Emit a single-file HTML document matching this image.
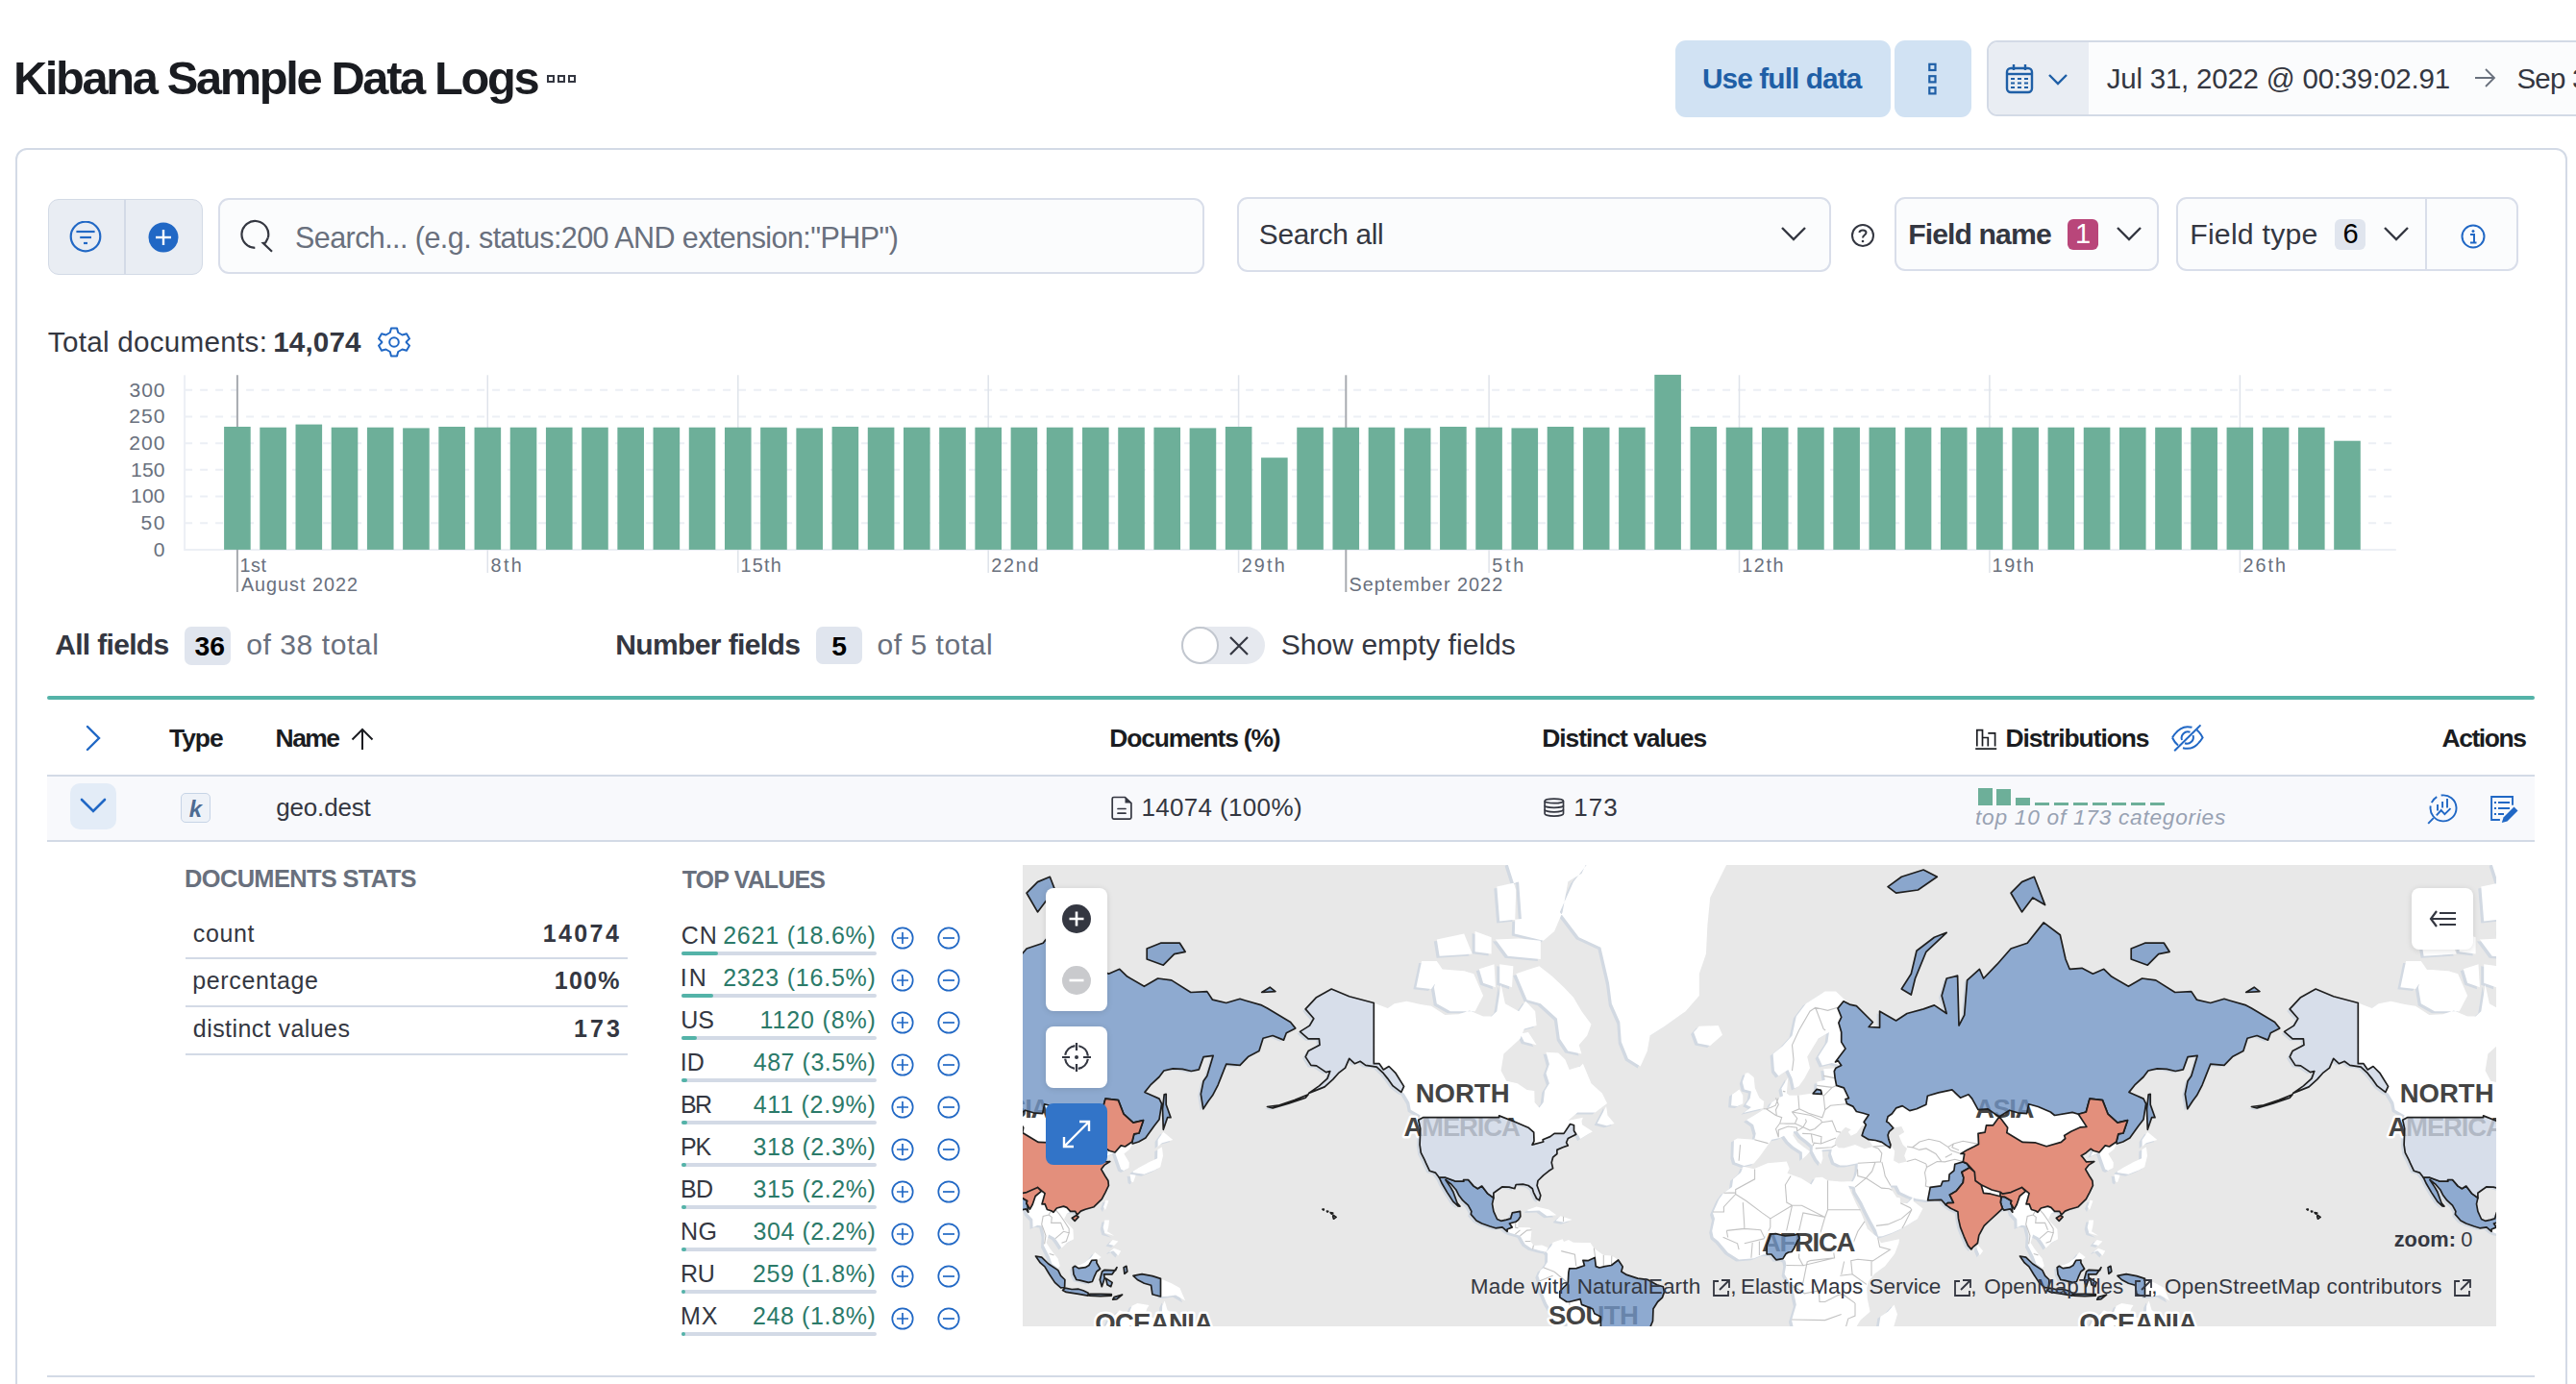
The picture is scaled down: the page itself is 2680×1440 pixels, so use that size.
<!DOCTYPE html>
<html><head><meta charset="utf-8"><title>Kibana</title>
<style>
html,body{margin:0;padding:0;background:#fff;width:2680px;height:1440px;overflow:hidden;position:relative;}
.a{position:absolute;}
.t{position:absolute;white-space:pre;line-height:1;font-family:"Liberation Sans",sans-serif;}
</style></head><body>
<svg class="a" style="left:566px;top:74px" width="40" height="16" viewBox="0 0 40 16"><g fill="none" stroke="#343741" stroke-width="2"><rect x="4" y="5" width="6" height="6"/><rect x="15" y="5" width="6" height="6"/><rect x="26" y="5" width="6" height="6"/></g></svg>
<div class="a" style="left:1743.00px;top:42.00px;width:224.00px;height:80.00px;background:#d1e2f3;border-radius:11px;"></div>
<div class="a" style="left:1971.00px;top:42.00px;width:80.00px;height:80.00px;background:#d1e2f3;border-radius:11px;"></div>
<svg class="a" style="left:2000px;top:60px" width="22" height="44" viewBox="0 0 22 44"><g fill="none" stroke="#1f5fa6" stroke-width="2.2"><rect x="7.3" y="6.8" width="6.2" height="6.2"/><rect x="7.3" y="19.2" width="6.2" height="6.2"/><rect x="7.3" y="31.2" width="6.2" height="6.2"/></g></svg>
<div class="a" style="left:2067.00px;top:42.00px;width:653.00px;height:79.00px;background:#fbfcfd;border:2px solid #d3dae6;border-radius:11px;box-sizing:border-box;"></div>
<div class="a" style="left:2069.00px;top:44.00px;width:104.00px;height:75.00px;background:#e9edf3;border-radius:9px 0 0 9px;"></div>
<svg class="a" style="left:2085px;top:65px" width="32" height="33" viewBox="0 0 32 33"><g fill="none" stroke="#1f5fa6" stroke-width="2.4"><rect x="3" y="6" width="26" height="25" rx="4"/><line x1="3" y1="12" x2="29" y2="12"/><line x1="10" y1="2" x2="10" y2="8"/><line x1="22" y1="2" x2="22" y2="8"/></g><g fill="#1f5fa6"><rect x="7" y="16" width="4" height="2"/><rect x="14" y="16" width="4" height="2"/><rect x="21" y="16" width="4" height="2"/><rect x="7" y="20.5" width="4" height="2"/><rect x="14" y="20.5" width="4" height="2"/><rect x="21" y="20.5" width="4" height="2"/><rect x="7" y="25" width="4" height="2"/><rect x="14" y="25" width="4" height="2"/><rect x="21" y="25" width="4" height="2"/></g></svg>
<svg class="a" style="left:2129px;top:74px" width="24" height="16" viewBox="0 0 24 16"><path d="M3 4 L12 13 L21 4" fill="none" stroke="#1f5fa6" stroke-width="2.4"/></svg>
<svg class="a" style="left:2572px;top:68px" width="26" height="26" viewBox="0 0 26 26"><path d="M3 13 H22 M14 4 L23 13 L14 22" fill="none" stroke="#69707d" stroke-width="1.8"/></svg>
<div class="a" style="left:15.50px;top:154.00px;width:2655.00px;height:1446.00px;border:2px solid #d3dae6;border-radius:12px;box-sizing:border-box;background:#fff;"></div>
<div class="a" style="left:49.50px;top:206.50px;width:161.00px;height:79.00px;background:#e9edf3;border:1.5px solid #d3dae6;border-radius:11px;box-sizing:border-box;"></div>
<div class="a" style="left:129.00px;top:207.00px;width:2.00px;height:78.00px;background:#d3dae6;"></div>
<svg class="a" style="left:72px;top:230px" width="34" height="34" viewBox="0 0 34 34"><g fill="none" stroke="#2168c5" stroke-width="2.2"><circle cx="17" cy="16" r="15.3"/><line x1="7.4" y1="11" x2="26.6" y2="11"/><line x1="11.2" y1="17" x2="23" y2="17"/><line x1="15" y1="23" x2="19" y2="23"/></g></svg>
<svg class="a" style="left:153px;top:230px" width="34" height="34" viewBox="0 0 34 34"><circle cx="17" cy="17" r="15.5" fill="#2168c5"/><g stroke="#fff" stroke-width="2.4"><line x1="17" y1="9" x2="17" y2="25"/><line x1="9" y1="17" x2="25" y2="17"/></g></svg>
<div class="a" style="left:227.20px;top:206.30px;width:1025.80px;height:79.00px;background:#fbfcfd;border:2px solid #d9deea;border-radius:11px;box-sizing:border-box;"></div>
<svg class="a" style="left:249px;top:228px" width="36" height="36" viewBox="0 0 36 36"><g fill="none" stroke="#343741" stroke-width="2.2"><path d="M16.3 29.8 A13.9 13.9 0 1 1 29.8 19.5"/><path d="M29.8 19.5 L27.2 24.6 L24.8 25 L34 33.7"/></g></svg>
<div class="a" style="left:1286.60px;top:204.90px;width:618.40px;height:78.60px;background:#fbfcfd;border:2px solid #d9deea;border-radius:11px;box-sizing:border-box;"></div>
<svg class="a" style="left:1850px;top:232px" width="32" height="24" viewBox="0 0 32 24"><path d="M4 5 L16 17 L28 5" fill="none" stroke="#343741" stroke-width="2.4"/></svg>
<svg class="a" style="left:1925px;top:232px" width="26" height="26" viewBox="0 0 26 26"><circle cx="13" cy="13" r="11" fill="none" stroke="#343741" stroke-width="2"/><path d="M9.5 10 C9.5 6.5 16.5 6.5 16.5 10 C16.5 12.5 13 12.5 13 15.5" fill="none" stroke="#343741" stroke-width="2"/><circle cx="13" cy="19" r="1.3" fill="#343741"/></svg>
<div class="a" style="left:1970.70px;top:204.60px;width:275.80px;height:77.90px;background:#fbfcfd;border:2px solid #d9deea;border-radius:11px;box-sizing:border-box;"></div>
<div class="a" style="left:2151.00px;top:228.00px;width:32.00px;height:32.00px;background:#b9467a;border-radius:6px;"></div>
<svg class="a" style="left:2199px;top:232px" width="32" height="24" viewBox="0 0 32 24"><path d="M4 5 L16 17 L28 5" fill="none" stroke="#343741" stroke-width="2.4"/></svg>
<div class="a" style="left:2263.50px;top:204.60px;width:356.50px;height:77.90px;background:#fbfcfd;border:2px solid #d9deea;border-radius:11px;box-sizing:border-box;"></div>
<div class="a" style="left:2523.00px;top:206.00px;width:2.00px;height:75.00px;background:#d9deea;"></div>
<div class="a" style="left:2429.00px;top:228.00px;width:32.00px;height:32.00px;background:#e0e5ee;border-radius:6px;"></div>
<svg class="a" style="left:2477px;top:232px" width="32" height="24" viewBox="0 0 32 24"><path d="M4 5 L16 17 L28 5" fill="none" stroke="#343741" stroke-width="2.4"/></svg>
<svg class="a" style="left:2559px;top:232px" width="28" height="28" viewBox="0 0 28 28"><circle cx="14" cy="14" r="11.5" fill="none" stroke="#2168c5" stroke-width="2"/><circle cx="14" cy="8.5" r="1.5" fill="#2168c5"/><path d="M11 12 H15 V20 M11 20.5 H17.5" fill="none" stroke="#2168c5" stroke-width="2"/></svg>
<svg class="a" style="left:393px;top:339px" width="34" height="34" viewBox="0 0 34 34"><path d="M14 2.5 H20 L21.2 7 L25.5 9.5 L30 8.2 L33 13.4 L29.7 16.7 V17.3 L33 20.6 L30 25.8 L25.5 24.5 L21.2 27 L20 31.5 H14 L12.8 27 L8.5 24.5 L4 25.8 L1 20.6 L4.3 17.3 V16.7 L1 13.4 L4 8.2 L8.5 9.5 L12.8 7 Z" fill="none" stroke="#2168c5" stroke-width="2" stroke-linejoin="round"/><circle cx="17" cy="17" r="4.8" fill="none" stroke="#2168c5" stroke-width="2"/></svg>
<svg class="a" style="left:0;top:0" width="2680" height="700"><line x1="192.1" y1="544.2" x2="2492.8" y2="544.2" stroke="#eceff5" stroke-width="2" stroke-dasharray="8 8"/><line x1="192.1" y1="516.5" x2="2492.8" y2="516.5" stroke="#eceff5" stroke-width="2" stroke-dasharray="8 8"/><line x1="192.1" y1="488.8" x2="2492.8" y2="488.8" stroke="#eceff5" stroke-width="2" stroke-dasharray="8 8"/><line x1="192.1" y1="461.2" x2="2492.8" y2="461.2" stroke="#eceff5" stroke-width="2" stroke-dasharray="8 8"/><line x1="192.1" y1="433.5" x2="2492.8" y2="433.5" stroke="#eceff5" stroke-width="2" stroke-dasharray="8 8"/><line x1="192.1" y1="405.8" x2="2492.8" y2="405.8" stroke="#eceff5" stroke-width="2" stroke-dasharray="8 8"/><line x1="192.1" y1="390.3" x2="192.1" y2="572.9" stroke="#eceff5" stroke-width="2"/><line x1="192.1" y1="571.9" x2="2492.8" y2="571.9" stroke="#eceff5" stroke-width="2"/><line x1="246.9" y1="390.3" x2="246.9" y2="596" stroke="#dfe3ea" stroke-width="1.5"/><line x1="507.3" y1="390.3" x2="507.3" y2="596" stroke="#dfe3ea" stroke-width="1.5"/><line x1="767.8" y1="390.3" x2="767.8" y2="596" stroke="#dfe3ea" stroke-width="1.5"/><line x1="1028.2" y1="390.3" x2="1028.2" y2="596" stroke="#dfe3ea" stroke-width="1.5"/><line x1="1288.6" y1="390.3" x2="1288.6" y2="596" stroke="#dfe3ea" stroke-width="1.5"/><line x1="1549.1" y1="390.3" x2="1549.1" y2="596" stroke="#dfe3ea" stroke-width="1.5"/><line x1="1809.5" y1="390.3" x2="1809.5" y2="596" stroke="#dfe3ea" stroke-width="1.5"/><line x1="2069.9" y1="390.3" x2="2069.9" y2="596" stroke="#dfe3ea" stroke-width="1.5"/><line x1="2330.4" y1="390.3" x2="2330.4" y2="596" stroke="#dfe3ea" stroke-width="1.5"/><line x1="246.9" y1="390.3" x2="246.9" y2="616" stroke="#a8abb0" stroke-width="2"/><line x1="1400.3" y1="390.3" x2="1400.3" y2="616" stroke="#a8abb0" stroke-width="2"/><rect x="233.10" y="444.0" width="27.6" height="127.9" fill="#6daf99"/><rect x="270.31" y="444.7" width="27.6" height="127.2" fill="#6daf99"/><rect x="307.51" y="441.6" width="27.6" height="130.3" fill="#6daf99"/><rect x="344.71" y="444.7" width="27.6" height="127.2" fill="#6daf99"/><rect x="381.92" y="444.7" width="27.6" height="127.2" fill="#6daf99"/><rect x="419.12" y="445.4" width="27.6" height="126.5" fill="#6daf99"/><rect x="456.33" y="444.0" width="27.6" height="127.9" fill="#6daf99"/><rect x="493.54" y="444.7" width="27.6" height="127.2" fill="#6daf99"/><rect x="530.74" y="444.7" width="27.6" height="127.2" fill="#6daf99"/><rect x="567.95" y="444.7" width="27.6" height="127.2" fill="#6daf99"/><rect x="605.15" y="444.7" width="27.6" height="127.2" fill="#6daf99"/><rect x="642.36" y="444.7" width="27.6" height="127.2" fill="#6daf99"/><rect x="679.56" y="444.7" width="27.6" height="127.2" fill="#6daf99"/><rect x="716.76" y="444.7" width="27.6" height="127.2" fill="#6daf99"/><rect x="753.97" y="444.7" width="27.6" height="127.2" fill="#6daf99"/><rect x="791.17" y="444.7" width="27.6" height="127.2" fill="#6daf99"/><rect x="828.38" y="445.4" width="27.6" height="126.5" fill="#6daf99"/><rect x="865.59" y="444.0" width="27.6" height="127.9" fill="#6daf99"/><rect x="902.79" y="444.7" width="27.6" height="127.2" fill="#6daf99"/><rect x="940.00" y="444.7" width="27.6" height="127.2" fill="#6daf99"/><rect x="977.20" y="444.7" width="27.6" height="127.2" fill="#6daf99"/><rect x="1014.40" y="444.7" width="27.6" height="127.2" fill="#6daf99"/><rect x="1051.61" y="444.7" width="27.6" height="127.2" fill="#6daf99"/><rect x="1088.82" y="444.7" width="27.6" height="127.2" fill="#6daf99"/><rect x="1126.02" y="444.7" width="27.6" height="127.2" fill="#6daf99"/><rect x="1163.23" y="444.7" width="27.6" height="127.2" fill="#6daf99"/><rect x="1200.43" y="444.7" width="27.6" height="127.2" fill="#6daf99"/><rect x="1237.63" y="445.4" width="27.6" height="126.5" fill="#6daf99"/><rect x="1274.84" y="444.0" width="27.6" height="127.9" fill="#6daf99"/><rect x="1312.05" y="476.2" width="27.6" height="95.7" fill="#6daf99"/><rect x="1349.25" y="444.7" width="27.6" height="127.2" fill="#6daf99"/><rect x="1386.46" y="444.7" width="27.6" height="127.2" fill="#6daf99"/><rect x="1423.66" y="444.7" width="27.6" height="127.2" fill="#6daf99"/><rect x="1460.87" y="445.4" width="27.6" height="126.5" fill="#6daf99"/><rect x="1498.07" y="444.0" width="27.6" height="127.9" fill="#6daf99"/><rect x="1535.28" y="444.7" width="27.6" height="127.2" fill="#6daf99"/><rect x="1572.48" y="445.4" width="27.6" height="126.5" fill="#6daf99"/><rect x="1609.69" y="444.0" width="27.6" height="127.9" fill="#6daf99"/><rect x="1646.89" y="444.7" width="27.6" height="127.2" fill="#6daf99"/><rect x="1684.10" y="444.7" width="27.6" height="127.2" fill="#6daf99"/><rect x="1721.30" y="389.9" width="27.6" height="182.0" fill="#6daf99"/><rect x="1758.51" y="444.0" width="27.6" height="127.9" fill="#6daf99"/><rect x="1795.71" y="444.7" width="27.6" height="127.2" fill="#6daf99"/><rect x="1832.91" y="444.7" width="27.6" height="127.2" fill="#6daf99"/><rect x="1870.12" y="444.7" width="27.6" height="127.2" fill="#6daf99"/><rect x="1907.33" y="444.7" width="27.6" height="127.2" fill="#6daf99"/><rect x="1944.53" y="444.7" width="27.6" height="127.2" fill="#6daf99"/><rect x="1981.74" y="444.7" width="27.6" height="127.2" fill="#6daf99"/><rect x="2018.94" y="444.7" width="27.6" height="127.2" fill="#6daf99"/><rect x="2056.14" y="444.7" width="27.6" height="127.2" fill="#6daf99"/><rect x="2093.35" y="444.7" width="27.6" height="127.2" fill="#6daf99"/><rect x="2130.55" y="444.7" width="27.6" height="127.2" fill="#6daf99"/><rect x="2167.76" y="444.7" width="27.6" height="127.2" fill="#6daf99"/><rect x="2204.96" y="444.7" width="27.6" height="127.2" fill="#6daf99"/><rect x="2242.17" y="444.7" width="27.6" height="127.2" fill="#6daf99"/><rect x="2279.37" y="444.7" width="27.6" height="127.2" fill="#6daf99"/><rect x="2316.58" y="444.7" width="27.6" height="127.2" fill="#6daf99"/><rect x="2353.78" y="444.7" width="27.6" height="127.2" fill="#6daf99"/><rect x="2390.99" y="444.7" width="27.6" height="127.2" fill="#6daf99"/><rect x="2428.19" y="458.7" width="27.6" height="113.2" fill="#6daf99"/></svg>
<div class="a" style="left:192.00px;top:652.40px;width:48.40px;height:39.30px;background:#e0e5ee;border-radius:7px;"></div>
<div class="a" style="left:849.00px;top:652.20px;width:47.50px;height:39.20px;background:#e0e5ee;border-radius:7px;"></div>
<div class="a" style="left:1228.60px;top:652.00px;width:87.40px;height:39.00px;background:#e6e9ef;border-radius:20px;"></div>
<div class="a" style="left:1228.6px;top:652px;width:39px;height:39px;border-radius:50%;background:#fff;border:2px solid #c2c7cf;box-sizing:border-box;"></div>
<svg class="a" style="left:1277px;top:660px" width="24" height="24" viewBox="0 0 24 24"><path d="M3 3 L21 21 M21 3 L3 21" stroke="#343741" stroke-width="2.2"/></svg>
<div class="a" style="left:49.30px;top:724.30px;width:2587.70px;height:3.60px;background:#54b3a8;border-radius:2px;"></div>
<svg class="a" style="left:84px;top:752px" width="26" height="32" viewBox="0 0 26 32"><path d="M7 4 L19 16 L7 28" fill="none" stroke="#2168c5" stroke-width="2.4" stroke-linecap="round"/></svg>
<svg class="a" style="left:363px;top:756px" width="28" height="26" viewBox="0 0 28 26"><path d="M14 24 V3 M3.5 13.5 L14 3 L24.5 13.5" fill="none" stroke="#1a1c21" stroke-width="2"/></svg>
<svg class="a" style="left:2054px;top:758px" width="25" height="24" viewBox="0 0 25 24"><g fill="none" stroke="#1a1c21" stroke-width="1.7"><path d="M1.2 21.1 H23.2"/><path d="M2.8 18.4 V1.7 H8.5 V18.4 M8.5 9.5 H14.3 V18.4 M14.3 4.8 H21.6 V18.4"/></g></svg>
<svg class="a" style="left:2258px;top:752px" width="36" height="32" viewBox="0 0 36 32"><g fill="none" stroke="#2168c5" stroke-width="2"><path d="M2 15.5 C6 9 11 4.2 17.8 4.2 C19.5 4.2 21 4.4 22.5 4.8"/><path d="M27.5 7.5 C30 9.5 32 12.2 33.6 15.5 C29.6 22 24.6 26.8 17.8 26.8 C16 26.8 14.5 26.6 13 26.2"/><path d="M8 23.5 C5.5 21.5 3.5 18.8 2 15.5"/><path d="M12 18 A6.5 6.5 0 0 1 20.5 9.8"/><path d="M23.5 13 A6.5 6.5 0 0 1 15 21.2"/><path d="M4.2 29.2 L31.5 2.4"/></g></svg>
<div class="a" style="left:49.30px;top:806.00px;width:2587.70px;height:2.00px;background:#d3dae6;"></div>
<div class="a" style="left:49.30px;top:808.00px;width:2587.70px;height:66.00px;background:#f8f9fc;"></div>
<div class="a" style="left:49.30px;top:873.50px;width:2587.70px;height:2.00px;background:#d3dae6;"></div>
<div class="a" style="left:73.00px;top:815.40px;width:47.70px;height:47.50px;background:#e3ecf7;border-radius:10px;"></div>
<svg class="a" style="left:82px;top:826px" width="30" height="24" viewBox="0 0 30 24"><path d="M3 6 L15 18 L27 6" fill="none" stroke="#2168c5" stroke-width="2.6" stroke-linecap="round"/></svg>
<div class="a" style="left:188.20px;top:825.40px;width:31.30px;height:31.00px;background:#eef2f8;border:1.5px solid #c6d4e6;border-radius:5px;box-sizing:border-box;"></div>
<svg class="a" style="left:1155px;top:828px" width="25" height="26" viewBox="0 0 25 26"><path d="M15.5 1.5 H3.7 Q2.2 1.5 2.2 3 V22.6 Q2.2 24.1 3.7 24.1 H20.4 Q21.9 24.1 21.9 22.6 V7.6 Z" fill="none" stroke="#343741" stroke-width="1.7" stroke-linejoin="round"/><path d="M15.5 1.5 V7.6 H21.9 Z" fill="#343741"/><path d="M8 13.5 H16 M8 18.2 H16" stroke="#343741" stroke-width="1.7" stroke-linecap="round"/></svg>
<svg class="a" style="left:1604px;top:828px" width="26" height="24" viewBox="0 0 26 24"><g fill="none" stroke="#343741" stroke-width="1.7"><ellipse cx="12.8" cy="5.4" rx="9.7" ry="2.3"/><path d="M3.1 5.4 V18.6 C3.1 20 7.5 21.2 12.8 21.2 C18.1 21.2 22.5 20 22.5 18.6 V5.4"/><path d="M3.1 9.9 C3.1 11.3 7.5 12.3 12.8 12.3 C18.1 12.3 22.5 11.3 22.5 9.9"/><path d="M3.1 14.3 C3.1 15.7 7.5 16.8 12.8 16.8 C18.1 16.8 22.5 15.7 22.5 14.3"/></g></svg>
<div class="a" style="left:2057.80px;top:819.50px;width:14.80px;height:18.90px;background:#6daf99;"></div>
<div class="a" style="left:2077.40px;top:821.30px;width:14.80px;height:17.10px;background:#6daf99;"></div>
<div class="a" style="left:2097.40px;top:830.30px;width:14.80px;height:8.10px;background:#6daf99;"></div>
<div class="a" style="left:2117.40px;top:835.40px;width:14.80px;height:3.00px;background:#6daf99;"></div>
<div class="a" style="left:2137.40px;top:835.40px;width:14.80px;height:3.00px;background:#6daf99;"></div>
<div class="a" style="left:2157.40px;top:835.40px;width:14.80px;height:3.00px;background:#6daf99;"></div>
<div class="a" style="left:2177.40px;top:835.40px;width:14.80px;height:3.00px;background:#6daf99;"></div>
<div class="a" style="left:2197.40px;top:835.40px;width:14.80px;height:3.00px;background:#6daf99;"></div>
<div class="a" style="left:2217.40px;top:835.40px;width:14.80px;height:3.00px;background:#6daf99;"></div>
<div class="a" style="left:2237.40px;top:835.40px;width:14.80px;height:3.00px;background:#6daf99;"></div>
<svg class="a" style="left:2522px;top:823px" width="38" height="38" viewBox="0 0 38 38"><g fill="none" stroke="#2168c5" stroke-width="1.9"><path d="M17.66 4.56 A13.5 13.5 0 1 1 6.71 15.51"/><path d="M7.76 12.14 A13.5 13.5 0 0 1 13.25 6.16"/><path d="M9.8 28.1 L4.2 33.9"/><path d="M14 14.1 V20.4 M19.1 11.1 V17.4 M24 8.1 V17.6"/><path d="M12.8 25.3 L17.7 20 L21.4 24.1 L27.5 18.1"/></g></svg>
<svg class="a" style="left:2588px;top:826px" width="34" height="32" viewBox="0 0 34 32"><g fill="none" stroke="#2168c5" stroke-width="1.9"><path d="M26 11.8 V3 H4.1 V27 H12.9"/><path d="M11 9 H23 M11 15 H23 M11 21 H17"/></g><g fill="#2168c5"><rect x="7" y="8" width="2" height="2"/><rect x="7" y="14" width="2" height="2"/><rect x="7" y="20" width="2" height="2"/><path d="M14.8 30 L16.5 24.5 L27.5 13.5 L31.5 17.5 L20.5 28.5 Z"/></g></svg>
<div class="a" style="left:193.20px;top:995.80px;width:459.40px;height:2.00px;background:#d3dae6;"></div>
<div class="a" style="left:193.20px;top:1045.75px;width:459.40px;height:2.00px;background:#d3dae6;"></div>
<div class="a" style="left:193.20px;top:1095.70px;width:459.40px;height:2.00px;background:#d3dae6;"></div>
<div class="a" style="left:709.30px;top:990.10px;width:202.40px;height:3.70px;background:#d3dae6;border-radius:2px;"></div>
<div class="a" style="left:709.30px;top:990.10px;width:37.50px;height:3.70px;background:#54b3a8;border-radius:2px;"></div>
<svg class="a" style="left:926px;top:962.5px" width="26" height="26" viewBox="0 0 26 26"><g fill="none" stroke="#2168c5" stroke-width="1.7"><circle cx="13" cy="13" r="10.7"/><path d="M13 7 V19 M7 13 H19"/></g></svg>
<svg class="a" style="left:974px;top:962.5px" width="26" height="26" viewBox="0 0 26 26"><g fill="none" stroke="#2168c5" stroke-width="1.7"><circle cx="13" cy="13" r="10.7"/><path d="M7 13 H19"/></g></svg>
<div class="a" style="left:709.30px;top:1034.10px;width:202.40px;height:3.70px;background:#d3dae6;border-radius:2px;"></div>
<div class="a" style="left:709.30px;top:1034.10px;width:32.70px;height:3.70px;background:#54b3a8;border-radius:2px;"></div>
<svg class="a" style="left:926px;top:1006.5px" width="26" height="26" viewBox="0 0 26 26"><g fill="none" stroke="#2168c5" stroke-width="1.7"><circle cx="13" cy="13" r="10.7"/><path d="M13 7 V19 M7 13 H19"/></g></svg>
<svg class="a" style="left:974px;top:1006.5px" width="26" height="26" viewBox="0 0 26 26"><g fill="none" stroke="#2168c5" stroke-width="1.7"><circle cx="13" cy="13" r="10.7"/><path d="M7 13 H19"/></g></svg>
<div class="a" style="left:709.30px;top:1078.10px;width:202.40px;height:3.70px;background:#d3dae6;border-radius:2px;"></div>
<div class="a" style="left:709.30px;top:1078.10px;width:15.30px;height:3.70px;background:#54b3a8;border-radius:2px;"></div>
<svg class="a" style="left:926px;top:1050.5px" width="26" height="26" viewBox="0 0 26 26"><g fill="none" stroke="#2168c5" stroke-width="1.7"><circle cx="13" cy="13" r="10.7"/><path d="M13 7 V19 M7 13 H19"/></g></svg>
<svg class="a" style="left:974px;top:1050.5px" width="26" height="26" viewBox="0 0 26 26"><g fill="none" stroke="#2168c5" stroke-width="1.7"><circle cx="13" cy="13" r="10.7"/><path d="M7 13 H19"/></g></svg>
<div class="a" style="left:709.30px;top:1122.10px;width:202.40px;height:3.70px;background:#d3dae6;border-radius:2px;"></div>
<div class="a" style="left:709.30px;top:1122.10px;width:6.00px;height:3.70px;background:#54b3a8;border-radius:2px;"></div>
<svg class="a" style="left:926px;top:1094.5px" width="26" height="26" viewBox="0 0 26 26"><g fill="none" stroke="#2168c5" stroke-width="1.7"><circle cx="13" cy="13" r="10.7"/><path d="M13 7 V19 M7 13 H19"/></g></svg>
<svg class="a" style="left:974px;top:1094.5px" width="26" height="26" viewBox="0 0 26 26"><g fill="none" stroke="#2168c5" stroke-width="1.7"><circle cx="13" cy="13" r="10.7"/><path d="M7 13 H19"/></g></svg>
<div class="a" style="left:709.30px;top:1166.10px;width:202.40px;height:3.70px;background:#d3dae6;border-radius:2px;"></div>
<div class="a" style="left:709.30px;top:1166.10px;width:5.70px;height:3.70px;background:#54b3a8;border-radius:2px;"></div>
<svg class="a" style="left:926px;top:1138.5px" width="26" height="26" viewBox="0 0 26 26"><g fill="none" stroke="#2168c5" stroke-width="1.7"><circle cx="13" cy="13" r="10.7"/><path d="M13 7 V19 M7 13 H19"/></g></svg>
<svg class="a" style="left:974px;top:1138.5px" width="26" height="26" viewBox="0 0 26 26"><g fill="none" stroke="#2168c5" stroke-width="1.7"><circle cx="13" cy="13" r="10.7"/><path d="M7 13 H19"/></g></svg>
<div class="a" style="left:709.30px;top:1210.10px;width:202.40px;height:3.70px;background:#d3dae6;border-radius:2px;"></div>
<div class="a" style="left:709.30px;top:1210.10px;width:4.70px;height:3.70px;background:#54b3a8;border-radius:2px;"></div>
<svg class="a" style="left:926px;top:1182.5px" width="26" height="26" viewBox="0 0 26 26"><g fill="none" stroke="#2168c5" stroke-width="1.7"><circle cx="13" cy="13" r="10.7"/><path d="M13 7 V19 M7 13 H19"/></g></svg>
<svg class="a" style="left:974px;top:1182.5px" width="26" height="26" viewBox="0 0 26 26"><g fill="none" stroke="#2168c5" stroke-width="1.7"><circle cx="13" cy="13" r="10.7"/><path d="M7 13 H19"/></g></svg>
<div class="a" style="left:709.30px;top:1254.10px;width:202.40px;height:3.70px;background:#d3dae6;border-radius:2px;"></div>
<div class="a" style="left:709.30px;top:1254.10px;width:4.70px;height:3.70px;background:#54b3a8;border-radius:2px;"></div>
<svg class="a" style="left:926px;top:1226.5px" width="26" height="26" viewBox="0 0 26 26"><g fill="none" stroke="#2168c5" stroke-width="1.7"><circle cx="13" cy="13" r="10.7"/><path d="M13 7 V19 M7 13 H19"/></g></svg>
<svg class="a" style="left:974px;top:1226.5px" width="26" height="26" viewBox="0 0 26 26"><g fill="none" stroke="#2168c5" stroke-width="1.7"><circle cx="13" cy="13" r="10.7"/><path d="M7 13 H19"/></g></svg>
<div class="a" style="left:709.30px;top:1298.10px;width:202.40px;height:3.70px;background:#d3dae6;border-radius:2px;"></div>
<div class="a" style="left:709.30px;top:1298.10px;width:4.70px;height:3.70px;background:#54b3a8;border-radius:2px;"></div>
<svg class="a" style="left:926px;top:1270.5px" width="26" height="26" viewBox="0 0 26 26"><g fill="none" stroke="#2168c5" stroke-width="1.7"><circle cx="13" cy="13" r="10.7"/><path d="M13 7 V19 M7 13 H19"/></g></svg>
<svg class="a" style="left:974px;top:1270.5px" width="26" height="26" viewBox="0 0 26 26"><g fill="none" stroke="#2168c5" stroke-width="1.7"><circle cx="13" cy="13" r="10.7"/><path d="M7 13 H19"/></g></svg>
<div class="a" style="left:709.30px;top:1342.10px;width:202.40px;height:3.70px;background:#d3dae6;border-radius:2px;"></div>
<div class="a" style="left:709.30px;top:1342.10px;width:4.20px;height:3.70px;background:#54b3a8;border-radius:2px;"></div>
<svg class="a" style="left:926px;top:1314.5px" width="26" height="26" viewBox="0 0 26 26"><g fill="none" stroke="#2168c5" stroke-width="1.7"><circle cx="13" cy="13" r="10.7"/><path d="M13 7 V19 M7 13 H19"/></g></svg>
<svg class="a" style="left:974px;top:1314.5px" width="26" height="26" viewBox="0 0 26 26"><g fill="none" stroke="#2168c5" stroke-width="1.7"><circle cx="13" cy="13" r="10.7"/><path d="M7 13 H19"/></g></svg>
<div class="a" style="left:709.30px;top:1386.10px;width:202.40px;height:3.70px;background:#d3dae6;border-radius:2px;"></div>
<div class="a" style="left:709.30px;top:1386.10px;width:4.20px;height:3.70px;background:#54b3a8;border-radius:2px;"></div>
<svg class="a" style="left:926px;top:1358.5px" width="26" height="26" viewBox="0 0 26 26"><g fill="none" stroke="#2168c5" stroke-width="1.7"><circle cx="13" cy="13" r="10.7"/><path d="M13 7 V19 M7 13 H19"/></g></svg>
<svg class="a" style="left:974px;top:1358.5px" width="26" height="26" viewBox="0 0 26 26"><g fill="none" stroke="#2168c5" stroke-width="1.7"><circle cx="13" cy="13" r="10.7"/><path d="M7 13 H19"/></g></svg>
<div class="a" style="left:49.30px;top:1431.30px;width:2587.70px;height:2.00px;background:#d3dae6;"></div>
<svg class="a" style="left:1064px;top:900px" width="1533" height="480" viewBox="0 0 1533 480">
<rect width="1533" height="480" fill="#e8e8e8"/>
<path d="M-738.5 175.4L-729.9 182.8L-718.6 182.8L-718.0 189.3L-729.9 195.6L-732.8 201.6L-727.1 210.4L-721.4 210.9L-711.4 217.6L-707.2 216.5L-710.0 224.1L-718.6 231.9L-729.4 239.4L-712.9 232.9L-704.3 225.1L-698.6 218.7L-691.5 213.2L-687.3 203.4L-681.6 208.7L-675.9 206.3L-670.2 210.4L-658.8 212.1L-651.7 218.7L-647.4 224.1L-641.8 231.9L-633.2 238.4L-630.4 239.4L-624.7 248.9L-623.3 256.7L-613.3 262.5L-615.3 267.3L-613.3 276.5L-613.9 293.1L-612.7 301.4L-609.0 308.7L-607.6 311.9L-603.6 320.3L-597.7 322.1L-593.7 327.2L-590.6 333.8L-585.4 342.6L-579.2 352.1L-574.1 356.8L-572.1 357.1L-574.9 353.7L-579.2 342.0L-582.0 337.1L-587.1 329.5L-581.5 333.8L-576.3 339.7L-573.5 345.2L-569.2 350.9L-563.5 356.2L-560.1 362.4L-560.7 365.4L-555.0 372.0L-549.3 375.0L-540.8 378.0L-535.1 379.8L-528.0 378.9L-522.9 383.3L-519.4 385.1L-514.6 386.2L-509.5 387.7L-504.4 396.4L-498.1 400.7L-492.4 402.2L-488.2 403.6L-482.2 404.5L-480.5 400.2L-486.7 397.6L-495.3 397.9L-498.7 393.5L-497.5 381.8L-499.5 379.2L-511.8 378.9L-511.5 371.4L-509.2 367.8L-509.5 362.4L-517.7 363.9L-519.4 369.9L-523.7 371.1L-529.4 372.3L-533.4 370.5L-537.1 362.4L-538.5 354.6L-537.1 348.4L-537.1 343.3L-528.0 336.8L-520.9 337.1L-515.2 338.7L-513.8 334.5L-506.6 334.2L-501.0 335.5L-496.7 338.7L-495.6 342.6L-492.4 349.0L-489.6 350.9L-488.2 345.8L-491.9 335.5L-491.0 330.5L-485.3 324.8L-479.6 320.3L-475.4 317.6L-476.8 311.6L-475.4 306.2L-471.1 302.5L-471.1 298.4L-465.1 295.8L-459.7 293.9L-461.4 290.8L-459.7 286.5L-451.2 282.2L-448.9 283.0L-446.9 286.9L-441.2 283.4L-434.1 279.3L-444.9 272.3L-445.5 268.5L-444.1 264.7L-459.7 268.1L-449.8 259.4L-431.3 259.4L-424.2 254.0L-419.0 249.9L-424.2 239.4L-435.5 229.3L-444.1 208.7L-446.9 211.5L-458.3 214.9L-462.6 204.6L-469.7 197.4L-482.5 196.8L-479.1 209.2L-482.5 218.7L-479.1 229.3L-483.9 236.9L-485.3 248.9L-489.6 254.5L-494.4 248.9L-494.7 236.9L-502.4 235.9L-512.3 229.3L-523.7 226.7L-529.4 216.0L-526.6 198.6L-509.5 182.8L-505.2 172.6L-492.4 169.1L-493.8 154.2L-503.8 143.8L-510.9 154.2L-525.1 146.3L-529.4 126.5L-533.7 154.2L-539.4 159.6L-547.9 159.6L-562.1 153.4L-573.5 157.3L-587.7 158.1L-601.9 148.7L-613.3 147.1L-627.5 143.8L-640.3 146.3L-647.4 151.1L-661.7 145.5L-687.3 138.8L-705.8 131.0L-721.4 139.7L-732.8 151.9L-724.2 161.8L-728.5 169.1ZM285.5 175.4L294.1 182.8L305.4 182.8L306.0 189.3L294.1 195.6L291.2 201.6L296.9 210.4L302.6 210.9L312.6 217.6L316.8 216.5L314.0 224.1L305.4 231.9L294.6 239.4L311.1 232.9L319.7 225.1L325.4 218.7L332.5 213.2L336.7 203.4L342.4 208.7L348.1 206.3L353.8 210.4L365.2 212.1L372.3 218.7L376.6 224.1L382.2 231.9L390.8 238.4L393.6 239.4L399.3 248.9L400.7 256.7L410.7 262.5L408.7 267.3L410.7 276.5L410.1 293.1L411.3 301.4L415.0 308.7L416.4 311.9L420.4 320.3L426.3 322.1L430.3 327.2L433.4 333.8L438.6 342.6L444.8 352.1L449.9 356.8L451.9 357.1L449.1 353.7L444.8 342.0L442.0 337.1L436.9 329.5L442.5 333.8L447.7 339.7L450.5 345.2L454.8 350.9L460.5 356.2L463.9 362.4L463.3 365.4L469.0 372.0L474.7 375.0L483.2 378.0L488.9 379.8L496.0 378.9L501.1 383.3L504.6 385.1L509.4 386.2L514.5 387.7L519.6 396.4L525.9 400.7L531.6 402.2L535.8 403.6L541.8 404.5L543.5 400.2L537.3 397.6L528.7 397.9L525.3 393.5L526.5 381.8L524.5 379.2L512.2 378.9L512.5 371.4L514.8 367.8L514.5 362.4L506.3 363.9L504.6 369.9L500.3 371.1L494.6 372.3L490.6 370.5L486.9 362.4L485.5 354.6L486.9 348.4L486.9 343.3L496.0 336.8L503.1 337.1L508.8 338.7L510.2 334.5L517.4 334.2L523.0 335.5L527.3 338.7L528.4 342.6L531.6 349.0L534.4 350.9L535.8 345.8L532.1 335.5L533.0 330.5L538.7 324.8L544.4 320.3L548.6 317.6L547.2 311.6L548.6 306.2L552.9 302.5L552.9 298.4L558.9 295.8L564.3 293.9L562.6 290.8L564.3 286.5L572.8 282.2L575.1 283.0L577.1 286.9L582.8 283.4L589.9 279.3L579.1 272.3L578.5 268.5L579.9 264.7L564.3 268.1L574.2 259.4L592.7 259.4L599.8 254.0L605.0 249.9L599.8 239.4L588.5 229.3L579.9 208.7L577.1 211.5L565.7 214.9L561.4 204.6L554.3 197.4L541.5 196.8L544.9 209.2L541.5 218.7L544.9 229.3L540.1 236.9L538.7 248.9L534.4 254.5L529.6 248.9L529.3 236.9L521.6 235.9L511.7 229.3L500.3 226.7L494.6 216.0L497.4 198.6L514.5 182.8L518.8 172.6L531.6 169.1L530.2 154.2L520.2 143.8L513.1 154.2L498.9 146.3L494.6 126.5L490.3 154.2L484.6 159.6L476.1 159.6L461.9 153.4L450.5 157.3L436.3 158.1L422.1 148.7L410.7 147.1L396.5 143.8L383.7 146.3L376.6 151.1L362.3 145.5L336.7 138.8L318.2 131.0L302.6 139.7L291.2 151.9L299.8 161.8L295.5 169.1ZM1309.5 175.4L1318.1 182.8L1329.4 182.8L1330.0 189.3L1318.1 195.6L1315.2 201.6L1320.9 210.4L1326.6 210.9L1336.6 217.6L1340.8 216.5L1338.0 224.1L1329.4 231.9L1318.6 239.4L1335.1 232.9L1343.7 225.1L1349.4 218.7L1356.5 213.2L1360.7 203.4L1366.4 208.7L1372.1 206.3L1377.8 210.4L1389.2 212.1L1396.3 218.7L1400.6 224.1L1406.2 231.9L1414.8 238.4L1417.6 239.4L1423.3 248.9L1424.7 256.7L1434.7 262.5L1432.7 267.3L1434.7 276.5L1434.1 293.1L1435.3 301.4L1439.0 308.7L1440.4 311.9L1444.4 320.3L1450.3 322.1L1454.3 327.2L1457.4 333.8L1462.6 342.6L1468.8 352.1L1473.9 356.8L1475.9 357.1L1473.1 353.7L1468.8 342.0L1466.0 337.1L1460.9 329.5L1466.5 333.8L1471.7 339.7L1474.5 345.2L1478.8 350.9L1484.5 356.2L1487.9 362.4L1487.3 365.4L1493.0 372.0L1498.7 375.0L1507.2 378.0L1512.9 379.8L1520.0 378.9L1525.1 383.3L1528.6 385.1L1533.4 386.2L1538.5 387.7L1543.6 396.4L1549.9 400.7L1555.6 402.2L1559.8 403.6L1565.8 404.5L1567.5 400.2L1561.3 397.6L1552.7 397.9L1549.3 393.5L1550.5 381.8L1548.5 379.2L1536.2 378.9L1536.5 371.4L1538.8 367.8L1538.5 362.4L1530.3 363.9L1528.6 369.9L1524.3 371.1L1518.6 372.3L1514.6 370.5L1510.9 362.4L1509.5 354.6L1510.9 348.4L1510.9 343.3L1520.0 336.8L1527.1 337.1L1532.8 338.7L1534.2 334.5L1541.4 334.2L1547.0 335.5L1551.3 338.7L1552.4 342.6L1555.6 349.0L1558.4 350.9L1559.8 345.8L1556.1 335.5L1557.0 330.5L1562.7 324.8L1568.4 320.3L1572.6 317.6L1571.2 311.6L1572.6 306.2L1576.9 302.5L1576.9 298.4L1582.9 295.8L1588.3 293.9L1586.6 290.8L1588.3 286.5L1596.8 282.2L1599.1 283.0L1601.1 286.9L1606.8 283.4L1613.9 279.3L1603.1 272.3L1602.5 268.5L1603.9 264.7L1588.3 268.1L1598.2 259.4L1616.7 259.4L1623.8 254.0L1629.0 249.9L1623.8 239.4L1612.5 229.3L1603.9 208.7L1601.1 211.5L1589.7 214.9L1585.4 204.6L1578.3 197.4L1565.5 196.8L1568.9 209.2L1565.5 218.7L1568.9 229.3L1564.1 236.9L1562.7 248.9L1558.4 254.5L1553.6 248.9L1553.3 236.9L1545.6 235.9L1535.7 229.3L1524.3 226.7L1518.6 216.0L1521.4 198.6L1538.5 182.8L1542.8 172.6L1555.6 169.1L1554.2 154.2L1544.2 143.8L1537.1 154.2L1522.9 146.3L1518.6 126.5L1514.3 154.2L1508.6 159.6L1500.1 159.6L1485.9 153.4L1474.5 157.3L1460.3 158.1L1446.1 148.7L1434.7 147.1L1420.5 143.8L1407.7 146.3L1400.6 151.1L1386.3 145.5L1360.7 138.8L1342.2 131.0L1326.6 139.7L1315.2 151.9L1323.8 161.8L1319.5 169.1ZM-429.3 270.7L-419.9 253.1L-418.5 262.5L-411.4 271.1L-419.3 273.2ZM594.7 270.7L604.1 253.1L605.5 262.5L612.6 271.1L604.7 273.2ZM1618.7 270.7L1628.1 253.1L1629.5 262.5L1636.6 271.1L1628.7 273.2ZM-435.5 167.7L-445.5 154.2L-454.0 139.7L-464.0 129.2L-476.8 117.2L-489.6 107.3L-502.4 111.3L-513.8 115.2L-502.4 142.2L-488.2 146.3L-471.1 161.8L-468.2 182.8L-459.7 195.6L-445.5 198.6L-448.3 189.3L-439.8 179.5ZM588.5 167.7L578.5 154.2L570.0 139.7L560.0 129.2L547.2 117.2L534.4 107.3L521.6 111.3L510.2 115.2L521.6 142.2L535.8 146.3L552.9 161.8L555.8 182.8L564.3 195.6L578.5 198.6L575.7 189.3L584.2 179.5ZM1612.5 167.7L1602.5 154.2L1594.0 139.7L1584.0 129.2L1571.2 117.2L1558.4 107.3L1545.6 111.3L1534.2 115.2L1545.6 142.2L1559.8 146.3L1576.9 161.8L1579.8 182.8L1588.3 195.6L1602.5 198.6L1599.7 189.3L1608.2 179.5ZM-599.1 129.2L-593.4 110.3L-567.8 112.3L-557.8 115.2L-547.9 138.0L-556.4 154.2L-582.0 154.2L-596.2 146.3ZM424.9 129.2L430.6 110.3L456.2 112.3L466.2 115.2L476.1 138.0L467.6 154.2L442.0 154.2L427.8 146.3ZM1448.9 129.2L1454.6 110.3L1480.2 112.3L1490.2 115.2L1500.1 138.0L1491.6 154.2L1466.0 154.2L1451.8 146.3ZM-617.6 129.2L-611.9 102.1L-596.2 102.1L-589.1 112.3L-601.9 131.0ZM406.4 129.2L412.1 102.1L427.8 102.1L434.9 112.3L422.1 131.0ZM1430.4 129.2L1436.1 102.1L1451.8 102.1L1458.9 112.3L1446.1 131.0ZM-473.9 71.0L-485.3 80.8L-515.2 73.5L-513.8 28.0L-522.3 1.4L-488.2 -42.5L-431.3 -19.1L-445.5 10.7L-459.7 19.6L-465.4 50.9ZM550.1 71.0L538.7 80.8L508.8 73.5L510.2 28.0L501.7 1.4L535.8 -42.5L592.7 -19.1L578.5 10.7L564.3 19.6L558.6 50.9ZM1574.1 71.0L1562.7 80.8L1532.8 73.5L1534.2 28.0L1525.7 1.4L1559.8 -42.5L1616.7 -19.1L1602.5 10.7L1588.3 19.6L1582.6 50.9ZM-530.8 60.6L-508.1 57.9L-510.9 19.6L-533.7 24.6ZM493.2 60.6L515.9 57.9L513.1 19.6L490.3 24.6ZM1517.2 60.6L1539.9 57.9L1537.1 19.6L1514.3 24.6ZM-488.2 100.0L-522.3 96.7L-535.1 79.6L-510.9 78.4L-488.2 80.8ZM535.8 100.0L501.7 96.7L488.9 79.6L513.1 78.4L535.8 80.8ZM1559.8 100.0L1525.7 96.7L1512.9 79.6L1537.1 78.4L1559.8 80.8ZM-518.0 129.2L-530.8 124.7L-530.8 105.2L-516.6 107.3ZM506.0 129.2L493.2 124.7L493.2 105.2L507.4 107.3ZM1530.0 129.2L1517.2 124.7L1517.2 105.2L1531.4 107.3ZM-535.1 129.2L-547.9 124.7L-552.2 110.3L-536.5 105.2ZM488.9 129.2L476.1 124.7L471.8 110.3L487.5 105.2ZM1512.9 129.2L1500.1 124.7L1495.8 110.3L1511.5 105.2ZM-559.3 94.6L-593.4 96.7L-596.2 79.6L-567.8 73.5ZM464.7 94.6L430.6 96.7L427.8 79.6L456.2 73.5ZM1488.7 94.6L1454.6 96.7L1451.8 79.6L1480.2 73.5ZM-539.4 94.6L-556.4 92.3L-556.4 71.0L-539.4 77.2ZM484.6 94.6L467.6 92.3L467.6 71.0L484.6 77.2ZM1508.6 94.6L1491.6 92.3L1491.6 71.0L1508.6 77.2ZM-505.2 186.1L-492.4 189.3L-501.0 176.1L-509.5 177.5ZM518.8 186.1L531.6 189.3L523.0 176.1L514.5 177.5ZM1542.8 186.1L1555.6 189.3L1547.0 176.1L1538.5 177.5ZM-468.2 50.9L-448.3 77.2L-425.6 87.8L-417.0 124.7L-414.2 146.3L-405.7 165.5L-404.2 186.1L-397.1 203.4L-384.3 211.5L-377.2 195.6L-374.4 179.5L-360.2 170.5L-337.4 154.2L-323.2 138.0L-323.2 115.2L-316.1 94.6L-314.6 64.6L-311.8 35.9L-294.7 1.4L-345.9 -42.5L-402.8 -19.1L-437.0 -2.5L-454.0 19.6ZM555.8 50.9L575.7 77.2L598.4 87.8L607.0 124.7L609.8 146.3L618.3 165.5L619.8 186.1L626.9 203.4L639.7 211.5L646.8 195.6L649.6 179.5L663.8 170.5L686.6 154.2L700.8 138.0L700.8 115.2L707.9 94.6L709.4 64.6L712.2 35.9L729.3 1.4L678.1 -42.5L621.2 -19.1L587.0 -2.5L570.0 19.6ZM1579.8 50.9L1599.7 77.2L1622.4 87.8L1631.0 124.7L1633.8 146.3L1642.3 165.5L1643.8 186.1L1650.9 203.4L1663.7 211.5L1670.8 195.6L1673.6 179.5L1687.8 170.5L1710.6 154.2L1724.8 138.0L1724.8 115.2L1731.9 94.6L1733.4 64.6L1736.2 35.9L1753.3 1.4L1702.1 -42.5L1645.2 -19.1L1611.0 -2.5L1594.0 19.6ZM-328.9 176.1L-323.2 169.8L-303.3 169.1L-299.0 178.8L-311.8 189.9L-324.6 187.4ZM695.1 176.1L700.8 169.8L720.7 169.1L725.0 178.8L712.2 189.9L699.4 187.4ZM1719.1 176.1L1724.8 169.8L1744.7 169.1L1749.0 178.8L1736.2 189.9L1723.4 187.4ZM-502.4 361.1L-492.4 357.4L-479.6 360.5L-471.7 366.3L-481.6 367.2L-489.6 361.4L-501.0 362.1ZM521.6 361.1L531.6 357.4L544.4 360.5L552.3 366.3L542.4 367.2L534.4 361.4L523.0 362.1ZM1545.6 361.1L1555.6 357.4L1568.4 360.5L1576.3 366.3L1566.4 367.2L1558.4 361.4L1547.0 362.1ZM-472.2 371.7L-467.4 367.2L-455.4 371.1L-464.0 373.8L-471.9 372.3ZM551.8 371.7L556.6 367.2L568.6 371.1L560.0 373.8L552.1 372.3ZM1575.8 371.7L1580.6 367.2L1592.6 371.1L1584.0 373.8L1576.1 372.3ZM-482.2 404.5L-476.8 398.1L-475.4 394.7L-465.4 391.2L-464.0 394.1L-459.1 392.1L-454.0 394.7L-442.6 395.0L-436.4 395.0L-432.7 400.7L-422.7 407.9L-414.2 408.5L-407.1 413.0L-402.8 419.9L-404.2 425.0L-398.6 428.4L-387.2 432.1L-377.2 433.3L-367.3 438.7L-360.7 440.7L-359.6 446.4L-361.6 452.1L-366.4 456.5L-371.0 463.8L-371.5 476.5L-374.9 484.6L-377.2 489.2L-385.8 492.3L-398.6 503.2L-461.1 501.6L-460.3 478.3L-475.4 469.0L-481.9 457.9L-486.7 446.4L-491.6 440.7L-489.0 434.7L-490.7 429.3L-488.2 423.6L-484.7 420.7L-481.0 415.0L-480.8 406.5ZM541.8 404.5L547.2 398.1L548.6 394.7L558.6 391.2L560.0 394.1L564.9 392.1L570.0 394.7L581.4 395.0L587.6 395.0L591.3 400.7L601.3 407.9L609.8 408.5L616.9 413.0L621.2 419.9L619.8 425.0L625.4 428.4L636.8 432.1L646.8 433.3L656.7 438.7L663.3 440.7L664.4 446.4L662.4 452.1L657.6 456.5L653.0 463.8L652.5 476.5L649.1 484.6L646.8 489.2L638.2 492.3L625.4 503.2L562.9 501.6L563.7 478.3L548.6 469.0L542.1 457.9L537.3 446.4L532.4 440.7L535.0 434.7L533.3 429.3L535.8 423.6L539.3 420.7L543.0 415.0L543.2 406.5ZM1565.8 404.5L1571.2 398.1L1572.6 394.7L1582.6 391.2L1584.0 394.1L1588.9 392.1L1594.0 394.7L1605.4 395.0L1611.6 395.0L1615.3 400.7L1625.3 407.9L1633.8 408.5L1640.9 413.0L1645.2 419.9L1643.8 425.0L1649.4 428.4L1660.8 432.1L1670.8 433.3L1680.7 438.7L1687.3 440.7L1688.4 446.4L1686.4 452.1L1681.6 456.5L1677.0 463.8L1676.5 476.5L1673.1 484.6L1670.8 489.2L1662.2 492.3L1649.4 503.2L1586.9 501.6L1587.7 478.3L1572.6 469.0L1566.1 457.9L1561.3 446.4L1556.4 440.7L1559.0 434.7L1557.3 429.3L1559.8 423.6L1563.3 420.7L1567.0 415.0L1567.2 406.5ZM-277.4 315.8L-266.3 318.3L-252.1 312.3L-232.2 310.5L-229.3 317.9L-231.6 322.7L-217.4 327.8L-206.6 334.5L-202.3 327.2L-195.2 326.8L-189.5 330.2L-175.8 331.5L-168.7 331.2L-163.3 331.2L-161.3 337.1L-167.9 335.8L-165.3 342.6L-159.6 355.0L-154.8 363.9L-151.1 372.9L-148.2 380.4L-142.6 385.4L-137.4 389.5L-134.0 395.3L-115.0 391.2L-115.5 395.3L-119.8 406.5L-129.8 419.3L-141.1 427.8L-146.8 435.0L-148.8 442.1L-148.2 453.6L-145.4 466.7L-155.4 475.6L-161.0 484.6L-159.6 495.4L-166.7 501.6L-220.8 501.6L-227.0 475.6L-222.2 459.4L-225.9 442.1L-234.4 427.8L-232.7 417.9L-233.6 413.6L-236.4 412.2L-243.5 412.8L-247.8 407.0L-256.3 407.3L-266.3 411.3L-281.9 412.5L-293.3 405.3L-298.4 399.3L-303.3 393.5L-308.4 389.2L-309.8 382.7L-307.0 369.9L-309.0 363.9L-302.7 349.9L-298.1 343.6L-289.0 337.1L-287.9 328.8L-279.9 322.1ZM746.6 315.8L757.7 318.3L771.9 312.3L791.8 310.5L794.7 317.9L792.4 322.7L806.6 327.8L817.4 334.5L821.7 327.2L828.8 326.8L834.5 330.2L848.2 331.5L855.3 331.2L860.7 331.2L862.7 337.1L856.1 335.8L858.7 342.6L864.4 355.0L869.2 363.9L872.9 372.9L875.8 380.4L881.4 385.4L886.6 389.5L890.0 395.3L909.0 391.2L908.5 395.3L904.2 406.5L894.2 419.3L882.9 427.8L877.2 435.0L875.2 442.1L875.8 453.6L878.6 466.7L868.6 475.6L863.0 484.6L864.4 495.4L857.3 501.6L803.2 501.6L797.0 475.6L801.8 459.4L798.1 442.1L789.6 427.8L791.3 417.9L790.4 413.6L787.6 412.2L780.5 412.8L776.2 407.0L767.7 407.3L757.7 411.3L742.1 412.5L730.7 405.3L725.6 399.3L720.7 393.5L715.6 389.2L714.2 382.7L717.0 369.9L715.0 363.9L721.3 349.9L725.9 343.6L735.0 337.1L736.1 328.8L744.1 322.1ZM1770.6 315.8L1781.7 318.3L1795.9 312.3L1815.8 310.5L1818.7 317.9L1816.4 322.7L1830.6 327.8L1841.4 334.5L1845.7 327.2L1852.8 326.8L1858.5 330.2L1872.2 331.5L1879.3 331.2L1884.7 331.2L1886.7 337.1L1880.1 335.8L1882.7 342.6L1888.4 355.0L1893.2 363.9L1896.9 372.9L1899.8 380.4L1905.4 385.4L1910.6 389.5L1914.0 395.3L1933.0 391.2L1932.5 395.3L1928.2 406.5L1918.2 419.3L1906.9 427.8L1901.2 435.0L1899.2 442.1L1899.8 453.6L1902.6 466.7L1892.6 475.6L1887.0 484.6L1888.4 495.4L1881.3 501.6L1827.2 501.6L1821.0 475.6L1825.8 459.4L1822.1 442.1L1813.6 427.8L1815.3 417.9L1814.4 413.6L1811.6 412.2L1804.5 412.8L1800.2 407.0L1791.7 407.3L1781.7 411.3L1766.1 412.5L1754.7 405.3L1749.6 399.3L1744.7 393.5L1739.6 389.2L1738.2 382.7L1741.0 369.9L1739.0 363.9L1745.3 349.9L1749.9 343.6L1759.0 337.1L1760.1 328.8L1768.1 322.1ZM-120.4 459.4L-117.0 469.6L-125.5 498.5L-135.4 498.5L-137.4 489.2L-134.6 471.7L-126.9 466.7ZM903.6 459.4L907.0 469.6L898.5 498.5L888.6 498.5L886.6 489.2L889.4 471.7L897.1 466.7ZM1927.6 459.4L1931.0 469.6L1922.5 498.5L1912.6 498.5L1910.6 489.2L1913.4 471.7L1921.1 466.7ZM-287.1 288.5L-287.6 305.4L-285.9 311.6L-276.5 315.1L-266.3 312.6L-260.0 305.1L-251.5 293.1L-247.8 287.7L-239.3 286.1L-235.0 283.8L-230.7 289.7L-225.0 295.0L-216.2 300.7L-215.9 308.0L-212.0 304.4L-208.0 299.9L-215.1 295.0L-220.8 290.4L-225.6 283.4L-225.0 279.3L-221.3 278.9L-217.4 284.2L-210.8 289.3L-205.1 294.3L-205.4 299.5L-200.9 308.0L-196.6 313.3L-194.6 307.3L-195.5 298.4L-185.2 297.7L-186.1 302.5L-182.9 311.6L-176.7 314.4L-169.6 314.4L-158.2 312.3L-158.5 318.6L-159.6 323.8L-161.3 327.8L-163.3 331.2L-161.3 337.1L-160.5 342.0L-153.9 353.1L-149.4 362.4L-144.0 372.9L-139.1 381.8L-136.9 388.6L-132.6 388.3L-122.6 384.8L-112.1 380.1L-104.2 375.3L-96.2 370.2L-90.5 359.6L-100.2 352.1L-100.5 347.1L-102.7 349.9L-107.0 354.0L-113.8 353.7L-114.1 348.4L-117.8 347.7L-122.6 340.4L-124.4 335.5L-117.5 335.5L-114.1 342.3L-104.7 346.8L-97.6 349.3L-85.4 350.9L-71.4 350.3L-66.6 355.6L-61.5 359.3L-54.1 362.7L-53.5 369.9L-51.5 378.9L-47.8 388.3L-43.6 397.9L-40.2 401.9L-38.2 399.3L-33.6 395.5L-32.2 387.4L-26.8 377.4L-21.1 372.0L-13.4 364.8L-9.7 361.4L-6.0 361.1L0.5 359.9L1.9 364.8L7.3 370.5L7.6 378.9L12.5 376.8L17.3 377.4L19.6 387.7L19.0 397.9L24.7 409.3L27.5 417.0L33.8 421.3L35.8 419.3L33.5 411.3L30.1 407.3L25.3 400.7L21.6 395.0L24.1 386.5L30.4 390.0L33.8 394.7L37.5 400.4L42.9 395.3L50.0 391.2L49.4 381.0L42.6 373.8L40.1 370.5L42.9 364.8L46.6 362.4L51.7 362.4L53.7 366.0L57.4 362.1L62.2 360.2L71.1 357.7L79.3 349.6L83.0 342.6L86.4 335.5L85.9 330.5L82.7 325.5L78.7 318.6L82.2 314.1L87.8 310.5L79.6 310.9L76.5 306.9L74.2 304.4L79.3 301.4L84.1 297.3L87.0 299.2L84.1 305.1L93.0 301.0L95.8 309.1L99.2 318.6L102.1 320.0L107.5 316.9L107.8 311.6L102.4 302.5L108.3 297.7L111.2 292.0L117.7 290.0L124.8 286.1L133.4 274.0L139.0 266.8L141.6 250.3L139.0 245.1L131.4 241.8L124.0 238.4L130.5 230.3L139.0 222.5L143.9 216.0L153.3 213.8L163.2 214.3L172.3 216.5L180.3 214.9L185.1 201.6L195.1 200.4L188.8 221.4L185.1 226.7L182.3 240.3L184.8 255.8L190.2 247.5L194.5 241.8L200.2 230.8L203.9 221.4L208.7 209.2L223.0 210.4L231.5 201.6L242.9 195.6L247.1 182.2L257.1 179.5L268.5 184.1L271.3 176.8L280.7 171.9L275.6 165.5L265.6 159.6L251.4 151.1L245.7 147.9L228.6 143.0L223.0 141.3L208.7 145.5L194.5 142.2L188.8 133.6L171.8 134.5L151.8 121.9L137.6 120.0L123.4 128.3L105.8 118.1L97.8 110.3L86.4 115.2L75.0 109.3L62.2 110.3L58.0 100.0L52.3 74.8L35.2 61.9L18.2 83.2L1.1 89.0L-13.1 105.2L-27.4 120.0L-31.6 110.3L-44.4 121.9L-47.3 158.1L-53.0 169.1L-54.4 117.2L-65.8 120.0L-70.9 138.0L-65.8 156.5L-78.6 147.9L-89.9 151.9L-107.0 156.5L-118.4 164.0L-135.4 154.2L-135.4 171.2L-146.8 170.5L-142.6 165.5L-159.6 148.7L-166.7 147.1L-181.0 133.6L-192.3 133.6L-212.2 146.3L-222.2 159.6L-226.5 179.5L-236.4 190.6L-246.4 198.6L-245.0 216.0L-240.7 221.4L-230.7 214.9L-226.5 224.1L-224.2 234.4L-219.4 231.9L-213.7 224.1L-208.0 213.2L-210.8 201.6L-199.4 182.8L-188.1 176.1L-189.5 186.1L-199.4 201.6L-195.2 210.4L-185.2 208.1L-175.3 210.4L-181.0 213.2L-193.8 214.3L-192.3 225.7L-200.6 227.8L-200.9 236.9L-206.6 239.8L-220.2 241.8L-229.3 241.8L-232.2 239.4L-230.7 223.0L-237.6 234.4L-235.9 242.3L-240.7 244.2L-247.8 248.9L-250.6 254.0L-256.0 256.3L-264.3 261.6L-274.0 267.3L-266.9 272.3L-264.3 281.4L-265.7 287.7L-283.4 286.5ZM736.9 288.5L736.4 305.4L738.1 311.6L747.5 315.1L757.7 312.6L764.0 305.1L772.5 293.1L776.2 287.7L784.7 286.1L789.0 283.8L793.3 289.7L799.0 295.0L807.8 300.7L808.1 308.0L812.0 304.4L816.0 299.9L808.9 295.0L803.2 290.4L798.4 283.4L799.0 279.3L802.7 278.9L806.6 284.2L813.2 289.3L818.9 294.3L818.6 299.5L823.1 308.0L827.4 313.3L829.4 307.3L828.5 298.4L838.8 297.7L837.9 302.5L841.1 311.6L847.3 314.4L854.4 314.4L865.8 312.3L865.5 318.6L864.4 323.8L862.7 327.8L860.7 331.2L862.7 337.1L863.5 342.0L870.1 353.1L874.6 362.4L880.0 372.9L884.9 381.8L887.1 388.6L891.4 388.3L901.4 384.8L911.9 380.1L919.8 375.3L927.8 370.2L933.5 359.6L923.8 352.1L923.5 347.1L921.3 349.9L917.0 354.0L910.2 353.7L909.9 348.4L906.2 347.7L901.4 340.4L899.6 335.5L906.5 335.5L909.9 342.3L919.3 346.8L926.4 349.3L938.6 350.9L952.6 350.3L957.4 355.6L962.5 359.3L969.9 362.7L970.5 369.9L972.5 378.9L976.2 388.3L980.4 397.9L983.8 401.9L985.8 399.3L990.4 395.5L991.8 387.4L997.2 377.4L1002.9 372.0L1010.6 364.8L1014.3 361.4L1018.0 361.1L1024.5 359.9L1025.9 364.8L1031.3 370.5L1031.6 378.9L1036.5 376.8L1041.3 377.4L1043.6 387.7L1043.0 397.9L1048.7 409.3L1051.5 417.0L1057.8 421.3L1059.8 419.3L1057.5 411.3L1054.1 407.3L1049.3 400.7L1045.6 395.0L1048.1 386.5L1054.4 390.0L1057.8 394.7L1061.5 400.4L1066.9 395.3L1074.0 391.2L1073.4 381.0L1066.6 373.8L1064.1 370.5L1066.9 364.8L1070.6 362.4L1075.7 362.4L1077.7 366.0L1081.4 362.1L1086.2 360.2L1095.1 357.7L1103.3 349.6L1107.0 342.6L1110.4 335.5L1109.9 330.5L1106.7 325.5L1102.7 318.6L1106.2 314.1L1111.8 310.5L1103.6 310.9L1100.5 306.9L1098.2 304.4L1103.3 301.4L1108.1 297.3L1111.0 299.2L1108.1 305.1L1117.0 301.0L1119.8 309.1L1123.2 318.6L1126.1 320.0L1131.5 316.9L1131.8 311.6L1126.4 302.5L1132.3 297.7L1135.2 292.0L1141.7 290.0L1148.8 286.1L1157.4 274.0L1163.0 266.8L1165.6 250.3L1163.0 245.1L1155.4 241.8L1148.0 238.4L1154.5 230.3L1163.0 222.5L1167.9 216.0L1177.3 213.8L1187.2 214.3L1196.3 216.5L1204.3 214.9L1209.1 201.6L1219.1 200.4L1212.8 221.4L1209.1 226.7L1206.3 240.3L1208.8 255.8L1214.2 247.5L1218.5 241.8L1224.2 230.8L1227.9 221.4L1232.7 209.2L1247.0 210.4L1255.5 201.6L1266.9 195.6L1271.1 182.2L1281.1 179.5L1292.5 184.1L1295.3 176.8L1304.7 171.9L1299.6 165.5L1289.6 159.6L1275.4 151.1L1269.7 147.9L1252.6 143.0L1247.0 141.3L1232.7 145.5L1218.5 142.2L1212.8 133.6L1195.8 134.5L1175.8 121.9L1161.6 120.0L1147.4 128.3L1129.8 118.1L1121.8 110.3L1110.4 115.2L1099.0 109.3L1086.2 110.3L1082.0 100.0L1076.3 74.8L1059.2 61.9L1042.2 83.2L1025.1 89.0L1010.9 105.2L996.6 120.0L992.4 110.3L979.6 121.9L976.7 158.1L971.0 169.1L969.6 117.2L958.2 120.0L953.1 138.0L958.2 156.5L945.4 147.9L934.1 151.9L917.0 156.5L905.6 164.0L888.6 154.2L888.6 171.2L877.2 170.5L881.4 165.5L864.4 148.7L857.3 147.1L843.0 133.6L831.7 133.6L811.8 146.3L801.8 159.6L797.5 179.5L787.6 190.6L777.6 198.6L779.0 216.0L783.3 221.4L793.3 214.9L797.5 224.1L799.8 234.4L804.6 231.9L810.3 224.1L816.0 213.2L813.2 201.6L824.6 182.8L835.9 176.1L834.5 186.1L824.6 201.6L828.8 210.4L838.8 208.1L848.7 210.4L843.0 213.2L830.2 214.3L831.7 225.7L823.4 227.8L823.1 236.9L817.4 239.8L803.8 241.8L794.7 241.8L791.8 239.4L793.3 223.0L786.4 234.4L788.1 242.3L783.3 244.2L776.2 248.9L773.4 254.0L768.0 256.3L759.7 261.6L750.0 267.3L757.1 272.3L759.7 281.4L758.3 287.7L740.6 286.5ZM1760.9 288.5L1760.4 305.4L1762.1 311.6L1771.5 315.1L1781.7 312.6L1788.0 305.1L1796.5 293.1L1800.2 287.7L1808.7 286.1L1813.0 283.8L1817.3 289.7L1823.0 295.0L1831.8 300.7L1832.1 308.0L1836.0 304.4L1840.0 299.9L1832.9 295.0L1827.2 290.4L1822.4 283.4L1823.0 279.3L1826.7 278.9L1830.6 284.2L1837.2 289.3L1842.9 294.3L1842.6 299.5L1847.1 308.0L1851.4 313.3L1853.4 307.3L1852.5 298.4L1862.8 297.7L1861.9 302.5L1865.1 311.6L1871.3 314.4L1878.4 314.4L1889.8 312.3L1889.5 318.6L1888.4 323.8L1886.7 327.8L1884.7 331.2L1886.7 337.1L1887.5 342.0L1894.1 353.1L1898.6 362.4L1904.0 372.9L1908.9 381.8L1911.1 388.6L1915.4 388.3L1925.4 384.8L1935.9 380.1L1943.8 375.3L1951.8 370.2L1957.5 359.6L1947.8 352.1L1947.5 347.1L1945.3 349.9L1941.0 354.0L1934.2 353.7L1933.9 348.4L1930.2 347.7L1925.4 340.4L1923.6 335.5L1930.5 335.5L1933.9 342.3L1943.3 346.8L1950.4 349.3L1962.6 350.9L1976.6 350.3L1981.4 355.6L1986.5 359.3L1993.9 362.7L1994.5 369.9L1996.5 378.9L2000.2 388.3L2004.4 397.9L2007.8 401.9L2009.8 399.3L2014.4 395.5L2015.8 387.4L2021.2 377.4L2026.9 372.0L2034.6 364.8L2038.3 361.4L2042.0 361.1L2048.5 359.9L2049.9 364.8L2055.3 370.5L2055.6 378.9L2060.5 376.8L2065.3 377.4L2067.6 387.7L2067.0 397.9L2072.7 409.3L2075.5 417.0L2081.8 421.3L2083.8 419.3L2081.5 411.3L2078.1 407.3L2073.3 400.7L2069.6 395.0L2072.1 386.5L2078.4 390.0L2081.8 394.7L2085.5 400.4L2090.9 395.3L2098.0 391.2L2097.4 381.0L2090.6 373.8L2088.1 370.5L2090.9 364.8L2094.6 362.4L2099.7 362.4L2101.7 366.0L2105.4 362.1L2110.2 360.2L2119.1 357.7L2127.3 349.6L2131.0 342.6L2134.4 335.5L2133.9 330.5L2130.7 325.5L2126.7 318.6L2130.2 314.1L2135.8 310.5L2127.6 310.9L2124.5 306.9L2122.2 304.4L2127.3 301.4L2132.1 297.3L2135.0 299.2L2132.1 305.1L2141.0 301.0L2143.8 309.1L2147.2 318.6L2150.1 320.0L2155.5 316.9L2155.8 311.6L2150.4 302.5L2156.3 297.7L2159.2 292.0L2165.7 290.0L2172.8 286.1L2181.4 274.0L2187.0 266.8L2189.6 250.3L2187.0 245.1L2179.4 241.8L2172.0 238.4L2178.5 230.3L2187.0 222.5L2191.9 216.0L2201.3 213.8L2211.2 214.3L2220.3 216.5L2228.3 214.9L2233.1 201.6L2243.1 200.4L2236.8 221.4L2233.1 226.7L2230.3 240.3L2232.8 255.8L2238.2 247.5L2242.5 241.8L2248.2 230.8L2251.9 221.4L2256.7 209.2L2271.0 210.4L2279.5 201.6L2290.9 195.6L2295.1 182.2L2305.1 179.5L2316.5 184.1L2319.3 176.8L2328.7 171.9L2323.6 165.5L2313.6 159.6L2299.4 151.1L2293.7 147.9L2276.6 143.0L2271.0 141.3L2256.7 145.5L2242.5 142.2L2236.8 133.6L2219.8 134.5L2199.8 121.9L2185.6 120.0L2171.4 128.3L2153.8 118.1L2145.8 110.3L2134.4 115.2L2123.0 109.3L2110.2 110.3L2106.0 100.0L2100.3 74.8L2083.2 61.9L2066.2 83.2L2049.1 89.0L2034.9 105.2L2020.6 120.0L2016.4 110.3L2003.6 121.9L2000.7 158.1L1995.0 169.1L1993.6 117.2L1982.2 120.0L1977.1 138.0L1982.2 156.5L1969.4 147.9L1958.1 151.9L1941.0 156.5L1929.6 164.0L1912.6 154.2L1912.6 171.2L1901.2 170.5L1905.4 165.5L1888.4 148.7L1881.3 147.1L1867.0 133.6L1855.7 133.6L1835.8 146.3L1825.8 159.6L1821.5 179.5L1811.6 190.6L1801.6 198.6L1803.0 216.0L1807.3 221.4L1817.3 214.9L1821.5 224.1L1823.8 234.4L1828.6 231.9L1834.3 224.1L1840.0 213.2L1837.2 201.6L1848.6 182.8L1859.9 176.1L1858.5 186.1L1848.6 201.6L1852.8 210.4L1862.8 208.1L1872.7 210.4L1867.0 213.2L1854.2 214.3L1855.7 225.7L1847.4 227.8L1847.1 236.9L1841.4 239.8L1827.8 241.8L1818.7 241.8L1815.8 239.4L1817.3 223.0L1810.4 234.4L1812.1 242.3L1807.3 244.2L1800.2 248.9L1797.4 254.0L1792.0 256.3L1783.7 261.6L1774.0 267.3L1781.1 272.3L1783.7 281.4L1782.3 287.7L1764.6 286.5ZM-276.8 259.8L-256.6 254.9L-255.8 248.0L-260.6 244.2L-265.2 233.9L-266.3 223.0L-272.0 218.2L-275.1 218.7L-278.2 227.8L-276.2 235.4L-269.1 237.4L-270.3 244.7L-274.8 251.2L-269.1 254.0ZM747.2 259.8L767.4 254.9L768.2 248.0L763.4 244.2L758.8 233.9L757.7 223.0L752.0 218.2L748.9 218.7L745.8 227.8L747.8 235.4L754.9 237.4L753.7 244.7L749.2 251.2L754.9 254.0ZM1771.2 259.8L1791.4 254.9L1792.2 248.0L1787.4 244.2L1782.8 233.9L1781.7 223.0L1776.0 218.2L1772.9 218.7L1769.8 227.8L1771.8 235.4L1778.9 237.4L1777.7 244.7L1773.2 251.2L1778.9 254.0ZM-277.7 250.3L-277.7 241.8L-281.4 235.4L-289.0 240.8L-289.9 252.2L-283.4 253.1ZM746.3 250.3L746.3 241.8L742.6 235.4L735.0 240.8L734.1 252.2L740.6 253.1ZM1770.3 250.3L1770.3 241.8L1766.6 235.4L1759.0 240.8L1758.1 252.2L1764.6 253.1ZM137.6 295.0L141.9 291.2L153.3 288.1L143.3 279.7L137.6 288.1ZM1161.6 295.0L1165.9 291.2L1177.3 288.1L1167.3 279.7L1161.6 288.1ZM2185.6 295.0L2189.9 291.2L2201.3 288.1L2191.3 279.7L2185.6 288.1ZM111.7 322.1L123.4 323.8L134.2 319.6L140.2 316.2L143.0 304.4L141.9 295.4L137.3 298.1L137.1 307.3L128.8 310.9L117.7 316.9L111.7 320.7ZM1135.7 322.1L1147.4 323.8L1158.2 319.6L1164.2 316.2L1167.0 304.4L1165.9 295.4L1161.3 298.1L1161.1 307.3L1152.8 310.9L1141.7 316.9L1135.7 320.7ZM2159.7 322.1L2171.4 323.8L2182.2 319.6L2188.2 316.2L2191.0 304.4L2189.9 295.4L2185.3 298.1L2185.1 307.3L2176.8 310.9L2165.7 316.9L2159.7 320.7ZM108.6 323.8L114.6 324.8L112.0 332.2L109.7 331.2ZM1132.6 323.8L1138.6 324.8L1136.0 332.2L1133.7 331.2ZM2156.6 323.8L2162.6 324.8L2160.0 332.2L2157.7 331.2ZM81.0 357.7L83.6 350.6L86.4 351.5L83.0 361.1ZM1105.0 357.7L1107.6 350.6L1110.4 351.5L1107.0 361.1ZM2129.0 357.7L2131.6 350.6L2134.4 351.5L2131.0 361.1ZM80.7 378.9L82.4 371.4L87.0 371.4L86.4 377.4L85.0 383.3L92.1 387.7L82.4 385.1ZM1104.7 378.9L1106.4 371.4L1111.0 371.4L1110.4 377.4L1109.0 383.3L1116.1 387.7L1106.4 385.1ZM2128.7 378.9L2130.4 371.4L2135.0 371.4L2134.4 377.4L2133.0 383.3L2140.1 387.7L2130.4 385.1ZM86.4 405.0L92.1 400.7L99.2 403.6L96.4 408.5L91.3 403.3ZM1110.4 405.0L1116.1 400.7L1123.2 403.6L1120.4 408.5L1115.3 403.3ZM2134.4 405.0L2140.1 400.7L2147.2 403.6L2144.4 408.5L2139.3 403.3ZM86.4 396.4L90.7 392.1L96.4 393.5L92.1 397.9ZM1110.4 396.4L1114.7 392.1L1120.4 393.5L1116.1 397.9ZM2134.4 396.4L2138.7 392.1L2144.4 393.5L2140.1 397.9ZM-33.6 397.0L-27.9 403.6L-31.3 408.2L-33.9 402.2ZM990.4 397.0L996.1 403.6L992.7 408.2L990.1 402.2ZM2014.4 397.0L2020.1 403.6L2016.7 408.2L2014.1 402.2ZM49.2 420.7L51.4 419.3L56.6 417.9L60.8 415.9L67.9 410.8L72.2 405.0L78.7 409.9L75.0 413.0L73.9 415.9L77.6 422.2L73.9 425.0L71.3 430.7L69.4 435.5L65.4 436.4L56.6 434.1L52.9 433.5L50.0 427.8ZM1073.2 420.7L1075.4 419.3L1080.6 417.9L1084.8 415.9L1091.9 410.8L1096.2 405.0L1102.7 409.9L1099.0 413.0L1097.9 415.9L1101.6 422.2L1097.9 425.0L1095.3 430.7L1093.4 435.5L1089.4 436.4L1080.6 434.1L1076.9 433.5L1074.0 427.8ZM2097.2 420.7L2099.4 419.3L2104.6 417.9L2108.8 415.9L2115.9 410.8L2120.2 405.0L2126.7 409.9L2123.0 413.0L2121.9 415.9L2125.6 422.2L2121.9 425.0L2119.3 430.7L2117.4 435.5L2113.4 436.4L2104.6 434.1L2100.9 433.5L2098.0 427.8ZM140.5 432.4L151.8 437.2L160.4 442.1L166.1 455.3L156.1 449.6L147.6 450.7L140.5 451.0ZM1164.5 432.4L1175.8 437.2L1184.4 442.1L1190.1 455.3L1180.1 449.6L1171.6 450.7L1164.5 451.0ZM2188.5 432.4L2199.8 437.2L2208.4 442.1L2214.1 455.3L2204.1 449.6L2195.6 450.7L2188.5 451.0ZM62.2 489.2L64.2 488.6L70.8 484.9L83.6 481.6L87.0 474.1L90.7 472.6L97.8 465.2L104.9 468.2L107.8 467.9L110.6 460.8L116.3 457.9L128.5 460.0L126.2 463.8L124.8 468.2L136.2 475.6L141.9 468.2L142.2 460.8L144.7 455.6L147.6 465.2L153.0 468.2L154.7 479.5L163.2 486.1L168.3 492.3L174.6 498.5L174.6 508.0L60.8 508.0ZM1086.2 489.2L1088.2 488.6L1094.8 484.9L1107.6 481.6L1111.0 474.1L1114.7 472.6L1121.8 465.2L1128.9 468.2L1131.8 467.9L1134.6 460.8L1140.3 457.9L1152.5 460.0L1150.2 463.8L1148.8 468.2L1160.2 475.6L1165.9 468.2L1166.2 460.8L1168.7 455.6L1171.6 465.2L1177.0 468.2L1178.7 479.5L1187.2 486.1L1192.3 492.3L1198.6 498.5L1198.6 508.0L1084.8 508.0ZM2110.2 489.2L2112.2 488.6L2118.8 484.9L2131.6 481.6L2135.0 474.1L2138.7 472.6L2145.8 465.2L2152.9 468.2L2155.8 467.9L2158.6 460.8L2164.3 457.9L2176.5 460.0L2174.2 463.8L2172.8 468.2L2184.2 475.6L2189.9 468.2L2190.2 460.8L2192.7 455.6L2195.6 465.2L2201.0 468.2L2202.7 479.5L2211.2 486.1L2216.3 492.3L2222.6 498.5L2222.6 508.0L2108.8 508.0ZM-729.9 240.8L-744.2 246.6L-761.2 252.2L-772.6 253.5L-766.9 254.9L-749.8 249.9L-732.8 244.2ZM294.1 240.8L279.8 246.6L262.8 252.2L251.4 253.5L257.1 254.9L274.2 249.9L291.2 244.2ZM1318.1 240.8L1303.8 246.6L1286.8 252.2L1275.4 253.5L1281.1 254.9L1298.2 249.9L1315.2 244.2Z" fill="#d2d9e2"/>
<path d="M-735.5 173.4L-726.9 180.8L-715.6 180.8L-715.0 187.3L-726.9 193.6L-729.8 199.6L-724.1 208.4L-718.4 208.9L-708.4 215.6L-704.2 214.5L-707.0 222.1L-715.6 229.9L-726.4 237.4L-709.9 230.9L-701.3 223.1L-695.6 216.7L-688.5 211.2L-684.3 201.4L-678.6 206.7L-672.9 204.3L-667.2 208.4L-655.8 210.1L-648.7 216.7L-644.4 222.1L-638.8 229.9L-630.2 236.4L-627.4 237.4L-621.7 246.9L-620.3 254.7L-610.3 260.5L-612.3 265.3L-610.3 274.5L-610.9 291.1L-609.7 299.4L-606.0 306.7L-604.6 309.9L-600.6 318.3L-594.7 320.1L-590.7 325.2L-587.6 331.8L-582.4 340.6L-576.2 350.1L-571.1 354.8L-569.1 355.1L-571.9 351.7L-576.2 340.0L-579.0 335.1L-584.1 327.5L-578.5 331.8L-573.3 337.7L-570.5 343.2L-566.2 348.9L-560.5 354.2L-557.1 360.4L-557.7 363.4L-552.0 370.0L-546.3 373.0L-537.8 376.0L-532.1 377.8L-525.0 376.9L-519.9 381.3L-516.4 383.1L-511.6 384.2L-506.5 385.7L-501.4 394.4L-495.1 398.7L-489.4 400.2L-485.2 401.6L-479.2 402.5L-477.5 398.2L-483.7 395.6L-492.3 395.9L-495.7 391.5L-494.5 379.8L-496.5 377.2L-508.8 376.9L-508.5 369.4L-506.2 365.8L-506.5 360.4L-514.7 361.9L-516.4 367.9L-520.7 369.1L-526.4 370.3L-530.4 368.5L-534.1 360.4L-535.5 352.6L-534.1 346.4L-534.1 341.3L-525.0 334.8L-517.9 335.1L-512.2 336.7L-510.8 332.5L-503.6 332.2L-498.0 333.5L-493.7 336.7L-492.6 340.6L-489.4 347.0L-486.6 348.9L-485.2 343.8L-488.9 333.5L-488.0 328.5L-482.3 322.8L-476.6 318.3L-472.4 315.6L-473.8 309.6L-472.4 304.2L-468.1 300.5L-468.1 296.4L-462.1 293.8L-456.7 291.9L-458.4 288.8L-456.7 284.5L-448.2 280.2L-445.9 281.0L-443.9 284.9L-438.2 281.4L-431.1 277.3L-441.9 270.3L-442.5 266.5L-441.1 262.7L-456.7 266.1L-446.8 257.4L-428.3 257.4L-421.2 252.0L-416.0 247.9L-421.2 237.4L-432.5 227.3L-441.1 206.7L-443.9 209.5L-455.3 212.9L-459.6 202.6L-466.7 195.4L-479.5 194.8L-476.1 207.2L-479.5 216.7L-476.1 227.3L-480.9 234.9L-482.3 246.9L-486.6 252.5L-491.4 246.9L-491.7 234.9L-499.4 233.9L-509.3 227.3L-520.7 224.7L-526.4 214.0L-523.6 196.6L-506.5 180.8L-502.2 170.6L-489.4 167.1L-490.8 152.2L-500.8 141.8L-507.9 152.2L-522.1 144.3L-526.4 124.5L-530.7 152.2L-536.4 157.6L-544.9 157.6L-559.1 151.4L-570.5 155.3L-584.7 156.1L-598.9 146.7L-610.3 145.1L-624.5 141.8L-637.3 144.3L-644.4 149.1L-658.7 143.5L-684.3 136.8L-702.8 129.0L-718.4 137.7L-729.8 149.9L-721.2 159.8L-725.5 167.1ZM288.5 173.4L297.1 180.8L308.4 180.8L309.0 187.3L297.1 193.6L294.2 199.6L299.9 208.4L305.6 208.9L315.6 215.6L319.8 214.5L317.0 222.1L308.4 229.9L297.6 237.4L314.1 230.9L322.7 223.1L328.4 216.7L335.5 211.2L339.7 201.4L345.4 206.7L351.1 204.3L356.8 208.4L368.2 210.1L375.3 216.7L379.6 222.1L385.2 229.9L393.8 236.4L396.6 237.4L402.3 246.9L403.7 254.7L413.7 260.5L411.7 265.3L413.7 274.5L413.1 291.1L414.3 299.4L418.0 306.7L419.4 309.9L423.4 318.3L429.3 320.1L433.3 325.2L436.4 331.8L441.6 340.6L447.8 350.1L452.9 354.8L454.9 355.1L452.1 351.7L447.8 340.0L445.0 335.1L439.9 327.5L445.5 331.8L450.7 337.7L453.5 343.2L457.8 348.9L463.5 354.2L466.9 360.4L466.3 363.4L472.0 370.0L477.7 373.0L486.2 376.0L491.9 377.8L499.0 376.9L504.1 381.3L507.6 383.1L512.4 384.2L517.5 385.7L522.6 394.4L528.9 398.7L534.6 400.2L538.8 401.6L544.8 402.5L546.5 398.2L540.3 395.6L531.7 395.9L528.3 391.5L529.5 379.8L527.5 377.2L515.2 376.9L515.5 369.4L517.8 365.8L517.5 360.4L509.3 361.9L507.6 367.9L503.3 369.1L497.6 370.3L493.6 368.5L489.9 360.4L488.5 352.6L489.9 346.4L489.9 341.3L499.0 334.8L506.1 335.1L511.8 336.7L513.2 332.5L520.4 332.2L526.0 333.5L530.3 336.7L531.4 340.6L534.6 347.0L537.4 348.9L538.8 343.8L535.1 333.5L536.0 328.5L541.7 322.8L547.4 318.3L551.6 315.6L550.2 309.6L551.6 304.2L555.9 300.5L555.9 296.4L561.9 293.8L567.3 291.9L565.6 288.8L567.3 284.5L575.8 280.2L578.1 281.0L580.1 284.9L585.8 281.4L592.9 277.3L582.1 270.3L581.5 266.5L582.9 262.7L567.3 266.1L577.2 257.4L595.7 257.4L602.8 252.0L608.0 247.9L602.8 237.4L591.5 227.3L582.9 206.7L580.1 209.5L568.7 212.9L564.4 202.6L557.3 195.4L544.5 194.8L547.9 207.2L544.5 216.7L547.9 227.3L543.1 234.9L541.7 246.9L537.4 252.5L532.6 246.9L532.3 234.9L524.6 233.9L514.7 227.3L503.3 224.7L497.6 214.0L500.4 196.6L517.5 180.8L521.8 170.6L534.6 167.1L533.2 152.2L523.2 141.8L516.1 152.2L501.9 144.3L497.6 124.5L493.3 152.2L487.6 157.6L479.1 157.6L464.9 151.4L453.5 155.3L439.3 156.1L425.1 146.7L413.7 145.1L399.5 141.8L386.7 144.3L379.6 149.1L365.3 143.5L339.7 136.8L321.2 129.0L305.6 137.7L294.2 149.9L302.8 159.8L298.5 167.1ZM1312.5 173.4L1321.1 180.8L1332.4 180.8L1333.0 187.3L1321.1 193.6L1318.2 199.6L1323.9 208.4L1329.6 208.9L1339.6 215.6L1343.8 214.5L1341.0 222.1L1332.4 229.9L1321.6 237.4L1338.1 230.9L1346.7 223.1L1352.4 216.7L1359.5 211.2L1363.7 201.4L1369.4 206.7L1375.1 204.3L1380.8 208.4L1392.2 210.1L1399.3 216.7L1403.6 222.1L1409.2 229.9L1417.8 236.4L1420.6 237.4L1426.3 246.9L1427.7 254.7L1437.7 260.5L1435.7 265.3L1437.7 274.5L1437.1 291.1L1438.3 299.4L1442.0 306.7L1443.4 309.9L1447.4 318.3L1453.3 320.1L1457.3 325.2L1460.4 331.8L1465.6 340.6L1471.8 350.1L1476.9 354.8L1478.9 355.1L1476.1 351.7L1471.8 340.0L1469.0 335.1L1463.9 327.5L1469.5 331.8L1474.7 337.7L1477.5 343.2L1481.8 348.9L1487.5 354.2L1490.9 360.4L1490.3 363.4L1496.0 370.0L1501.7 373.0L1510.2 376.0L1515.9 377.8L1523.0 376.9L1528.1 381.3L1531.6 383.1L1536.4 384.2L1541.5 385.7L1546.6 394.4L1552.9 398.7L1558.6 400.2L1562.8 401.6L1568.8 402.5L1570.5 398.2L1564.3 395.6L1555.7 395.9L1552.3 391.5L1553.5 379.8L1551.5 377.2L1539.2 376.9L1539.5 369.4L1541.8 365.8L1541.5 360.4L1533.3 361.9L1531.6 367.9L1527.3 369.1L1521.6 370.3L1517.6 368.5L1513.9 360.4L1512.5 352.6L1513.9 346.4L1513.9 341.3L1523.0 334.8L1530.1 335.1L1535.8 336.7L1537.2 332.5L1544.4 332.2L1550.0 333.5L1554.3 336.7L1555.4 340.6L1558.6 347.0L1561.4 348.9L1562.8 343.8L1559.1 333.5L1560.0 328.5L1565.7 322.8L1571.4 318.3L1575.6 315.6L1574.2 309.6L1575.6 304.2L1579.9 300.5L1579.9 296.4L1585.9 293.8L1591.3 291.9L1589.6 288.8L1591.3 284.5L1599.8 280.2L1602.1 281.0L1604.1 284.9L1609.8 281.4L1616.9 277.3L1606.1 270.3L1605.5 266.5L1606.9 262.7L1591.3 266.1L1601.2 257.4L1619.7 257.4L1626.8 252.0L1632.0 247.9L1626.8 237.4L1615.5 227.3L1606.9 206.7L1604.1 209.5L1592.7 212.9L1588.4 202.6L1581.3 195.4L1568.5 194.8L1571.9 207.2L1568.5 216.7L1571.9 227.3L1567.1 234.9L1565.7 246.9L1561.4 252.5L1556.6 246.9L1556.3 234.9L1548.6 233.9L1538.7 227.3L1527.3 224.7L1521.6 214.0L1524.4 196.6L1541.5 180.8L1545.8 170.6L1558.6 167.1L1557.2 152.2L1547.2 141.8L1540.1 152.2L1525.9 144.3L1521.6 124.5L1517.3 152.2L1511.6 157.6L1503.1 157.6L1488.9 151.4L1477.5 155.3L1463.3 156.1L1449.1 146.7L1437.7 145.1L1423.5 141.8L1410.7 144.3L1403.6 149.1L1389.3 143.5L1363.7 136.8L1345.2 129.0L1329.6 137.7L1318.2 149.9L1326.8 159.8L1322.5 167.1ZM-426.3 268.7L-416.9 251.1L-415.5 260.5L-408.4 269.1L-416.3 271.2ZM597.7 268.7L607.1 251.1L608.5 260.5L615.6 269.1L607.7 271.2ZM1621.7 268.7L1631.1 251.1L1632.5 260.5L1639.6 269.1L1631.7 271.2ZM-432.5 165.7L-442.5 152.2L-451.0 137.7L-461.0 127.2L-473.8 115.2L-486.6 105.3L-499.4 109.3L-510.8 113.2L-499.4 140.2L-485.2 144.3L-468.1 159.8L-465.2 180.8L-456.7 193.6L-442.5 196.6L-445.3 187.3L-436.8 177.5ZM591.5 165.7L581.5 152.2L573.0 137.7L563.0 127.2L550.2 115.2L537.4 105.3L524.6 109.3L513.2 113.2L524.6 140.2L538.8 144.3L555.9 159.8L558.8 180.8L567.3 193.6L581.5 196.6L578.7 187.3L587.2 177.5ZM1615.5 165.7L1605.5 152.2L1597.0 137.7L1587.0 127.2L1574.2 115.2L1561.4 105.3L1548.6 109.3L1537.2 113.2L1548.6 140.2L1562.8 144.3L1579.9 159.8L1582.8 180.8L1591.3 193.6L1605.5 196.6L1602.7 187.3L1611.2 177.5ZM-596.1 127.2L-590.4 108.3L-564.8 110.3L-554.8 113.2L-544.9 136.0L-553.4 152.2L-579.0 152.2L-593.2 144.3ZM427.9 127.2L433.6 108.3L459.2 110.3L469.2 113.2L479.1 136.0L470.6 152.2L445.0 152.2L430.8 144.3ZM1451.9 127.2L1457.6 108.3L1483.2 110.3L1493.2 113.2L1503.1 136.0L1494.6 152.2L1469.0 152.2L1454.8 144.3ZM-614.6 127.2L-608.9 100.1L-593.2 100.1L-586.1 110.3L-598.9 129.0ZM409.4 127.2L415.1 100.1L430.8 100.1L437.9 110.3L425.1 129.0ZM1433.4 127.2L1439.1 100.1L1454.8 100.1L1461.9 110.3L1449.1 129.0ZM-470.9 69.0L-482.3 78.8L-512.2 71.5L-510.8 26.0L-519.3 -0.6L-485.2 -44.5L-428.3 -21.1L-442.5 8.7L-456.7 17.6L-462.4 48.9ZM553.1 69.0L541.7 78.8L511.8 71.5L513.2 26.0L504.7 -0.6L538.8 -44.5L595.7 -21.1L581.5 8.7L567.3 17.6L561.6 48.9ZM1577.1 69.0L1565.7 78.8L1535.8 71.5L1537.2 26.0L1528.7 -0.6L1562.8 -44.5L1619.7 -21.1L1605.5 8.7L1591.3 17.6L1585.6 48.9ZM-527.8 58.6L-505.1 55.9L-507.9 17.6L-530.7 22.6ZM496.2 58.6L518.9 55.9L516.1 17.6L493.3 22.6ZM1520.2 58.6L1542.9 55.9L1540.1 17.6L1517.3 22.6ZM-485.2 98.0L-519.3 94.7L-532.1 77.6L-507.9 76.4L-485.2 78.8ZM538.8 98.0L504.7 94.7L491.9 77.6L516.1 76.4L538.8 78.8ZM1562.8 98.0L1528.7 94.7L1515.9 77.6L1540.1 76.4L1562.8 78.8ZM-515.0 127.2L-527.8 122.7L-527.8 103.2L-513.6 105.3ZM509.0 127.2L496.2 122.7L496.2 103.2L510.4 105.3ZM1533.0 127.2L1520.2 122.7L1520.2 103.2L1534.4 105.3ZM-532.1 127.2L-544.9 122.7L-549.2 108.3L-533.5 103.2ZM491.9 127.2L479.1 122.7L474.8 108.3L490.5 103.2ZM1515.9 127.2L1503.1 122.7L1498.8 108.3L1514.5 103.2ZM-556.3 92.6L-590.4 94.7L-593.2 77.6L-564.8 71.5ZM467.7 92.6L433.6 94.7L430.8 77.6L459.2 71.5ZM1491.7 92.6L1457.6 94.7L1454.8 77.6L1483.2 71.5ZM-536.4 92.6L-553.4 90.3L-553.4 69.0L-536.4 75.2ZM487.6 92.6L470.6 90.3L470.6 69.0L487.6 75.2ZM1511.6 92.6L1494.6 90.3L1494.6 69.0L1511.6 75.2ZM-502.2 184.1L-489.4 187.3L-498.0 174.1L-506.5 175.5ZM521.8 184.1L534.6 187.3L526.0 174.1L517.5 175.5ZM1545.8 184.1L1558.6 187.3L1550.0 174.1L1541.5 175.5ZM-465.2 48.9L-445.3 75.2L-422.6 85.8L-414.0 122.7L-411.2 144.3L-402.7 163.5L-401.2 184.1L-394.1 201.4L-381.3 209.5L-374.2 193.6L-371.4 177.5L-357.2 168.5L-334.4 152.2L-320.2 136.0L-320.2 113.2L-313.1 92.6L-311.6 62.6L-308.8 33.9L-291.7 -0.6L-342.9 -44.5L-399.8 -21.1L-434.0 -4.5L-451.0 17.6ZM558.8 48.9L578.7 75.2L601.4 85.8L610.0 122.7L612.8 144.3L621.3 163.5L622.8 184.1L629.9 201.4L642.7 209.5L649.8 193.6L652.6 177.5L666.8 168.5L689.6 152.2L703.8 136.0L703.8 113.2L710.9 92.6L712.4 62.6L715.2 33.9L732.3 -0.6L681.1 -44.5L624.2 -21.1L590.0 -4.5L573.0 17.6ZM1582.8 48.9L1602.7 75.2L1625.4 85.8L1634.0 122.7L1636.8 144.3L1645.3 163.5L1646.8 184.1L1653.9 201.4L1666.7 209.5L1673.8 193.6L1676.6 177.5L1690.8 168.5L1713.6 152.2L1727.8 136.0L1727.8 113.2L1734.9 92.6L1736.4 62.6L1739.2 33.9L1756.3 -0.6L1705.1 -44.5L1648.2 -21.1L1614.0 -4.5L1597.0 17.6ZM-325.9 174.1L-320.2 167.8L-300.3 167.1L-296.0 176.8L-308.8 187.9L-321.6 185.4ZM698.1 174.1L703.8 167.8L723.7 167.1L728.0 176.8L715.2 187.9L702.4 185.4ZM1722.1 174.1L1727.8 167.8L1747.7 167.1L1752.0 176.8L1739.2 187.9L1726.4 185.4ZM-499.4 359.1L-489.4 355.4L-476.6 358.5L-468.7 364.3L-478.6 365.2L-486.6 359.4L-498.0 360.1ZM524.6 359.1L534.6 355.4L547.4 358.5L555.3 364.3L545.4 365.2L537.4 359.4L526.0 360.1ZM1548.6 359.1L1558.6 355.4L1571.4 358.5L1579.3 364.3L1569.4 365.2L1561.4 359.4L1550.0 360.1ZM-469.2 369.7L-464.4 365.2L-452.4 369.1L-461.0 371.8L-468.9 370.3ZM554.8 369.7L559.6 365.2L571.6 369.1L563.0 371.8L555.1 370.3ZM1578.8 369.7L1583.6 365.2L1595.6 369.1L1587.0 371.8L1579.1 370.3ZM-479.2 402.5L-473.8 396.1L-472.4 392.7L-462.4 389.2L-461.0 392.1L-456.1 390.1L-451.0 392.7L-439.6 393.0L-433.4 393.0L-429.7 398.7L-419.7 405.9L-411.2 406.5L-404.1 411.0L-399.8 417.9L-401.2 423.0L-395.6 426.4L-384.2 430.1L-374.2 431.3L-364.3 436.7L-357.7 438.7L-356.6 444.4L-358.6 450.1L-363.4 454.5L-368.0 461.8L-368.5 474.5L-371.9 482.6L-374.2 487.2L-382.8 490.3L-395.6 501.2L-458.1 499.6L-457.3 476.3L-472.4 467.0L-478.9 455.9L-483.7 444.4L-488.6 438.7L-486.0 432.7L-487.7 427.3L-485.2 421.6L-481.7 418.7L-478.0 413.0L-477.8 404.5ZM544.8 402.5L550.2 396.1L551.6 392.7L561.6 389.2L563.0 392.1L567.9 390.1L573.0 392.7L584.4 393.0L590.6 393.0L594.3 398.7L604.3 405.9L612.8 406.5L619.9 411.0L624.2 417.9L622.8 423.0L628.4 426.4L639.8 430.1L649.8 431.3L659.7 436.7L666.3 438.7L667.4 444.4L665.4 450.1L660.6 454.5L656.0 461.8L655.5 474.5L652.1 482.6L649.8 487.2L641.2 490.3L628.4 501.2L565.9 499.6L566.7 476.3L551.6 467.0L545.1 455.9L540.3 444.4L535.4 438.7L538.0 432.7L536.3 427.3L538.8 421.6L542.3 418.7L546.0 413.0L546.2 404.5ZM1568.8 402.5L1574.2 396.1L1575.6 392.7L1585.6 389.2L1587.0 392.1L1591.9 390.1L1597.0 392.7L1608.4 393.0L1614.6 393.0L1618.3 398.7L1628.3 405.9L1636.8 406.5L1643.9 411.0L1648.2 417.9L1646.8 423.0L1652.4 426.4L1663.8 430.1L1673.8 431.3L1683.7 436.7L1690.3 438.7L1691.4 444.4L1689.4 450.1L1684.6 454.5L1680.0 461.8L1679.5 474.5L1676.1 482.6L1673.8 487.2L1665.2 490.3L1652.4 501.2L1589.9 499.6L1590.7 476.3L1575.6 467.0L1569.1 455.9L1564.3 444.4L1559.4 438.7L1562.0 432.7L1560.3 427.3L1562.8 421.6L1566.3 418.7L1570.0 413.0L1570.2 404.5ZM-274.4 313.8L-263.3 316.3L-249.1 310.3L-229.2 308.5L-226.3 315.9L-228.6 320.7L-214.4 325.8L-203.6 332.5L-199.3 325.2L-192.2 324.8L-186.5 328.2L-172.8 329.5L-165.7 329.2L-160.3 329.2L-158.3 335.1L-164.9 333.8L-162.3 340.6L-156.6 353.0L-151.8 361.9L-148.1 370.9L-145.2 378.4L-139.6 383.4L-134.4 387.5L-131.0 393.3L-112.0 389.2L-112.5 393.3L-116.8 404.5L-126.8 417.3L-138.1 425.8L-143.8 433.0L-145.8 440.1L-145.2 451.6L-142.4 464.7L-152.4 473.6L-158.0 482.6L-156.6 493.4L-163.7 499.6L-217.8 499.6L-224.0 473.6L-219.2 457.4L-222.9 440.1L-231.4 425.8L-229.7 415.9L-230.6 411.6L-233.4 410.2L-240.5 410.8L-244.8 405.0L-253.3 405.3L-263.3 409.3L-278.9 410.5L-290.3 403.3L-295.4 397.3L-300.3 391.5L-305.4 387.2L-306.8 380.7L-304.0 367.9L-306.0 361.9L-299.7 347.9L-295.1 341.6L-286.0 335.1L-284.9 326.8L-276.9 320.1ZM749.6 313.8L760.7 316.3L774.9 310.3L794.8 308.5L797.7 315.9L795.4 320.7L809.6 325.8L820.4 332.5L824.7 325.2L831.8 324.8L837.5 328.2L851.2 329.5L858.3 329.2L863.7 329.2L865.7 335.1L859.1 333.8L861.7 340.6L867.4 353.0L872.2 361.9L875.9 370.9L878.8 378.4L884.4 383.4L889.6 387.5L893.0 393.3L912.0 389.2L911.5 393.3L907.2 404.5L897.2 417.3L885.9 425.8L880.2 433.0L878.2 440.1L878.8 451.6L881.6 464.7L871.6 473.6L866.0 482.6L867.4 493.4L860.3 499.6L806.2 499.6L800.0 473.6L804.8 457.4L801.1 440.1L792.6 425.8L794.3 415.9L793.4 411.6L790.6 410.2L783.5 410.8L779.2 405.0L770.7 405.3L760.7 409.3L745.1 410.5L733.7 403.3L728.6 397.3L723.7 391.5L718.6 387.2L717.2 380.7L720.0 367.9L718.0 361.9L724.3 347.9L728.9 341.6L738.0 335.1L739.1 326.8L747.1 320.1ZM1773.6 313.8L1784.7 316.3L1798.9 310.3L1818.8 308.5L1821.7 315.9L1819.4 320.7L1833.6 325.8L1844.4 332.5L1848.7 325.2L1855.8 324.8L1861.5 328.2L1875.2 329.5L1882.3 329.2L1887.7 329.2L1889.7 335.1L1883.1 333.8L1885.7 340.6L1891.4 353.0L1896.2 361.9L1899.9 370.9L1902.8 378.4L1908.4 383.4L1913.6 387.5L1917.0 393.3L1936.0 389.2L1935.5 393.3L1931.2 404.5L1921.2 417.3L1909.9 425.8L1904.2 433.0L1902.2 440.1L1902.8 451.6L1905.6 464.7L1895.6 473.6L1890.0 482.6L1891.4 493.4L1884.3 499.6L1830.2 499.6L1824.0 473.6L1828.8 457.4L1825.1 440.1L1816.6 425.8L1818.3 415.9L1817.4 411.6L1814.6 410.2L1807.5 410.8L1803.2 405.0L1794.7 405.3L1784.7 409.3L1769.1 410.5L1757.7 403.3L1752.6 397.3L1747.7 391.5L1742.6 387.2L1741.2 380.7L1744.0 367.9L1742.0 361.9L1748.3 347.9L1752.9 341.6L1762.0 335.1L1763.1 326.8L1771.1 320.1ZM-117.4 457.4L-114.0 467.6L-122.5 496.5L-132.4 496.5L-134.4 487.2L-131.6 469.7L-123.9 464.7ZM906.6 457.4L910.0 467.6L901.5 496.5L891.6 496.5L889.6 487.2L892.4 469.7L900.1 464.7ZM1930.6 457.4L1934.0 467.6L1925.5 496.5L1915.6 496.5L1913.6 487.2L1916.4 469.7L1924.1 464.7ZM-284.1 286.5L-284.6 303.4L-282.9 309.6L-273.5 313.1L-263.3 310.6L-257.0 303.1L-248.5 291.1L-244.8 285.7L-236.3 284.1L-232.0 281.8L-227.7 287.7L-222.0 293.0L-213.2 298.7L-212.9 306.0L-209.0 302.4L-205.0 297.9L-212.1 293.0L-217.8 288.4L-222.6 281.4L-222.0 277.3L-218.3 276.9L-214.4 282.2L-207.8 287.3L-202.1 292.3L-202.4 297.5L-197.9 306.0L-193.6 311.3L-191.6 305.3L-192.5 296.4L-182.2 295.7L-183.1 300.5L-179.9 309.6L-173.7 312.4L-166.6 312.4L-155.2 310.3L-155.5 316.6L-156.6 321.8L-158.3 325.8L-160.3 329.2L-158.3 335.1L-157.5 340.0L-150.9 351.1L-146.4 360.4L-141.0 370.9L-136.1 379.8L-133.9 386.6L-129.6 386.3L-119.6 382.8L-109.1 378.1L-101.2 373.3L-93.2 368.2L-87.5 357.6L-97.2 350.1L-97.5 345.1L-99.7 347.9L-104.0 352.0L-110.8 351.7L-111.1 346.4L-114.8 345.7L-119.6 338.4L-121.4 333.5L-114.5 333.5L-111.1 340.3L-101.7 344.8L-94.6 347.3L-82.4 348.9L-68.4 348.3L-63.6 353.6L-58.5 357.3L-51.1 360.7L-50.5 367.9L-48.5 376.9L-44.8 386.3L-40.6 395.9L-37.2 399.9L-35.2 397.3L-30.6 393.5L-29.2 385.4L-23.8 375.4L-18.1 370.0L-10.4 362.8L-6.7 359.4L-3.0 359.1L3.5 357.9L4.9 362.8L10.3 368.5L10.6 376.9L15.5 374.8L20.3 375.4L22.6 385.7L22.0 395.9L27.7 407.3L30.5 415.0L36.8 419.3L38.8 417.3L36.5 409.3L33.1 405.3L28.3 398.7L24.6 393.0L27.1 384.5L33.4 388.0L36.8 392.7L40.5 398.4L45.9 393.3L53.0 389.2L52.4 379.0L45.6 371.8L43.1 368.5L45.9 362.8L49.6 360.4L54.7 360.4L56.7 364.0L60.4 360.1L65.2 358.2L74.1 355.7L82.3 347.6L86.0 340.6L89.4 333.5L88.9 328.5L85.7 323.5L81.7 316.6L85.2 312.1L90.8 308.5L82.6 308.9L79.5 304.9L77.2 302.4L82.3 299.4L87.1 295.3L90.0 297.2L87.1 303.1L96.0 299.0L98.8 307.1L102.2 316.6L105.1 318.0L110.5 314.9L110.8 309.6L105.4 300.5L111.3 295.7L114.2 290.0L120.7 288.0L127.8 284.1L136.4 272.0L142.0 264.8L144.6 248.3L142.0 243.1L134.4 239.8L127.0 236.4L133.5 228.3L142.0 220.5L146.9 214.0L156.3 211.8L166.2 212.3L175.3 214.5L183.3 212.9L188.1 199.6L198.1 198.4L191.8 219.4L188.1 224.7L185.3 238.3L187.8 253.8L193.2 245.5L197.5 239.8L203.2 228.8L206.9 219.4L211.7 207.2L226.0 208.4L234.5 199.6L245.9 193.6L250.1 180.2L260.1 177.5L271.5 182.1L274.3 174.8L283.7 169.9L278.6 163.5L268.6 157.6L254.4 149.1L248.7 145.9L231.6 141.0L226.0 139.3L211.7 143.5L197.5 140.2L191.8 131.6L174.8 132.5L154.8 119.9L140.6 118.0L126.4 126.3L108.8 116.1L100.8 108.3L89.4 113.2L78.0 107.3L65.2 108.3L61.0 98.0L55.3 72.8L38.2 59.9L21.2 81.2L4.1 87.0L-10.1 103.2L-24.4 118.0L-28.6 108.3L-41.4 119.9L-44.3 156.1L-50.0 167.1L-51.4 115.2L-62.8 118.0L-67.9 136.0L-62.8 154.5L-75.6 145.9L-86.9 149.9L-104.0 154.5L-115.4 162.0L-132.4 152.2L-132.4 169.2L-143.8 168.5L-139.6 163.5L-156.6 146.7L-163.7 145.1L-178.0 131.6L-189.3 131.6L-209.2 144.3L-219.2 157.6L-223.5 177.5L-233.4 188.6L-243.4 196.6L-242.0 214.0L-237.7 219.4L-227.7 212.9L-223.5 222.1L-221.2 232.4L-216.4 229.9L-210.7 222.1L-205.0 211.2L-207.8 199.6L-196.4 180.8L-185.1 174.1L-186.5 184.1L-196.4 199.6L-192.2 208.4L-182.2 206.1L-172.3 208.4L-178.0 211.2L-190.8 212.3L-189.3 223.7L-197.6 225.8L-197.9 234.9L-203.6 237.8L-217.2 239.8L-226.3 239.8L-229.2 237.4L-227.7 221.0L-234.6 232.4L-232.9 240.3L-237.7 242.2L-244.8 246.9L-247.6 252.0L-253.0 254.3L-261.3 259.6L-271.0 265.3L-263.9 270.3L-261.3 279.4L-262.7 285.7L-280.4 284.5ZM739.9 286.5L739.4 303.4L741.1 309.6L750.5 313.1L760.7 310.6L767.0 303.1L775.5 291.1L779.2 285.7L787.7 284.1L792.0 281.8L796.3 287.7L802.0 293.0L810.8 298.7L811.1 306.0L815.0 302.4L819.0 297.9L811.9 293.0L806.2 288.4L801.4 281.4L802.0 277.3L805.7 276.9L809.6 282.2L816.2 287.3L821.9 292.3L821.6 297.5L826.1 306.0L830.4 311.3L832.4 305.3L831.5 296.4L841.8 295.7L840.9 300.5L844.1 309.6L850.3 312.4L857.4 312.4L868.8 310.3L868.5 316.6L867.4 321.8L865.7 325.8L863.7 329.2L865.7 335.1L866.5 340.0L873.1 351.1L877.6 360.4L883.0 370.9L887.9 379.8L890.1 386.6L894.4 386.3L904.4 382.8L914.9 378.1L922.8 373.3L930.8 368.2L936.5 357.6L926.8 350.1L926.5 345.1L924.3 347.9L920.0 352.0L913.2 351.7L912.9 346.4L909.2 345.7L904.4 338.4L902.6 333.5L909.5 333.5L912.9 340.3L922.3 344.8L929.4 347.3L941.6 348.9L955.6 348.3L960.4 353.6L965.5 357.3L972.9 360.7L973.5 367.9L975.5 376.9L979.2 386.3L983.4 395.9L986.8 399.9L988.8 397.3L993.4 393.5L994.8 385.4L1000.2 375.4L1005.9 370.0L1013.6 362.8L1017.3 359.4L1021.0 359.1L1027.5 357.9L1028.9 362.8L1034.3 368.5L1034.6 376.9L1039.5 374.8L1044.3 375.4L1046.6 385.7L1046.0 395.9L1051.7 407.3L1054.5 415.0L1060.8 419.3L1062.8 417.3L1060.5 409.3L1057.1 405.3L1052.3 398.7L1048.6 393.0L1051.1 384.5L1057.4 388.0L1060.8 392.7L1064.5 398.4L1069.9 393.3L1077.0 389.2L1076.4 379.0L1069.6 371.8L1067.1 368.5L1069.9 362.8L1073.6 360.4L1078.7 360.4L1080.7 364.0L1084.4 360.1L1089.2 358.2L1098.1 355.7L1106.3 347.6L1110.0 340.6L1113.4 333.5L1112.9 328.5L1109.7 323.5L1105.7 316.6L1109.2 312.1L1114.8 308.5L1106.6 308.9L1103.5 304.9L1101.2 302.4L1106.3 299.4L1111.1 295.3L1114.0 297.2L1111.1 303.1L1120.0 299.0L1122.8 307.1L1126.2 316.6L1129.1 318.0L1134.5 314.9L1134.8 309.6L1129.4 300.5L1135.3 295.7L1138.2 290.0L1144.7 288.0L1151.8 284.1L1160.4 272.0L1166.0 264.8L1168.6 248.3L1166.0 243.1L1158.4 239.8L1151.0 236.4L1157.5 228.3L1166.0 220.5L1170.9 214.0L1180.3 211.8L1190.2 212.3L1199.3 214.5L1207.3 212.9L1212.1 199.6L1222.1 198.4L1215.8 219.4L1212.1 224.7L1209.3 238.3L1211.8 253.8L1217.2 245.5L1221.5 239.8L1227.2 228.8L1230.9 219.4L1235.7 207.2L1250.0 208.4L1258.5 199.6L1269.9 193.6L1274.1 180.2L1284.1 177.5L1295.5 182.1L1298.3 174.8L1307.7 169.9L1302.6 163.5L1292.6 157.6L1278.4 149.1L1272.7 145.9L1255.6 141.0L1250.0 139.3L1235.7 143.5L1221.5 140.2L1215.8 131.6L1198.8 132.5L1178.8 119.9L1164.6 118.0L1150.4 126.3L1132.8 116.1L1124.8 108.3L1113.4 113.2L1102.0 107.3L1089.2 108.3L1085.0 98.0L1079.3 72.8L1062.2 59.9L1045.2 81.2L1028.1 87.0L1013.9 103.2L999.6 118.0L995.4 108.3L982.6 119.9L979.7 156.1L974.0 167.1L972.6 115.2L961.2 118.0L956.1 136.0L961.2 154.5L948.4 145.9L937.1 149.9L920.0 154.5L908.6 162.0L891.6 152.2L891.6 169.2L880.2 168.5L884.4 163.5L867.4 146.7L860.3 145.1L846.0 131.6L834.7 131.6L814.8 144.3L804.8 157.6L800.5 177.5L790.6 188.6L780.6 196.6L782.0 214.0L786.3 219.4L796.3 212.9L800.5 222.1L802.8 232.4L807.6 229.9L813.3 222.1L819.0 211.2L816.2 199.6L827.6 180.8L838.9 174.1L837.5 184.1L827.6 199.6L831.8 208.4L841.8 206.1L851.7 208.4L846.0 211.2L833.2 212.3L834.7 223.7L826.4 225.8L826.1 234.9L820.4 237.8L806.8 239.8L797.7 239.8L794.8 237.4L796.3 221.0L789.4 232.4L791.1 240.3L786.3 242.2L779.2 246.9L776.4 252.0L771.0 254.3L762.7 259.6L753.0 265.3L760.1 270.3L762.7 279.4L761.3 285.7L743.6 284.5ZM1763.9 286.5L1763.4 303.4L1765.1 309.6L1774.5 313.1L1784.7 310.6L1791.0 303.1L1799.5 291.1L1803.2 285.7L1811.7 284.1L1816.0 281.8L1820.3 287.7L1826.0 293.0L1834.8 298.7L1835.1 306.0L1839.0 302.4L1843.0 297.9L1835.9 293.0L1830.2 288.4L1825.4 281.4L1826.0 277.3L1829.7 276.9L1833.6 282.2L1840.2 287.3L1845.9 292.3L1845.6 297.5L1850.1 306.0L1854.4 311.3L1856.4 305.3L1855.5 296.4L1865.8 295.7L1864.9 300.5L1868.1 309.6L1874.3 312.4L1881.4 312.4L1892.8 310.3L1892.5 316.6L1891.4 321.8L1889.7 325.8L1887.7 329.2L1889.7 335.1L1890.5 340.0L1897.1 351.1L1901.6 360.4L1907.0 370.9L1911.9 379.8L1914.1 386.6L1918.4 386.3L1928.4 382.8L1938.9 378.1L1946.8 373.3L1954.8 368.2L1960.5 357.6L1950.8 350.1L1950.5 345.1L1948.3 347.9L1944.0 352.0L1937.2 351.7L1936.9 346.4L1933.2 345.7L1928.4 338.4L1926.6 333.5L1933.5 333.5L1936.9 340.3L1946.3 344.8L1953.4 347.3L1965.6 348.9L1979.6 348.3L1984.4 353.6L1989.5 357.3L1996.9 360.7L1997.5 367.9L1999.5 376.9L2003.2 386.3L2007.4 395.9L2010.8 399.9L2012.8 397.3L2017.4 393.5L2018.8 385.4L2024.2 375.4L2029.9 370.0L2037.6 362.8L2041.3 359.4L2045.0 359.1L2051.5 357.9L2052.9 362.8L2058.3 368.5L2058.6 376.9L2063.5 374.8L2068.3 375.4L2070.6 385.7L2070.0 395.9L2075.7 407.3L2078.5 415.0L2084.8 419.3L2086.8 417.3L2084.5 409.3L2081.1 405.3L2076.3 398.7L2072.6 393.0L2075.1 384.5L2081.4 388.0L2084.8 392.7L2088.5 398.4L2093.9 393.3L2101.0 389.2L2100.4 379.0L2093.6 371.8L2091.1 368.5L2093.9 362.8L2097.6 360.4L2102.7 360.4L2104.7 364.0L2108.4 360.1L2113.2 358.2L2122.1 355.7L2130.3 347.6L2134.0 340.6L2137.4 333.5L2136.9 328.5L2133.7 323.5L2129.7 316.6L2133.2 312.1L2138.8 308.5L2130.6 308.9L2127.5 304.9L2125.2 302.4L2130.3 299.4L2135.1 295.3L2138.0 297.2L2135.1 303.1L2144.0 299.0L2146.8 307.1L2150.2 316.6L2153.1 318.0L2158.5 314.9L2158.8 309.6L2153.4 300.5L2159.3 295.7L2162.2 290.0L2168.7 288.0L2175.8 284.1L2184.4 272.0L2190.0 264.8L2192.6 248.3L2190.0 243.1L2182.4 239.8L2175.0 236.4L2181.5 228.3L2190.0 220.5L2194.9 214.0L2204.3 211.8L2214.2 212.3L2223.3 214.5L2231.3 212.9L2236.1 199.6L2246.1 198.4L2239.8 219.4L2236.1 224.7L2233.3 238.3L2235.8 253.8L2241.2 245.5L2245.5 239.8L2251.2 228.8L2254.9 219.4L2259.7 207.2L2274.0 208.4L2282.5 199.6L2293.9 193.6L2298.1 180.2L2308.1 177.5L2319.5 182.1L2322.3 174.8L2331.7 169.9L2326.6 163.5L2316.6 157.6L2302.4 149.1L2296.7 145.9L2279.6 141.0L2274.0 139.3L2259.7 143.5L2245.5 140.2L2239.8 131.6L2222.8 132.5L2202.8 119.9L2188.6 118.0L2174.4 126.3L2156.8 116.1L2148.8 108.3L2137.4 113.2L2126.0 107.3L2113.2 108.3L2109.0 98.0L2103.3 72.8L2086.2 59.9L2069.2 81.2L2052.1 87.0L2037.9 103.2L2023.6 118.0L2019.4 108.3L2006.6 119.9L2003.7 156.1L1998.0 167.1L1996.6 115.2L1985.2 118.0L1980.1 136.0L1985.2 154.5L1972.4 145.9L1961.1 149.9L1944.0 154.5L1932.6 162.0L1915.6 152.2L1915.6 169.2L1904.2 168.5L1908.4 163.5L1891.4 146.7L1884.3 145.1L1870.0 131.6L1858.7 131.6L1838.8 144.3L1828.8 157.6L1824.5 177.5L1814.6 188.6L1804.6 196.6L1806.0 214.0L1810.3 219.4L1820.3 212.9L1824.5 222.1L1826.8 232.4L1831.6 229.9L1837.3 222.1L1843.0 211.2L1840.2 199.6L1851.6 180.8L1862.9 174.1L1861.5 184.1L1851.6 199.6L1855.8 208.4L1865.8 206.1L1875.7 208.4L1870.0 211.2L1857.2 212.3L1858.7 223.7L1850.4 225.8L1850.1 234.9L1844.4 237.8L1830.8 239.8L1821.7 239.8L1818.8 237.4L1820.3 221.0L1813.4 232.4L1815.1 240.3L1810.3 242.2L1803.2 246.9L1800.4 252.0L1795.0 254.3L1786.7 259.6L1777.0 265.3L1784.1 270.3L1786.7 279.4L1785.3 285.7L1767.6 284.5ZM-273.8 257.8L-253.6 252.9L-252.8 246.0L-257.6 242.2L-262.2 231.9L-263.3 221.0L-269.0 216.2L-272.1 216.7L-275.2 225.8L-273.2 233.4L-266.1 235.4L-267.3 242.7L-271.8 249.2L-266.1 252.0ZM750.2 257.8L770.4 252.9L771.2 246.0L766.4 242.2L761.8 231.9L760.7 221.0L755.0 216.2L751.9 216.7L748.8 225.8L750.8 233.4L757.9 235.4L756.7 242.7L752.2 249.2L757.9 252.0ZM1774.2 257.8L1794.4 252.9L1795.2 246.0L1790.4 242.2L1785.8 231.9L1784.7 221.0L1779.0 216.2L1775.9 216.7L1772.8 225.8L1774.8 233.4L1781.9 235.4L1780.7 242.7L1776.2 249.2L1781.9 252.0ZM-274.7 248.3L-274.7 239.8L-278.4 233.4L-286.0 238.8L-286.9 250.2L-280.4 251.1ZM749.3 248.3L749.3 239.8L745.6 233.4L738.0 238.8L737.1 250.2L743.6 251.1ZM1773.3 248.3L1773.3 239.8L1769.6 233.4L1762.0 238.8L1761.1 250.2L1767.6 251.1ZM140.6 293.0L144.9 289.2L156.3 286.1L146.3 277.7L140.6 286.1ZM1164.6 293.0L1168.9 289.2L1180.3 286.1L1170.3 277.7L1164.6 286.1ZM2188.6 293.0L2192.9 289.2L2204.3 286.1L2194.3 277.7L2188.6 286.1ZM114.7 320.1L126.4 321.8L137.2 317.6L143.2 314.2L146.0 302.4L144.9 293.4L140.3 296.1L140.1 305.3L131.8 308.9L120.7 314.9L114.7 318.7ZM1138.7 320.1L1150.4 321.8L1161.2 317.6L1167.2 314.2L1170.0 302.4L1168.9 293.4L1164.3 296.1L1164.1 305.3L1155.8 308.9L1144.7 314.9L1138.7 318.7ZM2162.7 320.1L2174.4 321.8L2185.2 317.6L2191.2 314.2L2194.0 302.4L2192.9 293.4L2188.3 296.1L2188.1 305.3L2179.8 308.9L2168.7 314.9L2162.7 318.7ZM111.6 321.8L117.6 322.8L115.0 330.2L112.7 329.2ZM1135.6 321.8L1141.6 322.8L1139.0 330.2L1136.7 329.2ZM2159.6 321.8L2165.6 322.8L2163.0 330.2L2160.7 329.2ZM84.0 355.7L86.6 348.6L89.4 349.5L86.0 359.1ZM1108.0 355.7L1110.6 348.6L1113.4 349.5L1110.0 359.1ZM2132.0 355.7L2134.6 348.6L2137.4 349.5L2134.0 359.1ZM83.7 376.9L85.4 369.4L90.0 369.4L89.4 375.4L88.0 381.3L95.1 385.7L85.4 383.1ZM1107.7 376.9L1109.4 369.4L1114.0 369.4L1113.4 375.4L1112.0 381.3L1119.1 385.7L1109.4 383.1ZM2131.7 376.9L2133.4 369.4L2138.0 369.4L2137.4 375.4L2136.0 381.3L2143.1 385.7L2133.4 383.1ZM89.4 403.0L95.1 398.7L102.2 401.6L99.4 406.5L94.3 401.3ZM1113.4 403.0L1119.1 398.7L1126.2 401.6L1123.4 406.5L1118.3 401.3ZM2137.4 403.0L2143.1 398.7L2150.2 401.6L2147.4 406.5L2142.3 401.3ZM89.4 394.4L93.7 390.1L99.4 391.5L95.1 395.9ZM1113.4 394.4L1117.7 390.1L1123.4 391.5L1119.1 395.9ZM2137.4 394.4L2141.7 390.1L2147.4 391.5L2143.1 395.9ZM-30.6 395.0L-24.9 401.6L-28.3 406.2L-30.9 400.2ZM993.4 395.0L999.1 401.6L995.7 406.2L993.1 400.2ZM2017.4 395.0L2023.1 401.6L2019.7 406.2L2017.1 400.2ZM52.2 418.7L54.4 417.3L59.6 415.9L63.8 413.9L70.9 408.8L75.2 403.0L81.7 407.9L78.0 411.0L76.9 413.9L80.6 420.2L76.9 423.0L74.3 428.7L72.4 433.5L68.4 434.4L59.6 432.1L55.9 431.5L53.0 425.8ZM1076.2 418.7L1078.4 417.3L1083.6 415.9L1087.8 413.9L1094.9 408.8L1099.2 403.0L1105.7 407.9L1102.0 411.0L1100.9 413.9L1104.6 420.2L1100.9 423.0L1098.3 428.7L1096.4 433.5L1092.4 434.4L1083.6 432.1L1079.9 431.5L1077.0 425.8ZM2100.2 418.7L2102.4 417.3L2107.6 415.9L2111.8 413.9L2118.9 408.8L2123.2 403.0L2129.7 407.9L2126.0 411.0L2124.9 413.9L2128.6 420.2L2124.9 423.0L2122.3 428.7L2120.4 433.5L2116.4 434.4L2107.6 432.1L2103.9 431.5L2101.0 425.8ZM143.5 430.4L154.8 435.2L163.4 440.1L169.1 453.3L159.1 447.6L150.6 448.7L143.5 449.0ZM1167.5 430.4L1178.8 435.2L1187.4 440.1L1193.1 453.3L1183.1 447.6L1174.6 448.7L1167.5 449.0ZM2191.5 430.4L2202.8 435.2L2211.4 440.1L2217.1 453.3L2207.1 447.6L2198.6 448.7L2191.5 449.0ZM65.2 487.2L67.2 486.6L73.8 482.9L86.6 479.6L90.0 472.1L93.7 470.6L100.8 463.2L107.9 466.2L110.8 465.9L113.6 458.8L119.3 455.9L131.5 458.0L129.2 461.8L127.8 466.2L139.2 473.6L144.9 466.2L145.2 458.8L147.7 453.6L150.6 463.2L156.0 466.2L157.7 477.5L166.2 484.1L171.3 490.3L177.6 496.5L177.6 506.0L63.8 506.0ZM1089.2 487.2L1091.2 486.6L1097.8 482.9L1110.6 479.6L1114.0 472.1L1117.7 470.6L1124.8 463.2L1131.9 466.2L1134.8 465.9L1137.6 458.8L1143.3 455.9L1155.5 458.0L1153.2 461.8L1151.8 466.2L1163.2 473.6L1168.9 466.2L1169.2 458.8L1171.7 453.6L1174.6 463.2L1180.0 466.2L1181.7 477.5L1190.2 484.1L1195.3 490.3L1201.6 496.5L1201.6 506.0L1087.8 506.0ZM2113.2 487.2L2115.2 486.6L2121.8 482.9L2134.6 479.6L2138.0 472.1L2141.7 470.6L2148.8 463.2L2155.9 466.2L2158.8 465.9L2161.6 458.8L2167.3 455.9L2179.5 458.0L2177.2 461.8L2175.8 466.2L2187.2 473.6L2192.9 466.2L2193.2 458.8L2195.7 453.6L2198.6 463.2L2204.0 466.2L2205.7 477.5L2214.2 484.1L2219.3 490.3L2225.6 496.5L2225.6 506.0L2111.8 506.0ZM-726.9 238.8L-741.2 244.6L-758.2 250.2L-769.6 251.5L-763.9 252.9L-746.8 247.9L-729.8 242.2ZM297.1 238.8L282.8 244.6L265.8 250.2L254.4 251.5L260.1 252.9L277.2 247.9L294.2 242.2ZM1321.1 238.8L1306.8 244.6L1289.8 250.2L1278.4 251.5L1284.1 252.9L1301.2 247.9L1318.2 242.2Z" fill="#ffffff"/>
<path d="M-179.4 290.0L-178.0 285.3L-173.1 278.1L-168.0 272.8L-162.3 275.3L-165.2 277.7L-162.3 281.8L-156.6 279.0L-150.9 271.2L-146.7 270.3L-148.9 275.3L-150.9 281.4L-143.8 286.1L-139.3 293.0L-148.1 295.3L-158.0 291.1L-169.4 294.5L-175.1 294.2ZM844.6 290.0L846.0 285.3L850.9 278.1L856.0 272.8L861.7 275.3L858.8 277.7L861.7 281.8L867.4 279.0L873.1 271.2L877.3 270.3L875.1 275.3L873.1 281.4L880.2 286.1L884.7 293.0L875.9 295.3L866.0 291.1L854.6 294.5L848.9 294.2ZM1868.6 290.0L1870.0 285.3L1874.9 278.1L1880.0 272.8L1885.7 275.3L1882.8 277.7L1885.7 281.8L1891.4 279.0L1897.1 271.2L1901.3 270.3L1899.1 275.3L1897.1 281.4L1904.2 286.1L1908.7 293.0L1899.9 295.3L1890.0 291.1L1878.6 294.5L1872.9 294.2ZM-123.9 281.0L-122.5 277.3L-116.8 273.2L-109.7 272.0L-106.8 278.1L-112.5 281.4L-108.3 291.1L-104.0 294.9L-106.8 302.4L-104.3 308.5L-112.5 310.6L-117.9 307.4L-116.8 297.5L-121.1 291.1L-123.1 285.3ZM900.1 281.0L901.5 277.3L907.2 273.2L914.3 272.0L917.2 278.1L911.5 281.4L915.7 291.1L920.0 294.9L917.2 302.4L919.7 308.5L911.5 310.6L906.1 307.4L907.2 297.5L902.9 291.1L900.9 285.3ZM1924.1 281.0L1925.5 277.3L1931.2 273.2L1938.3 272.0L1941.2 278.1L1935.5 281.4L1939.7 291.1L1944.0 294.9L1941.2 302.4L1943.7 308.5L1935.5 310.6L1930.1 307.4L1931.2 297.5L1926.9 291.1L1924.9 285.3Z" fill="#e8e8e8"/>
<path d="M-186.5 328.2L-186.5 358.8L-152.4 358.8M837.5 328.2L837.5 358.8L871.6 358.8M1861.5 328.2L1861.5 358.8L1895.6 358.8M-186.5 358.8L-189.3 366.4L-213.5 354.2L-223.5 354.2L-229.2 351.1L-230.6 332.8L-224.9 323.5M837.5 358.8L834.7 366.4L810.5 354.2L800.5 354.2L794.8 351.1L793.4 332.8L799.1 323.5M1861.5 358.8L1858.7 366.4L1834.5 354.2L1824.5 354.2L1818.8 351.1L1817.4 332.8L1823.1 323.5M-262.4 316.6L-262.4 326.8L-282.3 337.7L-282.3 342.5M761.6 316.6L761.6 326.8L741.7 337.7L741.7 342.5M1785.6 316.6L1785.6 326.8L1765.7 337.7L1765.7 342.5M-282.3 342.5L-271.3 349.5L-254.8 361.9L-246.2 367.9L-223.5 354.2M741.7 342.5L752.7 349.5L769.2 361.9L777.8 367.9L800.5 354.2M1765.7 342.5L1776.7 349.5L1793.2 361.9L1801.8 367.9L1824.5 354.2M-294.6 341.3L-282.3 340.9M729.4 341.3L741.7 340.9M1753.4 341.3L1765.7 340.9M-306.0 361.0L-294.6 361.0L-294.6 355.7L-282.3 342.5M718.0 361.0L729.4 361.0L729.4 355.7L741.7 342.5M1742.0 361.0L1753.4 361.0L1753.4 355.7L1765.7 342.5M-291.7 380.4L-273.2 378.4L-273.2 375.4L-274.7 351.1M732.3 380.4L750.8 378.4L750.8 375.4L749.3 351.1M1756.3 380.4L1774.8 378.4L1774.8 375.4L1773.3 351.1M-246.2 376.9L-246.2 367.9M777.8 376.9L777.8 367.9M1801.8 376.9L1801.8 367.9M-189.3 366.4L-195.0 385.7L-193.6 391.5L-190.8 397.3M834.7 366.4L829.0 385.7L830.4 391.5L833.2 397.3M1858.7 366.4L1853.0 385.7L1854.4 391.5L1857.2 397.3M-190.8 397.3L-160.9 395.9M833.2 397.3L863.1 395.9M1857.2 397.3L1887.1 395.9M-160.9 395.9L-155.2 381.3L-148.1 370.9M863.1 395.9L868.8 381.3L875.9 370.9M1887.1 395.9L1892.8 381.3L1899.9 370.9M-155.2 410.2L-139.6 411.9L-121.6 400.2L-132.4 397.3L-134.4 387.5M868.8 410.2L884.4 411.9L902.4 400.2L891.6 397.3L889.6 387.5M1892.8 410.2L1908.4 411.9L1926.4 400.2L1915.6 397.3L1913.6 387.5M-141.0 427.8L-141.0 411.9M883.0 427.8L883.0 411.9M1907.0 427.8L1907.0 411.9M-216.4 408.8L-212.1 416.7L-179.4 408.8L-180.8 400.2L-190.8 397.3M807.6 408.8L811.9 416.7L844.6 408.8L843.2 400.2L833.2 397.3M1831.6 408.8L1835.9 416.7L1868.6 408.8L1867.2 400.2L1857.2 397.3M-216.1 388.6L-216.4 408.8L-212.1 416.7L-229.7 416.5M807.9 388.6L807.6 408.8L811.9 416.7L794.3 416.5M1831.9 388.6L1831.6 408.8L1835.9 416.7L1818.3 416.5M-222.9 440.1L-212.1 434.4L-207.8 413.0L-204.7 411.6L-179.4 408.8M801.1 440.1L811.9 434.4L816.2 413.0L819.3 411.6L844.6 408.8M1825.1 440.1L1835.9 434.4L1840.2 413.0L1843.3 411.6L1868.6 408.8M-160.9 425.8L-146.1 436.4M863.1 425.8L877.9 436.4M1887.1 425.8L1901.9 436.4M-172.3 425.8L-169.4 412.5M851.7 425.8L854.6 412.5M1875.7 425.8L1878.6 412.5M-173.7 427.3L-160.9 425.8L-162.3 411.6L-155.2 410.2M850.3 427.3L863.1 425.8L861.7 411.6L868.8 410.2M1874.3 427.3L1887.1 425.8L1885.7 411.6L1892.8 410.2M-223.5 437.2L-210.7 445.8L-195.6 443.0L-195.0 454.5L-189.3 454.5L-175.1 447.3L-170.8 446.7L-158.0 455.9M800.5 437.2L813.3 445.8L828.4 443.0L829.0 454.5L834.7 454.5L848.9 447.3L853.2 446.7L866.0 455.9M1824.5 437.2L1837.3 445.8L1852.4 443.0L1853.0 454.5L1858.7 454.5L1872.9 447.3L1877.2 446.7L1890.0 455.9M-158.0 455.9L-158.0 469.1L-165.2 472.1L-169.4 487.2M866.0 455.9L866.0 469.1L858.8 472.1L854.6 487.2M1890.0 455.9L1890.0 469.1L1882.8 472.1L1878.6 487.2M-224.0 473.0L-189.3 473.6L-172.3 467.6M800.0 473.0L834.7 473.6L851.7 467.6M1824.0 473.0L1858.7 473.6L1875.7 467.6M-291.7 380.4L-290.3 387.5M732.3 380.4L733.7 387.5M1756.3 380.4L1757.7 387.5M-295.4 387.2L-280.4 393.8L-278.9 400.2M728.6 387.2L743.6 393.8L745.1 400.2M1752.6 387.2L1767.6 393.8L1769.1 400.2M-266.1 408.8L-264.7 391.5M757.9 408.8L759.3 391.5M1781.9 408.8L1783.3 391.5M-257.6 405.9L-257.6 391.5M766.4 405.9L766.4 391.5M1790.4 405.9L1790.4 391.5M-273.2 393.8L-251.9 388.6L-256.2 379.8L-273.2 378.4M750.8 393.8L772.1 388.6L767.8 379.8L750.8 378.4M1774.8 393.8L1796.1 388.6L1791.8 379.8L1774.8 378.4M-251.9 388.6L-246.2 376.9M772.1 388.6L777.8 376.9M1796.1 388.6L1801.8 376.9M-230.6 386.0L-223.5 354.2M793.4 386.0L800.5 354.2M1817.4 386.0L1824.5 354.2M-217.2 384.2L-212.1 361.9L-189.3 366.4M806.8 384.2L811.9 361.9L834.7 366.4M1830.8 384.2L1835.9 361.9L1858.7 366.4M-262.7 285.7L-248.5 289.6M761.3 285.7L775.5 289.6M1785.3 285.7L1799.5 289.6M-250.5 253.8L-240.5 260.5L-234.3 262.7L-236.3 268.7L-240.5 274.5L-237.7 283.3M773.5 253.8L783.5 260.5L789.7 262.7L787.7 268.7L783.5 274.5L786.3 283.3M1797.5 253.8L1807.5 260.5L1813.7 262.7L1811.7 268.7L1807.5 274.5L1810.3 283.3M-240.5 242.2L-237.7 249.2L-240.5 254.7L-239.7 260.5M783.5 242.2L786.3 249.2L783.5 254.7L784.3 260.5M1807.5 242.2L1810.3 249.2L1807.5 254.7L1808.3 260.5M-217.2 239.8L-216.1 253.8L-223.5 257.0L-218.3 263.5L-220.6 269.1L-229.2 269.1L-236.3 268.7M806.8 239.8L807.9 253.8L800.5 257.0L805.7 263.5L803.4 269.1L794.8 269.1L787.7 268.7M1830.8 239.8L1831.9 253.8L1824.5 257.0L1829.7 263.5L1827.4 269.1L1818.8 269.1L1811.7 268.7M-216.1 253.8L-206.4 258.3L-192.2 262.7L-189.3 254.7L-190.8 240.3L-192.7 238.3M807.9 253.8L817.6 258.3L831.8 262.7L834.7 254.7L833.2 240.3L831.3 238.3M1831.9 253.8L1841.6 258.3L1855.8 262.7L1858.7 254.7L1857.2 240.3L1855.3 238.3M-223.5 257.0L-204.1 260.5L-193.6 265.3L-192.5 267.8L-199.9 274.5L-205.0 276.1L-212.1 272.8L-220.6 269.1M800.5 257.0L819.9 260.5L830.4 265.3L831.5 267.8L824.1 274.5L819.0 276.1L811.9 272.8L803.4 269.1M1824.5 257.0L1843.9 260.5L1854.4 265.3L1855.5 267.8L1848.1 274.5L1843.0 276.1L1835.9 272.8L1827.4 269.1M-209.5 264.4L-208.7 267.0L-212.1 272.8M814.5 264.4L815.3 267.0L811.9 272.8M1838.5 264.4L1839.3 267.0L1835.9 272.8M-237.7 283.3L-237.7 275.7L-227.7 272.0L-218.6 273.2L-218.3 276.9M786.3 283.3L786.3 275.7L796.3 272.0L805.4 273.2L805.7 276.9M1810.3 283.3L1810.3 275.7L1820.3 272.0L1829.4 273.2L1829.7 276.9M-218.3 276.9L-212.1 272.8M805.7 276.9L811.9 272.8M1829.7 276.9L1835.9 272.8M-212.9 279.4L-203.6 279.8L-193.0 282.6L-193.6 290.0L-200.7 289.2L-202.1 292.3M811.1 279.4L820.4 279.8L831.0 282.6L830.4 290.0L823.3 289.2L821.9 292.3M1835.1 279.4L1844.4 279.8L1855.0 282.6L1854.4 290.0L1847.3 289.2L1845.9 292.3M-193.6 290.0L-178.0 284.1M830.4 290.0L846.0 284.1M1854.4 290.0L1870.0 284.1M-199.3 294.9L-193.6 294.5L-182.2 293.8L-178.0 291.1M824.7 294.9L830.4 294.5L841.8 293.8L846.0 291.1M1848.7 294.9L1854.4 294.5L1865.8 293.8L1870.0 291.1M-203.6 279.8L-202.1 289.2M820.4 279.8L821.9 289.2M1844.4 279.8L1845.9 289.2M-192.5 267.8L-181.9 266.1L-177.4 277.3L-173.1 278.1M831.5 267.8L842.1 266.1L846.6 277.3L850.9 278.1M1855.5 267.8L1866.1 266.1L1870.6 277.3L1874.9 278.1M-189.3 254.7L-183.6 250.2L-168.0 248.8L-160.3 251.1M834.7 254.7L840.4 250.2L856.0 248.8L863.7 251.1M1858.7 254.7L1864.4 250.2L1880.0 248.8L1887.7 251.1M-190.8 240.3L-181.9 231.4L-177.4 229.4M833.2 240.3L842.1 231.4L846.6 229.4M1857.2 240.3L1866.1 231.4L1870.6 229.4M-197.9 229.4L-181.9 231.4M826.1 229.4L842.1 231.4M1850.1 229.4L1866.1 231.4M-190.8 219.4L-179.4 221.6M833.2 219.4L844.6 221.6M1857.2 219.4L1868.6 221.6M-223.5 214.0L-222.0 202.6L-223.5 187.3L-216.4 172.0L-205.0 152.2L-199.3 148.3L-186.5 151.4L-176.0 148.3M800.5 214.0L802.0 202.6L800.5 187.3L807.6 172.0L819.0 152.2L824.7 148.3L837.5 151.4L848.0 148.3M1824.5 214.0L1826.0 202.6L1824.5 187.3L1831.6 172.0L1843.0 152.2L1848.7 148.3L1861.5 151.4L1872.0 148.3M-199.3 148.3L-190.8 170.6L-188.8 172.0M824.7 148.3L833.2 170.6L835.2 172.0M1848.7 148.3L1857.2 170.6L1859.2 172.0M-277.5 291.1L-278.9 307.8M746.5 291.1L745.1 307.8M1770.5 291.1L1769.1 307.8M-253.3 253.8L-250.5 253.8L-246.2 252.5L-240.8 250.2L-237.7 242.2M770.7 253.8L773.5 253.8L777.8 252.5L783.2 250.2L786.3 242.2M1794.7 253.8L1797.5 253.8L1801.8 252.5L1807.2 250.2L1810.3 242.2M-233.1 235.4L-230.6 235.9M790.9 235.4L793.4 235.9M1814.9 235.4L1817.4 235.9M-155.2 310.3L-137.0 309.2M868.8 310.3L887.0 309.2M1892.8 310.3L1911.0 309.2M-139.6 293.0L-133.9 294.9L-130.2 299.8L-131.6 308.9L-137.0 309.2M884.4 293.0L890.1 294.9L893.8 299.8L892.4 308.9L887.0 309.2M1908.4 293.0L1914.1 294.9L1917.8 299.8L1916.4 308.9L1911.0 309.2M-139.6 293.0L-125.3 291.9M884.4 293.0L898.7 291.9M1908.4 293.0L1922.7 291.9M-137.0 309.2L-140.4 318.7L-146.7 325.8L-155.2 323.5L-155.5 316.6M887.0 309.2L883.6 318.7L877.3 325.8L868.8 323.5L868.5 316.6M1911.0 309.2L1907.6 318.7L1901.3 325.8L1892.8 323.5L1892.5 316.6M-130.2 308.9L-128.2 316.6L-126.8 323.5L-121.1 333.5M893.8 308.9L895.8 316.6L897.2 323.5L902.9 333.5M1917.8 308.9L1919.8 316.6L1921.2 323.5L1926.9 333.5M-146.7 325.8L-130.5 336.1L-122.5 336.7L-119.6 338.4M877.3 325.8L893.5 336.1L901.5 336.7L904.4 338.4M1901.3 325.8L1917.5 336.1L1925.5 336.7L1928.4 338.4M-158.0 335.1L-146.7 325.8M866.0 335.1L877.3 325.8M1890.0 335.1L1901.3 325.8M-136.1 375.4L-123.9 373.9L-109.7 367.9L-99.2 358.8L-100.6 356.7L-110.8 351.7M887.9 375.4L900.1 373.9L914.3 367.9L924.8 358.8L923.4 356.7L913.2 351.7M1911.9 375.4L1924.1 373.9L1938.3 367.9L1948.8 358.8L1947.4 356.7L1937.2 351.7M-109.1 378.1L-106.8 373.9L-99.2 358.8M914.9 378.1L917.2 373.9L924.8 358.8M1938.9 378.1L1941.2 373.9L1948.8 358.8M-79.8 335.4L-84.7 334.1L-84.1 328.5L-85.5 320.1L-83.5 314.5L-84.1 311.0M944.2 335.4L939.3 334.1L939.9 328.5L938.5 320.1L940.5 314.5L939.9 311.0M1968.2 335.4L1963.3 334.1L1963.9 328.5L1962.5 320.1L1964.5 314.5L1963.9 311.0M-104.3 308.5L-95.5 306.0L-84.1 311.0M919.7 308.5L928.5 306.0L939.9 311.0M1943.7 308.5L1952.5 306.0L1963.9 311.0M-83.5 314.5L-72.7 308.5L-64.7 308.9L-54.2 306.3L-44.6 308.9M940.5 314.5L951.3 308.5L959.3 308.9L969.8 306.3L979.4 308.9M1964.5 314.5L1975.3 308.5L1983.3 308.9L1993.8 306.3L2003.4 308.9M-104.0 293.0L-98.3 293.8L-90.9 288.0L-81.2 285.3L-69.9 287.7L-61.3 293.4L-55.6 290.0L-45.7 287.3L-29.5 290.4M920.0 293.0L925.7 293.8L933.1 288.0L942.8 285.3L954.1 287.7L962.7 293.4L968.4 290.0L978.3 287.3L994.5 290.4M1944.0 293.0L1949.7 293.8L1957.1 288.0L1966.8 285.3L1978.1 287.7L1986.7 293.4L1992.4 290.0L2002.3 287.3L2018.5 290.4M-98.3 293.8L-91.2 296.4L-84.1 294.9L-74.1 300.5L-68.4 308.1M925.7 293.8L932.8 296.4L939.9 294.9L949.9 300.5L955.6 308.1M1949.7 293.8L1956.8 296.4L1963.9 294.9L1973.9 300.5L1979.6 308.1M-61.3 293.4L-58.5 296.8L-48.0 300.5M962.7 293.4L965.5 296.8L976.0 300.5M1986.7 293.4L1989.5 296.8L2000.0 300.5M-55.6 290.0L-57.1 293.8L-50.0 296.8M968.4 290.0L966.9 293.8L974.0 296.8M1992.4 290.0L1990.9 293.8L1998.0 296.8M-64.2 304.2L-57.1 300.5M959.8 304.2L966.9 300.5M1983.8 304.2L1990.9 300.5M22.6 394.4L24.0 385.7L21.7 379.2L19.7 373.9L21.2 365.5L27.1 364.0M1046.6 394.4L1048.0 385.7L1045.7 379.2L1043.7 373.9L1045.2 365.5L1051.1 364.0M2070.6 394.4L2072.0 385.7L2069.7 379.2L2067.7 373.9L2069.2 365.5L2075.1 364.0M33.1 357.6L38.2 363.4L42.8 370.0L48.2 378.4L48.2 382.8M1057.1 357.6L1062.2 363.4L1066.8 370.0L1072.2 378.4L1072.2 382.8M2081.1 357.6L2086.2 363.4L2090.8 370.0L2096.2 378.4L2096.2 382.8M27.1 364.0L30.3 366.4L29.7 372.4L39.6 372.4L42.5 379.8M1051.1 364.0L1054.3 366.4L1053.7 372.4L1063.6 372.4L1066.5 379.8M2075.1 364.0L2078.3 366.4L2077.7 372.4L2087.6 372.4L2090.5 379.8M34.0 388.6L42.5 381.3L48.2 382.8L45.3 391.5L40.5 393.3M1058.0 388.6L1066.5 381.3L1072.2 382.8L1069.3 391.5L1064.5 393.3M2082.0 388.6L2090.5 381.3L2096.2 382.8L2093.3 391.5L2088.5 393.3M27.7 404.5L32.5 405.9M1051.7 404.5L1056.5 405.9M2075.7 404.5L2080.5 405.9M29.7 359.7L27.1 364.0M1053.7 359.7L1051.1 364.0M2077.7 359.7L2075.1 364.0M-463.8 401.6L-449.6 405.3L-448.2 417.3M560.2 401.6L574.4 405.3L575.8 417.3M1584.2 401.6L1598.4 405.3L1599.8 417.3M-482.3 418.7L-470.9 423.3L-456.7 435.0M541.7 418.7L553.1 423.3L567.3 435.0M1565.7 418.7L1577.1 423.3L1591.3 435.0M-486.0 432.7L-472.4 427.3M538.0 432.7L551.6 427.3M1562.0 432.7L1575.6 427.3M-455.3 454.5L-453.9 466.2L-457.3 476.3M568.7 454.5L570.1 466.2L566.7 476.3M1592.7 454.5L1594.1 466.2L1590.7 476.3M-429.7 398.7L-428.3 408.2M594.3 398.7L595.7 408.2M1618.3 398.7L1619.7 408.2M-419.7 405.9L-419.7 417.3M604.3 405.9L604.3 417.3M1628.3 405.9L1628.3 417.3M-411.2 406.5L-411.5 416.5M612.8 406.5L612.5 416.5M1636.8 406.5L1636.5 416.5M-511.3 371.5L-511.3 377.2L-508.5 377.8M512.7 371.5L512.7 377.2L515.5 377.8M1536.7 371.5L1536.7 377.2L1539.5 377.8M-511.6 384.2L-506.5 379.8M512.4 384.2L517.5 379.8M1536.4 384.2L1541.5 379.8M-506.5 385.7L-499.4 380.1L-494.5 379.8M517.5 385.7L524.6 380.1L529.5 379.8M1541.5 385.7L1548.6 380.1L1553.5 379.8M-501.4 391.5L-495.7 391.5M522.6 391.5L528.3 391.5M1546.6 391.5L1552.3 391.5M-493.4 399.6L-492.6 395.6M530.6 399.6L531.4 395.6M1554.6 399.6L1555.4 395.6M-461.5 370.9L-461.5 365.8M562.5 370.9L562.5 365.8M1586.5 370.9L1586.5 365.8" fill="none" stroke="#c3c3c3" stroke-width="1.1"/>
<g font-family="Liberation Sans" font-weight="bold" fill="#444" stroke="#fff" stroke-width="5" paint-order="stroke" stroke-linejoin="round"><text x="-615.3" y="247.3" font-size="27.5" letter-spacing="0.02">NORTH</text><text x="408.7" y="247.3" font-size="27.5" letter-spacing="0.02">NORTH</text><text x="1432.7" y="247.3" font-size="27.5" letter-spacing="0.02">NORTH</text><text x="-627.6" y="282.0" font-size="27.5" letter-spacing="-1.13">AMERICA</text><text x="396.4" y="282.0" font-size="27.5" letter-spacing="-1.13">AMERICA</text><text x="1420.4" y="282.0" font-size="27.5" letter-spacing="-1.13">AMERICA</text><text x="-1057.0" y="262.8" font-size="27.5" letter-spacing="-1.45">ASIA</text><text x="-33.0" y="262.8" font-size="27.5" letter-spacing="-1.45">ASIA</text><text x="991.0" y="262.8" font-size="27.5" letter-spacing="-1.45">ASIA</text><text x="-255.0" y="401.8" font-size="27.5" letter-spacing="-1.30">AFRICA</text><text x="769.0" y="401.8" font-size="27.5" letter-spacing="-1.30">AFRICA</text><text x="1793.0" y="401.8" font-size="27.5" letter-spacing="-1.30">AFRICA</text><text x="-477.0" y="478.0" font-size="27.5" letter-spacing="-0.60">SOUTH</text><text x="547.0" y="478.0" font-size="27.5" letter-spacing="-0.60">SOUTH</text><text x="1571.0" y="478.0" font-size="27.5" letter-spacing="-0.60">SOUTH</text><text x="-948.8" y="486.0" font-size="27.5" letter-spacing="-0.66">OCEANIA</text><text x="75.2" y="486.0" font-size="27.5" letter-spacing="-0.66">OCEANIA</text><text x="1099.2" y="486.0" font-size="27.5" letter-spacing="-0.66">OCEANIA</text></g>
<path d="M-170.0 141.8L-163.7 145.1L-156.6 146.7L-139.6 163.5L-143.8 168.5L-132.4 169.2L-132.4 152.2L-115.4 162.0L-104.0 154.5L-86.9 149.9L-75.6 145.9L-62.8 154.5L-67.9 136.0L-62.8 118.0L-51.4 115.2L-50.0 167.1L-44.3 156.1L-41.4 119.9L-28.6 108.3L-24.4 118.0L-10.1 103.2L4.1 87.0L21.2 81.2L38.2 59.9L55.3 72.8L61.0 98.0L65.2 108.3L78.0 107.3L89.4 113.2L100.8 108.3L108.8 116.1L126.4 126.3L140.6 118.0L154.8 119.9L174.8 132.5L191.8 131.6L197.5 140.2L211.7 143.5L226.0 139.3L231.6 141.0L248.7 145.9L254.4 149.1L268.6 157.6L278.6 163.5L283.7 169.9L274.3 174.8L271.5 182.1L260.1 177.5L250.1 180.2L245.9 193.6L234.5 199.6L226.0 208.4L211.7 207.2L206.9 219.4L203.2 228.8L197.5 239.8L193.2 245.5L187.8 253.8L185.3 238.3L188.1 224.7L191.8 219.4L198.1 198.4L188.1 199.6L183.3 212.9L175.3 214.5L166.2 212.3L156.3 211.8L146.9 214.0L142.0 220.5L133.5 228.3L127.0 236.4L134.4 239.8L142.0 243.1L144.6 248.3L142.0 264.8L136.4 272.0L127.8 284.1L120.7 288.0L114.2 290.0L113.9 287.7L115.9 279.8L121.0 279.0L125.5 265.7L115.0 268.2L105.1 259.2L99.4 244.6L86.0 243.1L82.3 257.0L74.3 259.2L68.1 257.4L49.6 260.5L45.3 257.0L32.5 251.5L22.6 248.8L20.6 258.7L11.2 257.8L2.7 255.2L-7.9 261.8L-11.6 259.6L-20.1 253.8L-30.0 254.7L-36.3 243.1L-40.0 238.8L-48.5 242.2L-57.1 233.9L-71.3 236.9L-82.7 240.3L-84.1 249.2L-94.0 253.8L-101.2 255.6L-108.8 250.6L-115.4 252.9L-119.6 258.7L-123.9 261.8L-125.3 267.0L-123.1 268.2L-118.2 273.7L-122.5 277.3L-123.9 281.0L-123.1 285.3L-121.1 291.1L-121.6 294.2L-125.3 291.9L-130.2 288.4L-136.7 286.5L-143.8 285.7L-150.9 281.4L-148.9 275.3L-146.7 270.3L-148.9 267.4L-143.8 260.0L-149.5 258.3L-156.6 256.5L-160.3 251.1L-166.6 248.3L-168.0 243.6L-164.6 242.7L-169.7 231.9L-177.4 229.4L-178.8 222.1L-179.7 214.5L-178.0 211.2L-172.3 208.4L-175.7 203.8L-178.5 204.9L-173.7 198.4L-168.0 191.1L-172.3 184.1L-172.3 174.1L-175.1 164.2L-172.3 158.3L-176.0 149.1ZM854.0 141.8L860.3 145.1L867.4 146.7L884.4 163.5L880.2 168.5L891.6 169.2L891.6 152.2L908.6 162.0L920.0 154.5L937.1 149.9L948.4 145.9L961.2 154.5L956.1 136.0L961.2 118.0L972.6 115.2L974.0 167.1L979.7 156.1L982.6 119.9L995.4 108.3L999.6 118.0L1013.9 103.2L1028.1 87.0L1045.2 81.2L1062.2 59.9L1079.3 72.8L1085.0 98.0L1089.2 108.3L1102.0 107.3L1113.4 113.2L1124.8 108.3L1132.8 116.1L1150.4 126.3L1164.6 118.0L1178.8 119.9L1198.8 132.5L1215.8 131.6L1221.5 140.2L1235.7 143.5L1250.0 139.3L1255.6 141.0L1272.7 145.9L1278.4 149.1L1292.6 157.6L1302.6 163.5L1307.7 169.9L1298.3 174.8L1295.5 182.1L1284.1 177.5L1274.1 180.2L1269.9 193.6L1258.5 199.6L1250.0 208.4L1235.7 207.2L1230.9 219.4L1227.2 228.8L1221.5 239.8L1217.2 245.5L1211.8 253.8L1209.3 238.3L1212.1 224.7L1215.8 219.4L1222.1 198.4L1212.1 199.6L1207.3 212.9L1199.3 214.5L1190.2 212.3L1180.3 211.8L1170.9 214.0L1166.0 220.5L1157.5 228.3L1151.0 236.4L1158.4 239.8L1166.0 243.1L1168.6 248.3L1166.0 264.8L1160.4 272.0L1151.8 284.1L1144.7 288.0L1138.2 290.0L1137.9 287.7L1139.9 279.8L1145.0 279.0L1149.5 265.7L1139.0 268.2L1129.1 259.2L1123.4 244.6L1110.0 243.1L1106.3 257.0L1098.3 259.2L1092.1 257.4L1073.6 260.5L1069.3 257.0L1056.5 251.5L1046.6 248.8L1044.6 258.7L1035.2 257.8L1026.7 255.2L1016.1 261.8L1012.4 259.6L1003.9 253.8L994.0 254.7L987.7 243.1L984.0 238.8L975.5 242.2L966.9 233.9L952.7 236.9L941.3 240.3L939.9 249.2L930.0 253.8L922.8 255.6L915.2 250.6L908.6 252.9L904.4 258.7L900.1 261.8L898.7 267.0L900.9 268.2L905.8 273.7L901.5 277.3L900.1 281.0L900.9 285.3L902.9 291.1L902.4 294.2L898.7 291.9L893.8 288.4L887.3 286.5L880.2 285.7L873.1 281.4L875.1 275.3L877.3 270.3L875.1 267.4L880.2 260.0L874.5 258.3L867.4 256.5L863.7 251.1L857.4 248.3L856.0 243.6L859.4 242.7L854.3 231.9L846.6 229.4L845.2 222.1L844.3 214.5L846.0 211.2L851.7 208.4L848.3 203.8L845.5 204.9L850.3 198.4L856.0 191.1L851.7 184.1L851.7 174.1L848.9 164.2L851.7 158.3L848.0 149.1ZM1878.0 141.8L1884.3 145.1L1891.4 146.7L1908.4 163.5L1904.2 168.5L1915.6 169.2L1915.6 152.2L1932.6 162.0L1944.0 154.5L1961.1 149.9L1972.4 145.9L1985.2 154.5L1980.1 136.0L1985.2 118.0L1996.6 115.2L1998.0 167.1L2003.7 156.1L2006.6 119.9L2019.4 108.3L2023.6 118.0L2037.9 103.2L2052.1 87.0L2069.2 81.2L2086.2 59.9L2103.3 72.8L2109.0 98.0L2113.2 108.3L2126.0 107.3L2137.4 113.2L2148.8 108.3L2156.8 116.1L2174.4 126.3L2188.6 118.0L2202.8 119.9L2222.8 132.5L2239.8 131.6L2245.5 140.2L2259.7 143.5L2274.0 139.3L2279.6 141.0L2296.7 145.9L2302.4 149.1L2316.6 157.6L2326.6 163.5L2331.7 169.9L2322.3 174.8L2319.5 182.1L2308.1 177.5L2298.1 180.2L2293.9 193.6L2282.5 199.6L2274.0 208.4L2259.7 207.2L2254.9 219.4L2251.2 228.8L2245.5 239.8L2241.2 245.5L2235.8 253.8L2233.3 238.3L2236.1 224.7L2239.8 219.4L2246.1 198.4L2236.1 199.6L2231.3 212.9L2223.3 214.5L2214.2 212.3L2204.3 211.8L2194.9 214.0L2190.0 220.5L2181.5 228.3L2175.0 236.4L2182.4 239.8L2190.0 243.1L2192.6 248.3L2190.0 264.8L2184.4 272.0L2175.8 284.1L2168.7 288.0L2162.2 290.0L2161.9 287.7L2163.9 279.8L2169.0 279.0L2173.5 265.7L2163.0 268.2L2153.1 259.2L2147.4 244.6L2134.0 243.1L2130.3 257.0L2122.3 259.2L2116.1 257.4L2097.6 260.5L2093.3 257.0L2080.5 251.5L2070.6 248.8L2068.6 258.7L2059.2 257.8L2050.7 255.2L2040.1 261.8L2036.4 259.6L2027.9 253.8L2018.0 254.7L2011.7 243.1L2008.0 238.8L1999.5 242.2L1990.9 233.9L1976.7 236.9L1965.3 240.3L1963.9 249.2L1954.0 253.8L1946.8 255.6L1939.2 250.6L1932.6 252.9L1928.4 258.7L1924.1 261.8L1922.7 267.0L1924.9 268.2L1929.8 273.7L1925.5 277.3L1924.1 281.0L1924.9 285.3L1926.9 291.1L1926.4 294.2L1922.7 291.9L1917.8 288.4L1911.3 286.5L1904.2 285.7L1897.1 281.4L1899.1 275.3L1901.3 270.3L1899.1 267.4L1904.2 260.0L1898.5 258.3L1891.4 256.5L1887.7 251.1L1881.4 248.3L1880.0 243.6L1883.4 242.7L1878.3 231.9L1870.6 229.4L1869.2 222.1L1868.3 214.5L1870.0 211.2L1875.7 208.4L1872.3 203.8L1869.5 204.9L1874.3 198.4L1880.0 191.1L1875.7 184.1L1875.7 174.1L1872.9 164.2L1875.7 158.3L1872.0 149.1ZM-201.8 237.8L-192.7 238.3L-193.6 234.4L-197.9 233.4ZM822.2 237.8L831.3 238.3L830.4 234.4L826.1 233.4ZM1846.2 237.8L1855.3 238.3L1854.4 234.4L1850.1 233.4ZM-109.7 129.0L-99.7 113.2L-94.0 89.2L-75.6 75.2L-62.8 70.3L-84.1 90.3L-95.5 118.0L-99.7 135.1ZM914.3 129.0L924.3 113.2L930.0 89.2L948.4 75.2L961.2 70.3L939.9 90.3L928.5 118.0L924.3 135.1ZM1938.3 129.0L1948.3 113.2L1954.0 89.2L1972.4 75.2L1985.2 70.3L1963.9 90.3L1952.5 118.0L1948.3 135.1ZM15.5 48.9L26.8 33.9L39.6 41.6L28.3 12.3L15.5 17.6L4.1 29.2ZM1039.5 48.9L1050.8 33.9L1063.6 41.6L1052.3 12.3L1039.5 17.6L1028.1 29.2ZM2063.5 48.9L2074.8 33.9L2087.6 41.6L2076.3 12.3L2063.5 17.6L2052.1 29.2ZM-123.9 22.6L-109.7 12.3L-86.9 5.0L-72.7 12.3L-92.6 26.0L-115.4 29.2ZM900.1 22.6L914.3 12.3L937.1 5.0L951.3 12.3L931.4 26.0L908.6 29.2ZM1924.1 22.6L1938.3 12.3L1961.1 5.0L1975.3 12.3L1955.4 26.0L1932.6 29.2ZM129.2 98.0L146.3 104.2L157.7 92.6L169.1 90.3L163.4 81.2L143.5 81.2L129.2 87.0ZM1153.2 98.0L1170.3 104.2L1181.7 92.6L1193.1 90.3L1187.4 81.2L1167.5 81.2L1153.2 87.0ZM2177.2 98.0L2194.3 104.2L2205.7 92.6L2217.1 90.3L2211.4 81.2L2191.5 81.2L2177.2 87.0ZM257.2 127.2L262.9 131.6L248.7 132.5ZM1281.2 127.2L1286.9 131.6L1272.7 132.5ZM2305.2 127.2L2310.9 131.6L2296.7 132.5ZM146.3 275.3L150.6 262.7L154.0 262.7L149.2 249.2L149.2 238.3L147.2 238.8L145.5 253.8ZM1170.3 275.3L1174.6 262.7L1178.0 262.7L1173.2 249.2L1173.2 238.3L1171.2 238.8L1169.5 253.8ZM2194.3 275.3L2198.6 262.7L2202.0 262.7L2197.2 249.2L2197.2 238.3L2195.2 238.8L2193.5 253.8ZM-82.4 348.9L-68.4 348.3L-63.6 353.6L-61.9 351.7L-55.6 351.4L-59.6 343.2L-52.8 339.3L-45.7 330.5L-45.1 325.2L-47.1 319.4L-39.1 314.9L-41.7 310.6L-45.7 308.9L-54.2 311.3L-55.1 318.0L-59.9 321.8L-60.5 328.5L-67.0 329.2L-68.7 333.8L-79.8 335.4ZM941.6 348.9L955.6 348.3L960.4 353.6L962.1 351.7L968.4 351.4L964.4 343.2L971.2 339.3L978.3 330.5L978.9 325.2L976.9 319.4L984.9 314.9L982.3 310.6L978.3 308.9L969.8 311.3L968.9 318.0L964.1 321.8L963.5 328.5L957.0 329.2L955.3 333.8L944.2 335.4ZM1965.6 348.9L1979.6 348.3L1984.4 353.6L1986.1 351.7L1992.4 351.4L1988.4 343.2L1995.2 339.3L2002.3 330.5L2002.9 325.2L2000.9 319.4L2008.9 314.9L2006.3 310.6L2002.3 308.9L1993.8 311.3L1992.9 318.0L1988.1 321.8L1987.5 328.5L1981.0 329.2L1979.3 333.8L1968.2 335.4ZM-7.0 344.8L-2.2 345.4L4.7 349.5L3.8 352.3L4.9 353.6L5.8 361.3L3.5 357.9L-3.0 359.1L-4.7 357.3L-6.7 351.1L-5.9 345.1ZM1017.0 344.8L1021.8 345.4L1028.7 349.5L1027.8 352.3L1028.9 353.6L1029.8 361.3L1027.5 357.9L1021.0 359.1L1019.3 357.3L1017.3 351.1L1018.1 345.1ZM2041.0 344.8L2045.8 345.4L2052.7 349.5L2051.8 352.3L2052.9 353.6L2053.8 361.3L2051.5 357.9L2045.0 359.1L2043.3 357.3L2041.3 351.1L2042.1 345.1ZM-249.9 404.8L-249.9 395.9L-247.4 389.5L-245.9 384.2L-240.5 383.7L-230.6 386.0L-222.0 385.1L-217.2 384.2L-216.1 388.6L-218.3 391.8L-221.5 398.7L-224.0 402.5L-227.4 403.0L-230.0 404.5L-233.1 409.6L-240.2 410.8L-243.4 407.0L-245.1 405.0ZM774.1 404.8L774.1 395.9L776.6 389.5L778.1 384.2L783.5 383.7L793.4 386.0L802.0 385.1L806.8 384.2L807.9 388.6L805.7 391.8L802.5 398.7L800.0 402.5L796.6 403.0L794.0 404.5L790.9 409.6L783.8 410.8L780.6 407.0L778.9 405.0ZM1798.1 404.8L1798.1 395.9L1800.6 389.5L1802.1 384.2L1807.5 383.7L1817.4 386.0L1826.0 385.1L1830.8 384.2L1831.9 388.6L1829.7 391.8L1826.5 398.7L1824.0 402.5L1820.6 403.0L1818.0 404.5L1814.9 409.6L1807.8 410.8L1804.6 407.0L1802.9 405.0ZM-404.4 411.0L-399.8 417.9L-401.2 423.0L-395.6 426.4L-384.2 430.1L-374.2 431.3L-364.3 436.7L-357.7 438.7L-356.6 444.4L-358.6 450.1L-363.4 454.5L-368.0 461.8L-368.5 474.5L-371.9 482.6L-374.2 487.2L-382.8 490.3L-395.6 501.2L-412.6 501.2L-414.0 493.4L-421.2 487.2L-422.6 481.1L-422.6 470.0L-429.1 466.8L-431.1 461.8L-442.5 457.4L-443.9 451.6L-455.3 454.5L-458.1 454.5L-465.2 449.9L-465.2 443.5L-456.7 435.0L-456.1 423.9L-455.3 419.9L-447.9 419.6L-439.6 416.7L-441.1 411.3L-435.4 411.6L-428.8 408.5L-427.7 417.6L-424.0 419.0L-418.3 417.6L-411.5 416.5ZM619.6 411.0L624.2 417.9L622.8 423.0L628.4 426.4L639.8 430.1L649.8 431.3L659.7 436.7L666.3 438.7L667.4 444.4L665.4 450.1L660.6 454.5L656.0 461.8L655.5 474.5L652.1 482.6L649.8 487.2L641.2 490.3L628.4 501.2L611.4 501.2L610.0 493.4L602.8 487.2L601.4 481.1L601.4 470.0L594.9 466.8L592.9 461.8L581.5 457.4L580.1 451.6L568.7 454.5L565.9 454.5L558.8 449.9L558.8 443.5L567.3 435.0L567.9 423.9L568.7 419.9L576.1 419.6L584.4 416.7L582.9 411.3L588.6 411.6L595.2 408.5L596.3 417.6L600.0 419.0L605.7 417.6L612.5 416.5ZM1643.6 411.0L1648.2 417.9L1646.8 423.0L1652.4 426.4L1663.8 430.1L1673.8 431.3L1683.7 436.7L1690.3 438.7L1691.4 444.4L1689.4 450.1L1684.6 454.5L1680.0 461.8L1679.5 474.5L1676.1 482.6L1673.8 487.2L1665.2 490.3L1652.4 501.2L1635.4 501.2L1634.0 493.4L1626.8 487.2L1625.4 481.1L1625.4 470.0L1618.9 466.8L1616.9 461.8L1605.5 457.4L1604.1 451.6L1592.7 454.5L1589.9 454.5L1582.8 449.9L1582.8 443.5L1591.3 435.0L1591.9 423.9L1592.7 419.9L1600.1 419.6L1608.4 416.7L1606.9 411.3L1612.6 411.6L1619.2 408.5L1620.3 417.6L1624.0 419.0L1629.7 417.6L1636.5 416.5ZM-590.7 325.2L-584.1 325.2L-573.3 329.2L-565.4 329.2L-565.4 327.5L-560.5 327.5L-554.8 334.1L-550.6 336.7L-546.3 334.1L-540.6 341.6L-534.1 346.4L-535.5 352.6L-534.1 360.4L-530.4 368.5L-526.4 370.3L-520.7 369.1L-516.4 367.9L-514.7 361.9L-506.5 360.4L-506.2 365.8L-508.5 369.4L-511.0 371.2L-517.6 373.0L-514.7 376.9L-519.9 379.0L-519.9 381.3L-525.0 376.9L-532.1 377.8L-537.8 376.0L-546.3 373.0L-552.0 370.0L-557.7 363.4L-557.1 360.4L-560.5 354.2L-566.2 348.9L-570.5 343.2L-573.3 337.7L-578.5 331.8L-584.1 327.5L-579.0 335.1L-576.2 340.0L-571.9 351.7L-569.1 355.1L-571.1 354.8L-576.2 350.1L-582.4 340.6L-587.6 331.8ZM433.3 325.2L439.9 325.2L450.7 329.2L458.6 329.2L458.6 327.5L463.5 327.5L469.2 334.1L473.4 336.7L477.7 334.1L483.4 341.6L489.9 346.4L488.5 352.6L489.9 360.4L493.6 368.5L497.6 370.3L503.3 369.1L507.6 367.9L509.3 361.9L517.5 360.4L517.8 365.8L515.5 369.4L513.0 371.2L506.4 373.0L509.3 376.9L504.1 379.0L504.1 381.3L499.0 376.9L491.9 377.8L486.2 376.0L477.7 373.0L472.0 370.0L466.3 363.4L466.9 360.4L463.5 354.2L457.8 348.9L453.5 343.2L450.7 337.7L445.5 331.8L439.9 327.5L445.0 335.1L447.8 340.0L452.1 351.7L454.9 355.1L452.9 354.8L447.8 350.1L441.6 340.6L436.4 331.8ZM1457.3 325.2L1463.9 325.2L1474.7 329.2L1482.6 329.2L1482.6 327.5L1487.5 327.5L1493.2 334.1L1497.4 336.7L1501.7 334.1L1507.4 341.6L1513.9 346.4L1512.5 352.6L1513.9 360.4L1517.6 368.5L1521.6 370.3L1527.3 369.1L1531.6 367.9L1533.3 361.9L1541.5 360.4L1541.8 365.8L1539.5 369.4L1537.0 371.2L1530.4 373.0L1533.3 376.9L1528.1 379.0L1528.1 381.3L1523.0 376.9L1515.9 377.8L1510.2 376.0L1501.7 373.0L1496.0 370.0L1490.3 363.4L1490.9 360.4L1487.5 354.2L1481.8 348.9L1477.5 343.2L1474.7 337.7L1469.5 331.8L1463.9 327.5L1469.0 335.1L1471.8 340.0L1476.1 351.7L1478.9 355.1L1476.9 354.8L1471.8 350.1L1465.6 340.6L1460.4 331.8ZM13.5 407.0L19.7 408.2L26.8 415.0L36.8 421.6L39.6 427.3L43.9 431.5L43.6 439.5L39.6 439.8L33.4 434.4L27.7 425.8L22.9 417.9L18.3 413.9ZM1037.5 407.0L1043.7 408.2L1050.8 415.0L1060.8 421.6L1063.6 427.3L1067.9 431.5L1067.6 439.5L1063.6 439.8L1057.4 434.4L1051.7 425.8L1046.9 417.9L1042.3 413.9ZM2061.5 407.0L2067.7 408.2L2074.8 415.0L2084.8 421.6L2087.6 427.3L2091.9 431.5L2091.6 439.5L2087.6 439.8L2081.4 434.4L2075.7 425.8L2070.9 417.9L2066.3 413.9ZM41.6 442.4L44.2 440.1L51.0 441.5L58.1 441.2L63.0 442.7L68.1 445.3L68.1 448.1L58.1 446.4L45.3 444.4ZM1065.6 442.4L1068.2 440.1L1075.0 441.5L1082.1 441.2L1087.0 442.7L1092.1 445.3L1092.1 448.1L1082.1 446.4L1069.3 444.4ZM2089.6 442.4L2092.2 440.1L2099.0 441.5L2106.1 441.2L2111.0 442.7L2116.1 445.3L2116.1 448.1L2106.1 446.4L2093.3 444.4ZM52.2 418.7L54.4 417.3L58.1 419.6L65.2 418.7L68.9 416.5L71.8 411.3L76.9 411.0L76.9 413.9L80.6 420.2L76.9 423.0L74.3 428.7L72.4 433.5L68.4 434.4L59.6 432.1L55.9 431.5L53.0 425.8ZM1076.2 418.7L1078.4 417.3L1082.1 419.6L1089.2 418.7L1092.9 416.5L1095.8 411.3L1100.9 411.0L1100.9 413.9L1104.6 420.2L1100.9 423.0L1098.3 428.7L1096.4 433.5L1092.4 434.4L1083.6 432.1L1079.9 431.5L1077.0 425.8ZM2100.2 418.7L2102.4 417.3L2106.1 419.6L2113.2 418.7L2116.9 416.5L2119.8 411.3L2124.9 411.0L2124.9 413.9L2128.6 420.2L2124.9 423.0L2122.3 428.7L2120.4 433.5L2116.4 434.4L2107.6 432.1L2103.9 431.5L2101.0 425.8ZM82.3 438.7L85.2 430.1L84.6 425.8L93.1 425.8L98.0 418.7L96.5 421.9L85.2 421.3L82.6 423.0L80.3 431.5ZM1106.3 438.7L1109.2 430.1L1108.6 425.8L1117.1 425.8L1122.0 418.7L1120.5 421.9L1109.2 421.3L1106.6 423.0L1104.3 431.5ZM2130.3 438.7L2133.2 430.1L2132.6 425.8L2141.1 425.8L2146.0 418.7L2144.5 421.9L2133.2 421.3L2130.6 423.0L2128.3 431.5ZM86.6 430.1L93.1 434.4L91.7 438.7L88.0 436.7ZM1110.6 430.1L1117.1 434.4L1115.7 438.7L1112.0 436.7ZM2134.6 430.1L2141.1 434.4L2139.7 438.7L2136.0 436.7ZM115.0 427.3L124.1 425.6L134.9 427.6L143.5 430.4L143.5 449.0L134.9 446.7L133.5 437.2L126.4 435.2L119.3 431.5ZM1139.0 427.3L1148.1 425.6L1158.9 427.6L1167.5 430.4L1167.5 449.0L1158.9 446.7L1157.5 437.2L1150.4 435.2L1143.3 431.5ZM2163.0 427.3L2172.1 425.6L2182.9 427.6L2191.5 430.4L2191.5 449.0L2182.9 446.7L2181.5 437.2L2174.4 435.2L2167.3 431.5ZM69.5 446.4L80.9 446.4L92.3 446.7L92.3 448.1L80.9 448.7L69.5 448.1ZM1093.5 446.4L1104.9 446.4L1116.3 446.7L1116.3 448.1L1104.9 448.7L1093.5 448.1ZM2117.5 446.4L2128.9 446.4L2140.3 446.7L2140.3 448.1L2128.9 448.7L2117.5 448.1ZM95.1 449.6L103.6 447.0L98.0 451.6L93.7 452.2ZM1119.1 449.6L1127.6 447.0L1122.0 451.6L1117.7 452.2ZM2143.1 449.6L2151.6 447.0L2146.0 451.6L2141.7 452.2ZM105.1 418.7L107.9 417.3L108.8 423.0L105.9 425.3ZM1129.1 418.7L1131.9 417.3L1132.8 423.0L1129.9 425.3ZM2153.1 418.7L2155.9 417.3L2156.8 423.0L2153.9 425.3Z" fill="#7295c4" fill-opacity="0.8" stroke="#1f1f1f" stroke-width="1.7" stroke-linejoin="round"/>
<path d="M125.5 265.7L121.0 279.0L115.9 279.8L113.9 287.7L112.7 288.8L106.5 293.0L102.2 291.9L96.0 299.0L90.0 297.2L87.1 295.3L82.3 299.4L77.2 302.4L79.5 304.9L82.6 308.9L90.8 308.5L85.2 312.1L81.7 316.6L85.7 323.5L88.9 328.5L89.4 333.5L86.0 340.6L82.3 347.6L74.1 355.7L65.2 358.2L60.4 360.1L56.7 364.0L54.7 360.4L49.6 360.4L45.9 356.4L42.5 355.1L35.4 357.0L32.0 361.3L29.7 359.7L25.4 358.5L23.1 352.6L20.0 353.0L23.1 341.6L19.7 339.0L15.5 335.4L4.1 340.6L-4.4 342.2L-7.0 340.3L-15.8 338.0L-26.9 332.8L-32.9 328.5L-33.7 319.4L-41.7 310.6L-45.7 308.9L-44.3 300.5L-48.0 300.5L-41.4 296.4L-34.3 293.0L-29.5 290.4L-30.0 279.4L-22.9 278.1L-21.5 270.8L-14.4 270.8L-7.9 261.8L0.7 273.2L-0.2 278.6L16.3 288.4L29.1 288.8L41.1 292.7L56.4 288.4L60.7 284.5L59.6 281.4L66.7 277.3L76.6 272.8L82.9 272.4L74.3 259.2L82.3 257.0L86.0 243.1L99.4 244.6L105.1 259.2L115.0 268.2ZM1149.5 265.7L1145.0 279.0L1139.9 279.8L1137.9 287.7L1136.7 288.8L1130.5 293.0L1126.2 291.9L1120.0 299.0L1114.0 297.2L1111.1 295.3L1106.3 299.4L1101.2 302.4L1103.5 304.9L1106.6 308.9L1114.8 308.5L1109.2 312.1L1105.7 316.6L1109.7 323.5L1112.9 328.5L1113.4 333.5L1110.0 340.6L1106.3 347.6L1098.1 355.7L1089.2 358.2L1084.4 360.1L1080.7 364.0L1078.7 360.4L1073.6 360.4L1069.9 356.4L1066.5 355.1L1059.4 357.0L1056.0 361.3L1053.7 359.7L1049.4 358.5L1047.1 352.6L1044.0 353.0L1047.1 341.6L1043.7 339.0L1039.5 335.4L1028.1 340.6L1019.6 342.2L1017.0 340.3L1008.2 338.0L997.1 332.8L991.1 328.5L990.3 319.4L982.3 310.6L978.3 308.9L979.7 300.5L976.0 300.5L982.6 296.4L989.7 293.0L994.5 290.4L994.0 279.4L1001.1 278.1L1002.5 270.8L1009.6 270.8L1016.1 261.8L1024.7 273.2L1023.8 278.6L1040.3 288.4L1053.1 288.8L1065.1 292.7L1080.4 288.4L1084.7 284.5L1083.6 281.4L1090.7 277.3L1100.6 272.8L1106.9 272.4L1098.3 259.2L1106.3 257.0L1110.0 243.1L1123.4 244.6L1129.1 259.2L1139.0 268.2ZM2173.5 265.7L2169.0 279.0L2163.9 279.8L2161.9 287.7L2160.7 288.8L2154.5 293.0L2150.2 291.9L2144.0 299.0L2138.0 297.2L2135.1 295.3L2130.3 299.4L2125.2 302.4L2127.5 304.9L2130.6 308.9L2138.8 308.5L2133.2 312.1L2129.7 316.6L2133.7 323.5L2136.9 328.5L2137.4 333.5L2134.0 340.6L2130.3 347.6L2122.1 355.7L2113.2 358.2L2108.4 360.1L2104.7 364.0L2102.7 360.4L2097.6 360.4L2093.9 356.4L2090.5 355.1L2083.4 357.0L2080.0 361.3L2077.7 359.7L2073.4 358.5L2071.1 352.6L2068.0 353.0L2071.1 341.6L2067.7 339.0L2063.5 335.4L2052.1 340.6L2043.6 342.2L2041.0 340.3L2032.2 338.0L2021.1 332.8L2015.1 328.5L2014.3 319.4L2006.3 310.6L2002.3 308.9L2003.7 300.5L2000.0 300.5L2006.6 296.4L2013.7 293.0L2018.5 290.4L2018.0 279.4L2025.1 278.1L2026.5 270.8L2033.6 270.8L2040.1 261.8L2048.7 273.2L2047.8 278.6L2064.3 288.4L2077.1 288.8L2089.1 292.7L2104.4 288.4L2108.7 284.5L2107.6 281.4L2114.7 277.3L2124.6 272.8L2130.9 272.4L2122.3 259.2L2130.3 257.0L2134.0 243.1L2147.4 244.6L2153.1 259.2L2163.0 268.2ZM51.3 367.3L55.9 364.6L58.1 366.1L54.2 370.3ZM1075.3 367.3L1079.9 364.6L1082.1 366.1L1078.2 370.3ZM2099.3 367.3L2103.9 364.6L2106.1 366.1L2102.2 370.3ZM-63.6 353.6L-61.9 351.7L-55.6 351.4L-59.6 343.2L-52.8 339.3L-45.7 330.5L-45.1 325.2L-47.1 319.4L-39.1 314.9L-33.7 319.4L-32.9 328.5L-26.9 332.8L-24.4 341.3L-17.0 342.2L-7.0 344.8L-7.0 340.3L-4.4 342.2L4.1 340.6L15.5 335.4L19.4 339.3L13.2 344.5L10.3 353.0L7.5 358.2L4.9 353.6L3.8 352.3L4.7 349.5L-2.2 345.4L-5.9 345.1L-6.7 351.1L-4.7 357.3L-6.7 359.4L-10.4 362.8L-18.1 370.0L-23.8 375.4L-29.2 385.4L-30.6 393.5L-35.2 397.3L-37.2 399.9L-40.6 395.9L-44.8 386.3L-48.5 376.9L-50.5 367.9L-51.1 360.7L-58.5 357.3ZM960.4 353.6L962.1 351.7L968.4 351.4L964.4 343.2L971.2 339.3L978.3 330.5L978.9 325.2L976.9 319.4L984.9 314.9L990.3 319.4L991.1 328.5L997.1 332.8L999.6 341.3L1007.0 342.2L1017.0 344.8L1017.0 340.3L1019.6 342.2L1028.1 340.6L1039.5 335.4L1043.4 339.3L1037.2 344.5L1034.3 353.0L1031.5 358.2L1028.9 353.6L1027.8 352.3L1028.7 349.5L1021.8 345.4L1018.1 345.1L1017.3 351.1L1019.3 357.3L1017.3 359.4L1013.6 362.8L1005.9 370.0L1000.2 375.4L994.8 385.4L993.4 393.5L988.8 397.3L986.8 399.9L983.4 395.9L979.2 386.3L975.5 376.9L973.5 367.9L972.9 360.7L965.5 357.3ZM1984.4 353.6L1986.1 351.7L1992.4 351.4L1988.4 343.2L1995.2 339.3L2002.3 330.5L2002.9 325.2L2000.9 319.4L2008.9 314.9L2014.3 319.4L2015.1 328.5L2021.1 332.8L2023.6 341.3L2031.0 342.2L2041.0 344.8L2041.0 340.3L2043.6 342.2L2052.1 340.6L2063.5 335.4L2067.4 339.3L2061.2 344.5L2058.3 353.0L2055.5 358.2L2052.9 353.6L2051.8 352.3L2052.7 349.5L2045.8 345.4L2042.1 345.1L2041.3 351.1L2043.3 357.3L2041.3 359.4L2037.6 362.8L2029.9 370.0L2024.2 375.4L2018.8 385.4L2017.4 393.5L2012.8 397.3L2010.8 399.9L2007.4 395.9L2003.2 386.3L1999.5 376.9L1997.5 367.9L1996.9 360.7L1989.5 357.3Z" fill="#dc735b" fill-opacity="0.8" stroke="#1f1f1f" stroke-width="1.7" stroke-linejoin="round"/>
<path d="M-612.3 265.3L-607.5 262.7L-528.4 262.7L-528.4 260.9L-512.5 267.0L-498.0 273.2L-492.3 278.1L-492.0 287.3L-494.0 291.1L-482.3 288.0L-482.9 285.7L-475.2 282.6L-470.9 279.4L-461.0 279.4L-454.4 269.5L-450.5 270.8L-450.5 276.5L-448.2 280.2L-456.7 284.5L-458.4 288.8L-456.7 291.9L-462.1 293.8L-468.1 296.4L-468.1 300.5L-472.4 304.2L-473.8 309.6L-472.4 315.6L-476.6 318.3L-482.3 322.8L-488.0 328.5L-488.9 333.5L-485.2 343.8L-486.6 348.9L-489.4 347.0L-492.6 340.6L-493.7 336.7L-498.0 333.5L-503.6 332.2L-510.8 332.5L-512.2 336.7L-517.9 335.1L-525.0 334.8L-534.1 341.3L-534.1 346.4L-540.6 341.6L-546.3 334.1L-550.6 336.7L-554.8 334.1L-560.5 327.5L-565.4 327.5L-565.4 329.2L-573.3 329.2L-584.1 325.2L-590.7 325.2L-594.7 320.1L-600.6 318.3L-604.6 309.9L-606.0 306.7L-609.7 299.4L-610.9 291.1L-610.3 274.5ZM411.7 265.3L416.5 262.7L495.6 262.7L495.6 260.9L511.5 267.0L526.0 273.2L531.7 278.1L532.0 287.3L530.0 291.1L541.7 288.0L541.1 285.7L548.8 282.6L553.1 279.4L563.0 279.4L569.6 269.5L573.5 270.8L573.5 276.5L575.8 280.2L567.3 284.5L565.6 288.8L567.3 291.9L561.9 293.8L555.9 296.4L555.9 300.5L551.6 304.2L550.2 309.6L551.6 315.6L547.4 318.3L541.7 322.8L536.0 328.5L535.1 333.5L538.8 343.8L537.4 348.9L534.6 347.0L531.4 340.6L530.3 336.7L526.0 333.5L520.4 332.2L513.2 332.5L511.8 336.7L506.1 335.1L499.0 334.8L489.9 341.3L489.9 346.4L483.4 341.6L477.7 334.1L473.4 336.7L469.2 334.1L463.5 327.5L458.6 327.5L458.6 329.2L450.7 329.2L439.9 325.2L433.3 325.2L429.3 320.1L423.4 318.3L419.4 309.9L418.0 306.7L414.3 299.4L413.1 291.1L413.7 274.5ZM1435.7 265.3L1440.5 262.7L1519.6 262.7L1519.6 260.9L1535.5 267.0L1550.0 273.2L1555.7 278.1L1556.0 287.3L1554.0 291.1L1565.7 288.0L1565.1 285.7L1572.8 282.6L1577.1 279.4L1587.0 279.4L1593.6 269.5L1597.5 270.8L1597.5 276.5L1599.8 280.2L1591.3 284.5L1589.6 288.8L1591.3 291.9L1585.9 293.8L1579.9 296.4L1579.9 300.5L1575.6 304.2L1574.2 309.6L1575.6 315.6L1571.4 318.3L1565.7 322.8L1560.0 328.5L1559.1 333.5L1562.8 343.8L1561.4 348.9L1558.6 347.0L1555.4 340.6L1554.3 336.7L1550.0 333.5L1544.4 332.2L1537.2 332.5L1535.8 336.7L1530.1 335.1L1523.0 334.8L1513.9 341.3L1513.9 346.4L1507.4 341.6L1501.7 334.1L1497.4 336.7L1493.2 334.1L1487.5 327.5L1482.6 327.5L1482.6 329.2L1474.7 329.2L1463.9 325.2L1457.3 325.2L1453.3 320.1L1447.4 318.3L1443.4 309.9L1442.0 306.7L1438.3 299.4L1437.1 291.1L1437.7 274.5ZM-658.7 143.5L-684.3 136.8L-702.8 129.0L-718.4 137.7L-729.8 149.9L-721.2 159.8L-725.5 167.1L-735.5 173.4L-726.9 180.8L-715.6 180.8L-715.0 187.3L-726.9 193.6L-729.8 199.6L-724.1 208.4L-718.4 208.9L-708.4 215.6L-704.2 214.5L-707.0 222.1L-715.6 229.9L-726.4 237.4L-709.9 230.9L-701.3 223.1L-695.6 216.7L-688.5 211.2L-684.3 201.4L-678.6 206.7L-672.9 204.3L-667.2 208.4L-655.8 210.1L-648.7 216.7L-644.4 222.1L-638.8 229.9L-630.2 236.4L-627.4 230.4L-635.9 216.7L-643.0 209.5L-648.7 212.9L-653.0 206.7L-658.7 206.7ZM365.3 143.5L339.7 136.8L321.2 129.0L305.6 137.7L294.2 149.9L302.8 159.8L298.5 167.1L288.5 173.4L297.1 180.8L308.4 180.8L309.0 187.3L297.1 193.6L294.2 199.6L299.9 208.4L305.6 208.9L315.6 215.6L319.8 214.5L317.0 222.1L308.4 229.9L297.6 237.4L314.1 230.9L322.7 223.1L328.4 216.7L335.5 211.2L339.7 201.4L345.4 206.7L351.1 204.3L356.8 208.4L368.2 210.1L375.3 216.7L379.6 222.1L385.2 229.9L393.8 236.4L396.6 230.4L388.1 216.7L381.0 209.5L375.3 212.9L371.0 206.7L365.3 206.7ZM1389.3 143.5L1363.7 136.8L1345.2 129.0L1329.6 137.7L1318.2 149.9L1326.8 159.8L1322.5 167.1L1312.5 173.4L1321.1 180.8L1332.4 180.8L1333.0 187.3L1321.1 193.6L1318.2 199.6L1323.9 208.4L1329.6 208.9L1339.6 215.6L1343.8 214.5L1341.0 222.1L1332.4 229.9L1321.6 237.4L1338.1 230.9L1346.7 223.1L1352.4 216.7L1359.5 211.2L1363.7 201.4L1369.4 206.7L1375.1 204.3L1380.8 208.4L1392.2 210.1L1399.3 216.7L1403.6 222.1L1409.2 229.9L1417.8 236.4L1420.6 230.4L1412.1 216.7L1405.0 209.5L1399.3 212.9L1395.0 206.7L1389.3 206.7ZM-726.9 238.8L-741.2 244.6L-758.2 250.2L-769.6 251.5L-763.9 252.9L-746.8 247.9L-729.8 242.2ZM297.1 238.8L282.8 244.6L265.8 250.2L254.4 251.5L260.1 252.9L277.2 247.9L294.2 242.2ZM1321.1 238.8L1306.8 244.6L1289.8 250.2L1278.4 251.5L1284.1 252.9L1301.2 247.9L1318.2 242.2ZM-712.1 358.2L-710.7 358.2L-711.0 359.1ZM311.9 358.2L313.3 358.2L313.0 359.1ZM1335.9 358.2L1337.3 358.2L1337.0 359.1ZM-707.6 360.1L-706.2 360.4L-707.0 361.0ZM316.4 360.1L317.8 360.4L317.0 361.0ZM1340.4 360.1L1341.8 360.4L1341.0 361.0ZM-703.9 361.6L-701.3 362.2L-702.5 363.1ZM320.1 361.6L322.7 362.2L321.5 363.1ZM1344.1 361.6L1346.7 362.2L1345.5 363.1ZM-701.0 364.3L-697.9 366.4L-700.5 368.2L-701.3 365.8ZM323.0 364.3L326.1 366.4L323.5 368.2L322.7 365.8ZM1347.0 364.3L1350.1 366.4L1347.5 368.2L1346.7 365.8Z" fill="#cdd6e5" fill-opacity="0.8" stroke="#1f1f1f" stroke-width="1.7" stroke-linejoin="round"/>
</svg>
<div class="a" style="left:1088px;top:924px;width:64px;height:128px;background:#fff;border-radius:8px;box-shadow:0 1px 6px rgba(0,0,0,0.12);"></div>
<svg class="a" style="left:1104px;top:940px" width="32" height="32" viewBox="0 0 32 32"><circle cx="16" cy="16" r="15" fill="#343741"/><path d="M16 8.5V23.5M8.5 16H23.5" stroke="#fff" stroke-width="2.6"/></svg>
<svg class="a" style="left:1104px;top:1004px" width="32" height="32" viewBox="0 0 32 32"><circle cx="16" cy="16" r="15" fill="#c9cacd"/><path d="M8.5 16H23.5" stroke="#fff" stroke-width="2.6"/></svg>
<div class="a" style="left:1088px;top:1068px;width:64px;height:64px;background:#fff;border-radius:8px;box-shadow:0 1px 6px rgba(0,0,0,0.12);"></div>
<svg class="a" style="left:1104px;top:1084px" width="32" height="32" viewBox="0 0 32 32"><g fill="none" stroke="#343741" stroke-width="2.2"><path d="M16 1V9M16 23V31M1 16H9M23 16H31"/><circle cx="16" cy="16" r="12" stroke-dasharray="14.85 4" stroke-dashoffset="-2"/></g><circle cx="16" cy="16" r="2" fill="#343741"/></svg>
<div class="a" style="left:1088px;top:1148px;width:64px;height:64px;background:#3274c8;border-radius:8px;"></div>
<svg class="a" style="left:1104px;top:1164px" width="32" height="32" viewBox="0 0 32 32"><g fill="none" stroke="#fff" stroke-width="2.4"><path d="M3 29L29 3M19 3H29V13M3 19V29H13"/></g></svg>
<div class="a" style="left:2509px;top:924px;width:64px;height:64px;background:#fff;border-radius:8px;box-shadow:0 1px 6px rgba(0,0,0,0.12);"></div>
<svg class="a" style="left:2526px;top:940px" width="32" height="32" viewBox="0 0 32 32"><g fill="none" stroke="#343741" stroke-width="2.2"><path d="M3 16H29M12 22H29M12 10H29M9 8L3 16L9 24"/></g></svg>
<svg class="a" style="left:1780.0px;top:1330px" width="21" height="21" viewBox="0 0 21 21"><g fill="none" stroke="#343741" stroke-width="1.8"><path d="M8 3H3V18H18V13"/><path d="M11 2H19V10M19 2L9 12"/></g></svg>
<svg class="a" style="left:2030.6px;top:1330px" width="21" height="21" viewBox="0 0 21 21"><g fill="none" stroke="#343741" stroke-width="1.8"><path d="M8 3H3V18H18V13"/><path d="M11 2H19V10M19 2L9 12"/></g></svg>
<svg class="a" style="left:2218.5px;top:1330px" width="21" height="21" viewBox="0 0 21 21"><g fill="none" stroke="#343741" stroke-width="1.8"><path d="M8 3H3V18H18V13"/><path d="M11 2H19V10M19 2L9 12"/></g></svg>
<svg class="a" style="left:2550.8px;top:1330px" width="21" height="21" viewBox="0 0 21 21"><g fill="none" stroke="#343741" stroke-width="1.8"><path d="M8 3H3V18H18V13"/><path d="M11 2H19V10M19 2L9 12"/></g></svg>
<div class="t" style="left:13.97px;top:57.05px;font-size:48.84px;letter-spacing:-2.366px;color:#1a1c21;font-weight:bold;">Kibana Sample Data Logs</div>
<div class="t" style="left:1771.01px;top:66.57px;font-size:29.80px;letter-spacing:-0.899px;color:#1f5fa6;font-weight:bold;">Use full data</div>
<div class="t" style="left:2191.70px;top:66.72px;font-size:29.51px;letter-spacing:-0.221px;color:#343741;">Jul 31, 2022 @ 00:39:02.91</div>
<div class="t" style="left:2618.42px;top:66.72px;font-size:29.51px;letter-spacing:-0.777px;color:#343741;">Sep 30, 2022 @ 00:39:02.91</div>
<div class="t" style="left:306.98px;top:231.66px;font-size:30.52px;letter-spacing:-0.573px;color:#69707d;">Search... (e.g. status:200 AND extension:&quot;PHP&quot;)</div>
<div class="t" style="left:1309.81px;top:228.77px;font-size:29.80px;letter-spacing:-0.295px;color:#343741;">Search all</div>
<div class="t" style="left:1985.19px;top:228.70px;font-size:30.23px;letter-spacing:-0.924px;color:#343741;font-weight:bold;">Field name</div>
<div class="t" style="left:2158.97px;top:229.39px;font-size:29.07px;letter-spacing:0.000px;color:#fff;">1</div>
<div class="t" style="left:2278.18px;top:228.70px;font-size:30.23px;letter-spacing:0.249px;color:#343741;">Field type</div>
<div class="t" style="left:2437.55px;top:229.39px;font-size:29.07px;letter-spacing:0.000px;color:#000;">6</div>
<div class="t" style="left:49.81px;top:340.79px;font-size:29.65px;letter-spacing:0.270px;color:#343741;">Total documents:</div>
<div class="t" style="left:284.22px;top:340.79px;font-size:29.65px;letter-spacing:0.135px;color:#343741;font-weight:bold;">14,074</div>
<div class="t" style="left:159.84px;top:560.66px;font-size:21.08px;letter-spacing:0.000px;color:#69707d;">0</div>
<div class="t" style="left:146.56px;top:532.97px;font-size:21.08px;letter-spacing:1.562px;color:#69707d;">50</div>
<div class="t" style="left:136.12px;top:505.29px;font-size:21.08px;letter-spacing:0.137px;color:#69707d;">100</div>
<div class="t" style="left:136.12px;top:477.61px;font-size:21.08px;letter-spacing:0.137px;color:#69707d;">150</div>
<div class="t" style="left:134.15px;top:449.92px;font-size:21.08px;letter-spacing:1.126px;color:#69707d;">200</div>
<div class="t" style="left:134.15px;top:422.24px;font-size:21.08px;letter-spacing:1.126px;color:#69707d;">250</div>
<div class="t" style="left:134.57px;top:394.56px;font-size:21.08px;letter-spacing:0.915px;color:#69707d;">300</div>
<div class="t" style="left:249.52px;top:579.16px;font-size:19.77px;letter-spacing:0.586px;color:#69707d;">1st</div>
<div class="t" style="left:510.54px;top:579.16px;font-size:19.77px;letter-spacing:2.411px;color:#69707d;">8th</div>
<div class="t" style="left:770.39px;top:579.16px;font-size:19.77px;letter-spacing:1.274px;color:#69707d;">15th</div>
<div class="t" style="left:1031.22px;top:579.16px;font-size:19.77px;letter-spacing:1.775px;color:#69707d;">22nd</div>
<div class="t" style="left:1291.65px;top:579.16px;font-size:19.77px;letter-spacing:2.208px;color:#69707d;">29th</div>
<div class="t" style="left:1552.28px;top:579.16px;font-size:19.77px;letter-spacing:2.761px;color:#69707d;">5th</div>
<div class="t" style="left:1812.13px;top:579.16px;font-size:19.77px;letter-spacing:1.640px;color:#69707d;">12th</div>
<div class="t" style="left:2072.56px;top:579.16px;font-size:19.77px;letter-spacing:1.640px;color:#69707d;">19th</div>
<div class="t" style="left:2333.39px;top:579.16px;font-size:19.77px;letter-spacing:2.075px;color:#69707d;">26th</div>
<div class="t" style="left:250.90px;top:599.06px;font-size:19.77px;letter-spacing:1.010px;color:#69707d;">August 2022</div>
<div class="t" style="left:1403.46px;top:599.06px;font-size:19.77px;letter-spacing:1.042px;color:#69707d;">September 2022</div>
<div class="t" style="left:57.20px;top:656.23px;font-size:30.09px;letter-spacing:-0.700px;color:#343741;font-weight:bold;">All fields</div>
<div class="t" style="left:202.43px;top:657.50px;font-size:28.34px;letter-spacing:0.000px;color:#000;font-weight:bold;">36</div>
<div class="t" style="left:256.20px;top:656.23px;font-size:30.09px;letter-spacing:0.553px;color:#69707d;">of 38 total</div>
<div class="t" style="left:640.19px;top:656.23px;font-size:30.09px;letter-spacing:-0.652px;color:#343741;font-weight:bold;">Number fields</div>
<div class="t" style="left:865.15px;top:657.50px;font-size:28.34px;letter-spacing:0.000px;color:#000;font-weight:bold;">5</div>
<div class="t" style="left:912.40px;top:656.23px;font-size:30.09px;letter-spacing:0.540px;color:#69707d;">of 5 total</div>
<div class="t" style="left:1332.80px;top:656.23px;font-size:30.09px;letter-spacing:-0.003px;color:#343741;">Show empty fields</div>
<div class="t" style="left:176.04px;top:755.10px;font-size:26.45px;letter-spacing:-1.041px;color:#1a1c21;font-weight:bold;">Type</div>
<div class="t" style="left:286.61px;top:755.10px;font-size:26.45px;letter-spacing:-1.524px;color:#1a1c21;font-weight:bold;">Name</div>
<div class="t" style="left:1154.31px;top:754.80px;font-size:26.45px;letter-spacing:-1.176px;color:#1a1c21;font-weight:bold;">Documents (%)</div>
<div class="t" style="left:1604.21px;top:754.80px;font-size:26.45px;letter-spacing:-1.041px;color:#1a1c21;font-weight:bold;">Distinct values</div>
<div class="t" style="left:2086.41px;top:754.80px;font-size:26.45px;letter-spacing:-1.073px;color:#1a1c21;font-weight:bold;">Distributions</div>
<div class="t" style="left:2540.47px;top:754.80px;font-size:26.45px;letter-spacing:-1.420px;color:#1a1c21;font-weight:bold;">Actions</div>
<div class="t" style="left:196.76px;top:829.69px;font-size:23.98px;letter-spacing:0.000px;color:#4d6b92;font-weight:bold;font-style:italic;">k</div>
<div class="t" style="left:287.16px;top:826.57px;font-size:26.02px;letter-spacing:-0.161px;color:#343741;">geo.dest</div>
<div class="t" style="left:1187.38px;top:826.87px;font-size:26.02px;letter-spacing:0.341px;color:#343741;">14074 (100%)</div>
<div class="t" style="left:1637.18px;top:826.87px;font-size:26.02px;letter-spacing:1.126px;color:#343741;">173</div>
<div class="t" style="left:2055.09px;top:838.80px;font-size:22.67px;letter-spacing:0.742px;color:#98a2b3;font-style:italic;">top 10 of 173 categories</div>
<div class="t" style="left:192.07px;top:902.46px;font-size:25.44px;letter-spacing:-0.651px;color:#69707d;font-weight:bold;">DOCUMENTS STATS</div>
<div class="t" style="left:200.80px;top:958.73px;font-size:25.00px;letter-spacing:0.622px;color:#343741;">count</div>
<div class="t" style="left:564.80px;top:958.73px;font-size:25.00px;letter-spacing:2.371px;color:#343741;font-weight:bold;">14074</div>
<div class="t" style="left:200.30px;top:1008.38px;font-size:25.00px;letter-spacing:0.623px;color:#343741;">percentage</div>
<div class="t" style="left:576.80px;top:1008.38px;font-size:25.00px;letter-spacing:1.213px;color:#343741;font-weight:bold;">100%</div>
<div class="t" style="left:200.80px;top:1058.03px;font-size:25.00px;letter-spacing:0.438px;color:#343741;">distinct values</div>
<div class="t" style="left:597.00px;top:1058.03px;font-size:25.00px;letter-spacing:3.046px;color:#343741;font-weight:bold;">173</div>
<div class="t" style="left:709.65px;top:902.53px;font-size:25.00px;letter-spacing:-0.851px;color:#69707d;font-weight:bold;">TOP VALUES</div>
<div class="t" style="left:708.65px;top:960.73px;font-size:25.00px;letter-spacing:0.946px;color:#343741;">CN</div>
<div class="t" style="left:752.15px;top:960.73px;font-size:25.00px;letter-spacing:0.789px;color:#2b7a69;">2621 (18.6%)</div>
<div class="t" style="left:707.65px;top:1004.73px;font-size:25.00px;letter-spacing:2.054px;color:#343741;">IN</div>
<div class="t" style="left:752.15px;top:1004.73px;font-size:25.00px;letter-spacing:0.789px;color:#2b7a69;">2323 (16.5%)</div>
<div class="t" style="left:708.15px;top:1048.73px;font-size:25.00px;letter-spacing:-0.054px;color:#343741;">US</div>
<div class="t" style="left:790.55px;top:1048.73px;font-size:25.00px;letter-spacing:0.861px;color:#2b7a69;">1120 (8%)</div>
<div class="t" style="left:707.65px;top:1092.73px;font-size:25.00px;letter-spacing:0.104px;color:#343741;">ID</div>
<div class="t" style="left:783.70px;top:1092.73px;font-size:25.00px;letter-spacing:0.548px;color:#2b7a69;">487 (3.5%)</div>
<div class="t" style="left:707.90px;top:1136.73px;font-size:25.00px;letter-spacing:-1.675px;color:#343741;">BR</div>
<div class="t" style="left:783.70px;top:1136.73px;font-size:25.00px;letter-spacing:0.755px;color:#2b7a69;">411 (2.9%)</div>
<div class="t" style="left:707.90px;top:1180.73px;font-size:25.00px;letter-spacing:-1.175px;color:#343741;">PK</div>
<div class="t" style="left:783.45px;top:1180.73px;font-size:25.00px;letter-spacing:0.576px;color:#2b7a69;">318 (2.3%)</div>
<div class="t" style="left:707.90px;top:1224.73px;font-size:25.00px;letter-spacing:-0.675px;color:#343741;">BD</div>
<div class="t" style="left:783.45px;top:1224.73px;font-size:25.00px;letter-spacing:0.576px;color:#2b7a69;">315 (2.2%)</div>
<div class="t" style="left:707.90px;top:1268.73px;font-size:25.00px;letter-spacing:0.596px;color:#343741;">NG</div>
<div class="t" style="left:783.45px;top:1268.73px;font-size:25.00px;letter-spacing:0.576px;color:#2b7a69;">304 (2.2%)</div>
<div class="t" style="left:707.90px;top:1312.73px;font-size:25.00px;letter-spacing:-0.304px;color:#343741;">RU</div>
<div class="t" style="left:782.95px;top:1312.73px;font-size:25.00px;letter-spacing:0.632px;color:#2b7a69;">259 (1.8%)</div>
<div class="t" style="left:707.90px;top:1356.73px;font-size:25.00px;letter-spacing:0.925px;color:#343741;">MX</div>
<div class="t" style="left:782.95px;top:1356.73px;font-size:25.00px;letter-spacing:0.632px;color:#2b7a69;">248 (1.8%)</div>
<div class="t" style="left:2490.63px;top:1279.04px;font-size:21.80px;letter-spacing:0.054px;color:#343741;font-weight:bold;">zoom:</div>
<div class="t" style="left:2560.25px;top:1279.04px;font-size:21.80px;letter-spacing:0.000px;color:#343741;">0</div>
<div class="t" style="left:1529.70px;top:1327.92px;font-size:22.53px;letter-spacing:0.207px;color:#343741;">Made with NaturalEarth</div>
<div class="t" style="left:1800.20px;top:1327.92px;font-size:22.53px;letter-spacing:0.000px;color:#343741;">,</div>
<div class="t" style="left:1810.90px;top:1327.92px;font-size:22.53px;letter-spacing:-0.025px;color:#343741;">Elastic Maps Service</div>
<div class="t" style="left:2050.20px;top:1327.92px;font-size:22.53px;letter-spacing:0.000px;color:#343741;">,</div>
<div class="t" style="left:2064.30px;top:1327.92px;font-size:22.53px;letter-spacing:-0.063px;color:#343741;">OpenMapTiles</div>
<div class="t" style="left:2238.20px;top:1327.92px;font-size:22.53px;letter-spacing:0.000px;color:#343741;">,</div>
<div class="t" style="left:2252.10px;top:1327.92px;font-size:22.53px;letter-spacing:0.223px;color:#343741;">OpenStreetMap contributors</div>
</body></html>
